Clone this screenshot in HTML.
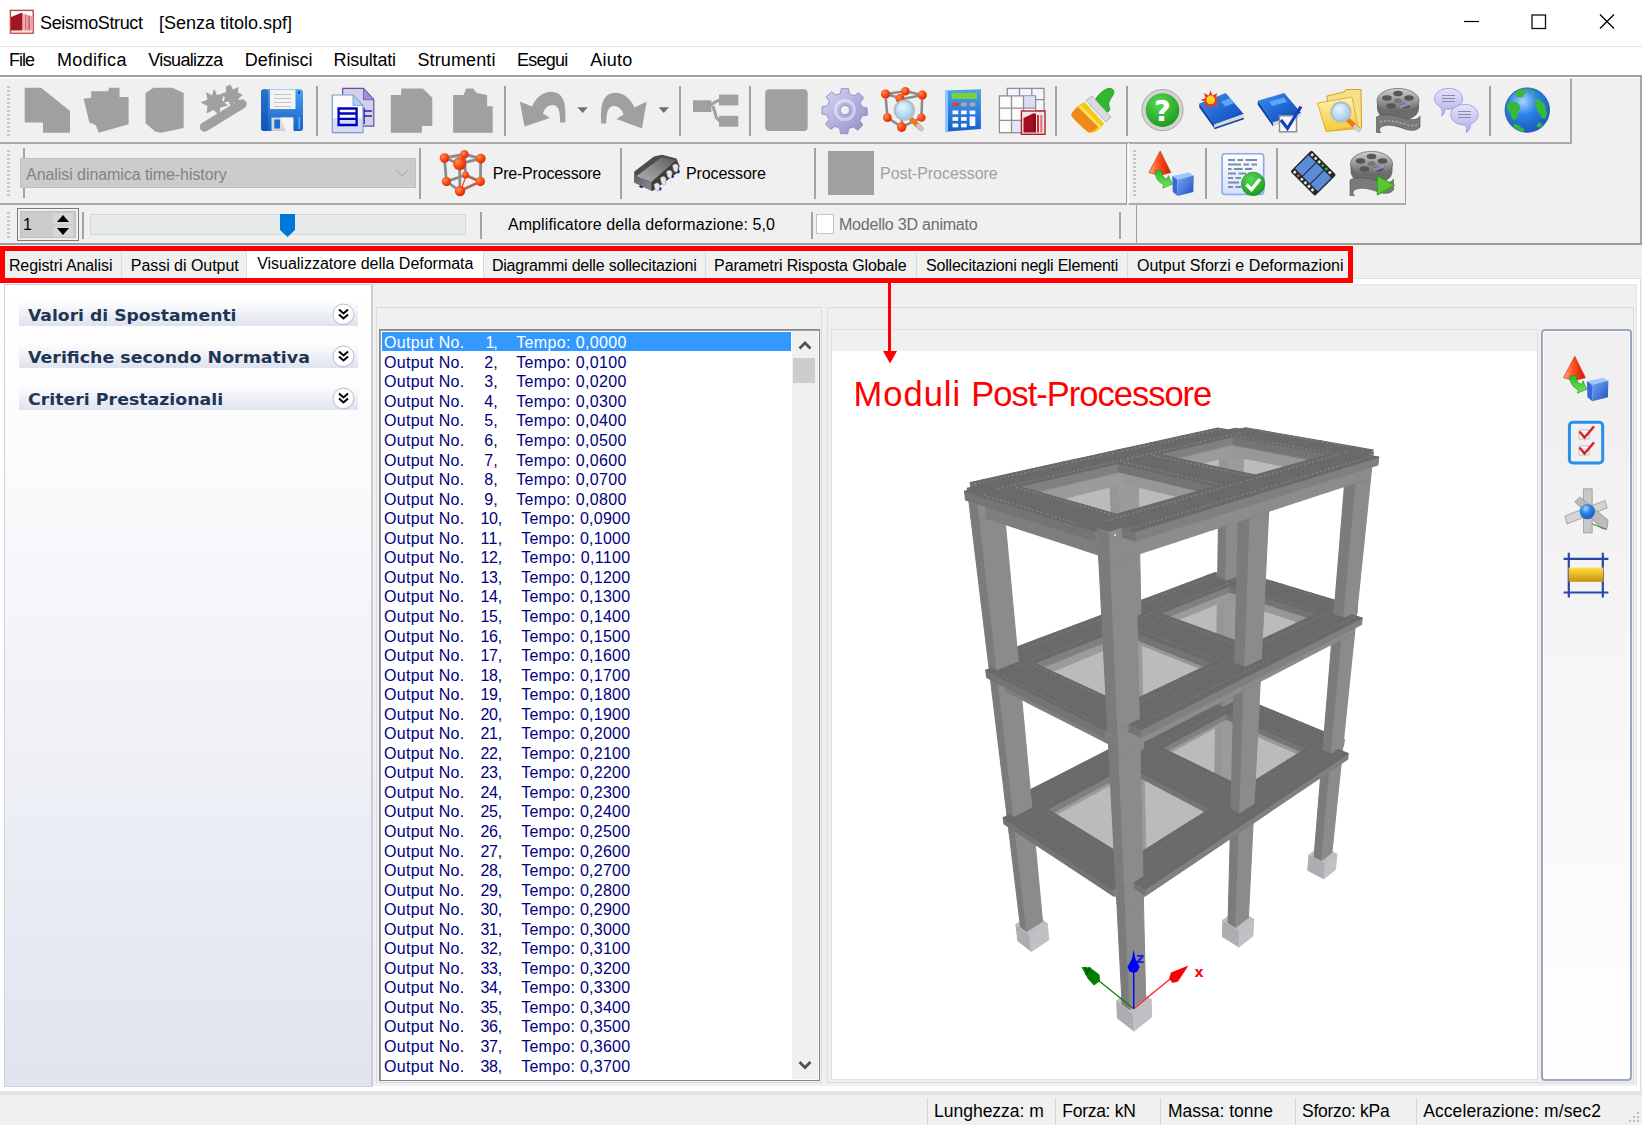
<!DOCTYPE html>
<html lang="it">
<head>
<meta charset="utf-8">
<title>SeismoStruct [Senza titolo.spf]</title>
<style>
html,body{margin:0;padding:0;}
body{width:1642px;height:1125px;position:relative;overflow:hidden;background:#f0f0f0;font-family:"Liberation Sans",sans-serif;color:#000;}
.abs{position:absolute;}
.t{position:absolute;white-space:pre;line-height:1;}
#titlebar{left:0;top:0;width:1642px;height:46px;background:#fff;}
#menubar{left:0;top:46px;width:1642px;height:30px;background:#fff;border-top:1px solid #e5e5e5;box-sizing:border-box;}
.title{font-size:18px;top:13px;color:#000;}
.menu{font-size:18px;top:52px;color:#000;}
.vsep{position:absolute;width:1px;background:#a0a0a0;border-right:1px solid #fff;}
.tabtxt{font-size:16px;top:257px;color:#000;}
.hdr{position:absolute;left:19px;width:339px;height:24px;background:linear-gradient(#fdfdfe,#dfe3ee);}
.hdr span{position:absolute;left:9px;top:4px;font-family:"DejaVu Sans","Liberation Sans",sans-serif;font-weight:bold;font-size:16.5px;letter-spacing:0.45px;color:#1e3556;white-space:pre;line-height:1;}
.row{position:absolute;left:383px;height:19.58px;font-size:16px;color:#000080;white-space:pre;line-height:19.58px;}
.st{font-size:17px;top:1102px;color:#000;}
</style>
</head>
<body>
<!-- title bar -->
<div class="abs" id="titlebar"></div>
<svg class="abs" style="left:9px;top:9px" width="26" height="26" viewBox="9 9 26 26">
  <rect x="10.400" y="10.400" width="22.800" height="22.800" fill="#fff" stroke="#c2473f" stroke-width="1.400"/>
  <polygon points="11,17 21.600,12.800 22.500,13.300 22.500,30.500 11,30.500" fill="#a0151f"/>
  <polygon points="23,13.600 24.700,14 24.700,30.500 23,30.500" fill="#eab0b6"/>
  <polygon points="24.800,14 26.500,14.600 26.500,30.500 24.800,30.500" fill="#d8606e"/>
  <polygon points="26.600,14.800 28.100,15.200 28.100,30.500 26.600,30.500" fill="#e8949c"/>
  <polygon points="28.200,15.200 30.100,15.800 30.100,30.500 28.200,30.500" fill="#d85868"/>
  <polygon points="30.200,15.800 32.400,16.200 32.400,30.500 30.200,30.500" fill="#e3a2a6"/>
  <rect x="11" y="30.900" width="21.500" height="1.300" fill="#f6dcdc"/>
</svg>
<!-- window buttons -->
<svg class="abs" style="left:1450px;top:0" width="192" height="46" viewBox="0 0 192 46">
  <path d="M14 21.5H29" stroke="#000" stroke-width="1.2" fill="none"/>
  <rect x="82" y="15" width="13.5" height="13.5" stroke="#111" stroke-width="1.3" fill="none"/>
  <path d="M150 14.5L164 28.5M164 14.5L150 28.5" stroke="#000" stroke-width="1.3" fill="none"/>
</svg>
<!-- menu bar -->
<div class="abs" id="menubar"></div>
<div class="abs" style="left:0;top:75px;width:1642px;height:2px;background:#a0a0a0;border-bottom:1px solid #fff"></div>
<!-- toolbar row 1 -->
<div class="abs" style="left:0;top:78px;width:1570px;height:62.5px;background:#f0f0f0;border-right:2px solid #a8a8a8;border-bottom:2px solid #ababab;border-top:1px solid #fbfbfb"></div>
<div class="abs" style="left:1640px;top:77px;width:2px;height:167px;background:#a6a6a6"></div>
<!-- toolbar row 2 -->
<div class="abs" style="left:0;top:143px;width:1126px;height:60px;border-right:1px solid #a0a0a0;border-bottom:2px solid #ababab"></div>
<div class="abs" style="left:1128px;top:143px;width:276px;height:60px;border-right:1px solid #a0a0a0;border-bottom:2px solid #ababab;border-left:1px solid #fff"></div>

<!-- toolbar row 3 -->
<div class="abs" style="left:0;top:205px;width:1136px;height:38px;border-right:1px solid #a0a0a0;border-bottom:2px solid #9c9c9c"></div>
<div class="abs" style="left:1137px;top:243px;width:505px;height:2px;background:#9c9c9c"></div>

<!-- grips -->
<div class="abs grip" style="left:7px;top:84px;height:52px"></div>
<div class="abs grip" style="left:7px;top:148px;height:50px"></div>
<div class="abs grip" style="left:7px;top:210px;height:28px"></div>
<div class="abs grip" style="left:1133px;top:148px;height:50px"></div>
<style>
.grip{width:3px;background:repeating-linear-gradient(#f0f0f0 0,#f0f0f0 2px,#c6c6c6 2px,#c6c6c6 4px);}
.ts{position:absolute;width:2px;background:#a3a3a3;}
</style>
<!-- separators row1 -->
<div class="ts" style="left:316px;top:86px;height:50px"></div>
<div class="ts" style="left:504px;top:86px;height:50px"></div>
<div class="ts" style="left:679px;top:86px;height:50px"></div>
<div class="ts" style="left:749px;top:86px;height:50px"></div>
<div class="ts" style="left:1055px;top:86px;height:50px"></div>
<div class="ts" style="left:1126px;top:86px;height:50px"></div>
<div class="ts" style="left:1489px;top:86px;height:50px"></div>
<!-- row2 -->
<div class="ts" style="left:23px;top:148px;height:18px"></div>
<div class="ts" style="left:23px;top:188px;height:10px"></div>
<div class="ts" style="left:419px;top:148px;height:51px"></div>
<div class="ts" style="left:620px;top:148px;height:51px"></div>
<div class="ts" style="left:814px;top:148px;height:51px"></div>
<div class="ts" style="left:1205px;top:148px;height:51px"></div>
<div class="ts" style="left:1276px;top:148px;height:51px"></div>
<!-- combobox -->
<div class="abs" style="left:20px;top:158px;width:396px;height:30px;background:#cccccc;border:1px solid #bfbfbf;box-sizing:border-box"></div>
<svg class="abs" style="left:395px;top:168px" width="14" height="10"><path d="M1 2L7 8L13 2" stroke="#b4b4b4" stroke-width="1.3" fill="none"/></svg>
<div class="abs" style="left:828px;top:151px;width:46px;height:44px;background:#a0a0a0"></div>
<!-- row3 -->
<div class="abs" style="left:17px;top:208px;width:62px;height:33px;border:1px solid #7a7a7a;box-sizing:border-box;background:#f0f0f0"></div>
<div class="abs" style="left:20px;top:211px;width:56px;height:27px;background:#cccccc;border:1px solid #bdbdbd;box-sizing:border-box"></div>
<svg class="abs" style="left:53px;top:213px" width="20" height="24" viewBox="0 0 20 24"><rect x="0" y="0" width="20" height="11" fill="#d6d6d6"/><rect x="0" y="13" width="20" height="11" fill="#d6d6d6"/><path d="M4 9L10 2L16 9Z M4 15L10 22L16 15Z" fill="#000"/></svg>
<div class="ts" style="left:82px;top:212px;height:27px"></div>
<div class="abs" style="left:90px;top:214px;width:376px;height:21px;background:#e7eaea;border:1px solid #d6d6d6;box-sizing:border-box"></div>
<svg class="abs" style="left:280px;top:214px" width="15" height="24" viewBox="0 0 15 24"><path d="M0 0H15V16L7.5 23L0 16Z" fill="#0078d7"/></svg>
<div class="ts" style="left:480px;top:212px;height:27px"></div>
<div class="ts" style="left:811px;top:212px;height:27px"></div>
<div class="abs" style="left:816px;top:214px;width:18px;height:20px;background:#fff;border:1px solid #c4c4c4;box-sizing:border-box"></div>
<div class="ts" style="left:1119px;top:212px;height:27px"></div>
<svg class="abs" style="left:0;top:78px" width="1570" height="64" viewBox="0 78 1570 64">
<defs>
<linearGradient id="gBlue" x1="0" y1="0" x2="0" y2="1"><stop offset="0" stop-color="#4aa0f0"/><stop offset="1" stop-color="#1660c8"/></linearGradient>
<linearGradient id="gGear" x1="0" y1="0" x2="1" y2="1"><stop offset="0" stop-color="#d8d8f4"/><stop offset="1" stop-color="#8c8cc8"/></linearGradient>
<radialGradient id="gNode" cx="0.35" cy="0.35" r="0.8"><stop offset="0" stop-color="#ff9050"/><stop offset="0.5" stop-color="#ff4410"/><stop offset="1" stop-color="#c02000"/></radialGradient>
<radialGradient id="gLens" cx="0.4" cy="0.35" r="0.8"><stop offset="0" stop-color="#e8f6ff"/><stop offset="1" stop-color="#88c0e8"/></radialGradient>
<radialGradient id="gGreen" cx="0.4" cy="0.3" r="0.9"><stop offset="0" stop-color="#58d858"/><stop offset="1" stop-color="#108c10"/></radialGradient>
<radialGradient id="gGlobe" cx="0.4" cy="0.3" r="0.9"><stop offset="0" stop-color="#a8d4ff"/><stop offset="0.35" stop-color="#2c84e8"/><stop offset="1" stop-color="#0c48a8"/></radialGradient>
<linearGradient id="gBook" x1="0" y1="0" x2="1" y2="1"><stop offset="0" stop-color="#3c8cf0"/><stop offset="1" stop-color="#0848b8"/></linearGradient>
<linearGradient id="gFolder" x1="0" y1="0" x2="0" y2="1"><stop offset="0" stop-color="#fff4b0"/><stop offset="1" stop-color="#f4c838"/></linearGradient>
<linearGradient id="gReel" x1="0" y1="0" x2="0" y2="1"><stop offset="0" stop-color="#d0d0d0"/><stop offset="1" stop-color="#606060"/></linearGradient>
<linearGradient id="gChat" x1="0" y1="0" x2="0" y2="1"><stop offset="0" stop-color="#e4e4fc"/><stop offset="1" stop-color="#b0b0e8"/></linearGradient>
</defs>
<g fill="#a0a0a0">
<!-- new -->
<polygon points="24.7,87.8 41.1,87.8 70,111 70,132.7 43,132.7 43,122.4 24.7,122.4"/>
<!-- open -->
<polygon points="83.6,98.8 91.2,97.8 91.2,91.2 108.2,91.2 109.1,87.8 119.5,87.8 119.5,96.9 128.6,96.9 128.6,124.3 98.7,132.7 95.9,125.2 89.3,122.4"/>
<!-- 3 -->
<polygon points="145.5,93.1 153.5,87.8 172.4,87.8 183.7,93.1 183.7,128 161,132.7 155.4,131.8 145.5,123.3"/>
<!-- wand -->
<path d="M204.500 127L242 104" stroke="#a0a0a0" stroke-width="9.500" stroke-linecap="round"/>
<polygon points="214,88.500 217,95 224.500,93 222,100.500 228,105.500 220.500,107.500 219,115 213.500,110 206.500,113.500 207.500,106 200.500,102.500 207.500,99.500 206,92 212,95.500"/>
<polygon points="230.500,84.500 233,89.500 238.500,87 238,92.500 243,95 238.500,98.500 240,103.500 234.500,102.500 231,106.500 228.500,101.500 223,102.500 225,97.500 221,94 226,92 226,86.500"/>
<!-- copy disabled -->
<polygon points="401.2,88.4 422.9,88.4 432.3,97.8 432.3,126.1 421.9,126.1 421.9,132.7 390.8,132.7 390.8,95 401.2,95"/>
<!-- paste disabled -->
<polygon points="453.1,95 463.5,95 466.3,88.4 472.9,88.4 476.7,93.1 487.1,95 487.1,106.3 492.7,106.3 492.7,132.7 453.1,132.7"/>
<!-- undo -->
<path d="M519.8 101.6L524.5 126.5L550 118L543 113.5C545 106 552 103 556.5 106.5C559.5 109 560 114 560.2 122.6L565.3 122.6C565.8 112 566 100 559.5 94.5C551 88.5 538 92.5 532 106.5Z"/>
<!-- redo -->
<path d="M646.7 101.6L642 128.5L616.5 119L623.5 114.5C621.5 107 614.5 104 610 107.500C607 110 606.5 115 606.3 123.600L601.200 123.600C600.700 113 600.500 101 607 95.500C615.500 89.500 628.500 93.500 634.500 107.500Z"/>
<!-- tree -->
<rect x="693" y="100.3" width="18.4" height="11.7"/>
<rect x="719" y="94.6" width="19.3" height="10.8"/>
<rect x="719" y="115.8" width="19.3" height="10.9"/>
<path d="M709 106L716 101.500L720 100M713 106L716.500 118L720 121" stroke="#a0a0a0" stroke-width="3" fill="none"/>
<!-- square -->
<rect x="765.2" y="89.3" width="42.5" height="41.6" rx="4"/>
</g>
<g fill="#707070"><polygon points="577.4,107.3 587.8,107.3 582.6,112.9"/><polygon points="658.6,107.3 669,107.3 663.8,112.9"/></g>
<!-- save -->
<g>
<rect x="261" y="89.3" width="42" height="41.6" rx="3" fill="url(#gBlue)"/>
<rect x="261" y="89.3" width="7" height="41.6" rx="3" fill="#0c4cb0" opacity="0.55"/>
<rect x="270" y="89.6" width="25.5" height="19.5" fill="#f4f4f4"/>
<path d="M274 94.500H291M274 98.500H291M274 102.500H291M274 106.500H291" stroke="#c4c4c4" stroke-width="1.2"/>
<rect x="271.500" y="117.600" width="21.800" height="13.300" fill="#d8d8d8"/>
<polygon points="280,117.600 293.300,117.600 293.300,130.900 286,130.900" fill="#f4f4f4"/>
<rect x="274.300" y="119.500" width="5.700" height="9" fill="#1c6cd8"/>
<rect x="298" y="91.500" width="2" height="2" fill="#083c90"/>
<rect x="298.500" y="117" width="1.600" height="12" fill="#5cb0ff"/>
</g>
<!-- copy (enabled) -->
<g>
<polygon points="342.700,88.400 363.500,88.400 373.800,99.700 373.800,126.100 342.700,126.100" fill="#d4d0ec" stroke="#6850a8" stroke-width="1.200"/>
<polygon points="363.500,88.400 373.800,99.700 363.500,99.700" fill="#a090d8" stroke="#6850a8" stroke-width="0.800"/>
<path d="M364 108V124M364 111H372M364 116H372" stroke="#2020a8" stroke-width="1.600" fill="none"/>
<polygon points="332.300,95 353,95 363,105.400 363,132.700 332.300,132.700" fill="#fbfcff" stroke="#7c98d0" stroke-width="1.200"/>
<polygon points="353,95 363,105.400 353,105.400" fill="#a8d4f0" stroke="#7c98d0" stroke-width="0.800"/>
<rect x="333" y="118" width="29.300" height="14" fill="#c4d0ec" opacity="0.7"/>
<path d="M338.600 107.600V126M356.600 107.600V126M337.400 108.500H357.800M338.600 113.500H356.600M338.600 118.800H356.600M337.400 125H357.800" stroke="#0000c0" stroke-width="2.300" fill="none"/>
</g>
</svg>
<svg class="abs" style="left:0;top:78px" width="1570" height="64" viewBox="0 78 1570 64">
<!-- gear -->
<g transform="translate(844.9 110.1)">
<path id="gearp" fill="url(#gGear)" stroke="#8484c0" stroke-width="0.8" d="M-3.6 -21.5L3.6 -21.5L4.6 -16.2L9.2 -14.3L13.600 -17.400L18.700 -12.300L15.400 -7.700L17.100 -3.100L22.300 -2L22.300 5.100L17 6L15 10.500L18 15L12.800 20L8.400 16.800L3.800 18.500L2.800 23.700L-4.400 23.500L-5.200 18.200L-9.800 16.200L-14.300 19.200L-19.300 14L-16 9.600L-17.800 5L-23 3.800L-22.800 -3.400L-17.500 -4.200L-15.600 -8.800L-18.600 -13.300L-13.400 -18.300L-9 -15L-4.500 -16.700Z"/>
<circle r="4.700" fill="#f0f0f0" stroke="#8484c0" stroke-width="0.800"/>
<circle r="9.500" fill="none" stroke="#ffffff" stroke-opacity="0.45" stroke-width="3"/>
</g>
<!-- cube with magnifier -->
<g stroke="#8c8c8c" stroke-width="2.600" fill="none">
<path d="M885.500 94L905.300 91.200L922.300 95L921.400 117.600L901.600 127.100L887.400 117.600ZM885.500 94L903 99L922.300 95M903 99L901.600 127.100"/>
</g>
<g fill="url(#gNode)"><circle cx="885.500" cy="94" r="4.600"/><circle cx="905.300" cy="91.200" r="4.300"/><circle cx="922.300" cy="95" r="4.600"/><circle cx="887.400" cy="117.600" r="4.400"/><circle cx="921.400" cy="117.600" r="4.200"/><circle cx="901.600" cy="127.100" r="4.800"/><circle cx="900" cy="98.500" r="4.500"/></g>
<path d="M911 119L921 128.500" stroke="#f07818" stroke-width="5" stroke-linecap="round"/>
<path d="M918.500 126L921.500 129" stroke="#c8c8c8" stroke-width="4.500" stroke-linecap="round"/>
<circle cx="904.400" cy="110.100" r="9.600" fill="url(#gLens)" stroke="#b8bcc4" stroke-width="2.200"/>
<!-- calculator -->
<g>
<polygon points="945,90.500 980.900,89.300 980.900,129 945,131.800" fill="url(#gBlue)"/>
<polygon points="945,90.500 948,89.500 948,131.500 945,131.800" fill="#8cc4ff"/>
<rect x="951.600" y="92.700" width="25.500" height="6.300" fill="#78d040"/>
<rect x="952.500" y="102.600" width="5.700" height="3.800" fill="#e04030"/><rect x="961" y="102.600" width="5.700" height="3.800" fill="#b0a8a8"/><rect x="969.600" y="102.600" width="5.700" height="3.800" fill="#b0a8a8"/>
<g fill="#f4f8ff"><rect x="952.500" y="110.500" width="5.700" height="3.800"/><rect x="961" y="110.500" width="5.700" height="3.800"/><rect x="969.600" y="110.500" width="5.700" height="3.800"/>
<rect x="952.500" y="117" width="5.700" height="3.800"/><rect x="961" y="117" width="5.700" height="3.800"/><rect x="969.600" y="116.500" width="5.700" height="9.500"/>
<rect x="952.500" y="123.500" width="5.700" height="3.800"/><rect x="961" y="123.500" width="5.700" height="3.800"/></g>
</g>
<!-- table + logo -->
<g stroke="#909090" stroke-width="1.300">
<rect x="1007.300" y="88.400" width="36.800" height="34" fill="#f4f4ff"/>
<path d="M1019.500 88.400V122M1031.800 88.400V122M1007.300 99.700H1044M1007.300 111H1044" fill="none"/>
<rect x="999.400" y="95.900" width="36.200" height="36.800" fill="#fcfcff"/>
<rect x="1024" y="96.500" width="11" height="11.500" fill="#dcdcf8" stroke="none"/><rect x="1012" y="120.500" width="11" height="11.500" fill="#e4e4fa" stroke="none"/>
<path d="M1011.500 95.900V132.700M1023.500 95.900V132.700M999.400 108.200H1035.600M999.400 120.400H1035.600" fill="none"/>
</g>
<rect x="1021.400" y="111" width="23.600" height="23.300" fill="#f8e4e4" stroke="#b02030" stroke-width="1.400"/>
<polygon points="1023.500,118 1033,113.500 1033,132.500 1023.500,132.500" fill="#a01020"/>
<rect x="1033" y="113.500" width="3" height="19" fill="#8c0c18"/><rect x="1037" y="115" width="2" height="17.500" fill="#c83040"/><rect x="1040.300" y="115" width="2" height="17.500" fill="#e07078"/>
<!-- brush -->
<g>
<path d="M1094 102C1098 94 1104 90 1108 88.500C1112 87.500 1115 90.500 1113.500 94C1111 99 1107 102 1109.500 107.500C1110.500 110.500 1108 113 1105 112Z" fill="#30b830" stroke="#208c20" stroke-width="0.800"/>
<polygon points="1086,100.500 1092,96 1111,117 1106,122" fill="#d8dce0" stroke="#a0a4a8" stroke-width="0.700"/>
<path d="M1084.500 102L1104 123.500C1100 130 1094 134 1088.500 132.500C1082 127 1074 120 1071 115C1073 110 1078 105 1084.500 102Z" fill="#f8c818"/>
<path d="M1071 115C1074 120 1082 127 1088.500 132.500C1092 132 1096 129.500 1098 126.500L1077.500 107C1075 109 1072.500 112 1071 115Z" fill="#f08818"/>
<path d="M1080 106.500L1101 128" stroke="#fce870" stroke-width="2" fill="none"/>
</g>
<!-- help -->
<circle cx="1162.500" cy="110.100" r="20.600" fill="#d4d4d4" stroke="#a8a8a8" stroke-width="1"/>
<circle cx="1162.500" cy="110.100" r="16.800" fill="url(#gGreen)"/>
<text x="1162.500" y="120.500" text-anchor="middle" font-family="DejaVu Sans, Liberation Sans, sans-serif" font-weight="bold" font-size="29" fill="#ffffff">?</text>
<!-- book with star -->
<g>
<polygon points="1199.300,103.500 1225.700,93.100 1243.700,113.900 1214.400,124.500" fill="url(#gBook)"/>
<polygon points="1199.300,103.500 1214.400,124.500 1214.400,128.500 1199.300,107.500" fill="#0a44a8"/>
<polygon points="1214.400,124.500 1243.700,113.900 1243.700,118 1214.400,128.500" fill="#d8d8d8"/>
<path d="M1214.400 128.500L1243.700 118.600" stroke="#0a44a8" stroke-width="1.600"/>
<polygon points="1221,101.500 1230,98 1234,103 1225,106.500" fill="#5ca4f8"/>
<polygon points="1210.600,90.500 1212.500,95.500 1217.500,93 1215.500,98 1220.500,100 1215.500,102 1217.500,107 1212.500,104.500 1210.600,109.500 1208.700,104.500 1203.700,107 1205.700,102 1200.700,100 1205.700,98 1203.700,93 1208.700,95.500" fill="#f03818"/>
<circle cx="1210.600" cy="99.900" r="4.300" fill="#ffd020"/>
</g>
<!-- book with check -->
<g>
<polygon points="1257.800,100.700 1284.200,93.100 1301.200,112.900 1273,122.500" fill="url(#gBook)"/>
<polygon points="1257.800,100.700 1273,122.500 1273,126.500 1257.800,104.700" fill="#0a44a8"/>
<polygon points="1273,122.500 1301.200,112.900 1301.200,116.500 1273,126.500" fill="#d8d8d8"/>
<polygon points="1269,101.500 1284,97.500 1287,102 1272,106" fill="#5ca4f8"/>
<rect x="1279.500" y="115.800" width="17" height="16" fill="#fafafa" stroke="#909090" stroke-width="1.500"/>
<path d="M1281 120L1287.500 128.500L1301 106.500" stroke="#1040c0" stroke-width="3.200" fill="none"/>
</g>
<!-- folder with magnifier -->
<g>
<polygon points="1327,96 1344,92 1346,89.500 1361,89.500 1361.500,128 1330,131" fill="#f8e088" stroke="#d0a020" stroke-width="1"/>
<polygon points="1317.500,103 1352,97 1358,127 1326,131.500" fill="url(#gFolder)" stroke="#e0b030" stroke-width="1"/>
<path d="M1347.500 119.500L1358 129" stroke="#f07818" stroke-width="5" stroke-linecap="round"/>
<path d="M1355.500 127L1358.500 130" stroke="#d0d0d0" stroke-width="4.500" stroke-linecap="round"/>
<circle cx="1340.900" cy="112" r="9.600" fill="url(#gLens)" stroke="#b8bcc4" stroke-width="2.200"/>
</g>
<!-- film reel -->
<g id="reel">
<path d="M1377 100V108C1377 116 1386 121 1398 121C1410 121 1419 116 1419 108V100Z" fill="#6c6c6c"/>
<ellipse cx="1398" cy="100.700" rx="21" ry="12.300" fill="url(#gReel)" stroke="#707070" stroke-width="0.800"/>
<ellipse cx="1398" cy="100.700" rx="4" ry="2.500" fill="#787878"/>
<g fill="#565656"><ellipse cx="1398" cy="93.500" rx="4.800" ry="2.800"/><ellipse cx="1387" cy="98" rx="4.800" ry="2.800"/><ellipse cx="1409" cy="98" rx="4.800" ry="2.800"/><ellipse cx="1391" cy="106" rx="4.800" ry="2.800"/><ellipse cx="1405" cy="106" rx="4.800" ry="2.800"/></g>
<path d="M1400 107L1410 103" stroke="#a0a0f0" stroke-width="3" opacity="0.700"/>
<path d="M1376.500 117C1384 112 1398 116 1408 119C1414 120.500 1419 119 1420 116V127C1417 131 1410 131.500 1402 128C1394 125 1386 124 1381 127C1379 129 1379 131 1381 132.500H1376.500Z" fill="#7a7a7a" stroke="#505050" stroke-width="0.600"/>
<path d="M1380 122C1388 119 1398 122 1408 125C1413 126.500 1417 125.500 1419 123" stroke="#b8b8b8" stroke-width="1.200" fill="none" stroke-dasharray="2 2"/>
</g>
<!-- chat bubbles -->
<g stroke="#9c9cd8" stroke-width="0.900">
<path d="M1448.600 88.400C1456.500 88.400 1462.600 93 1462.600 98.800C1462.600 104.500 1456.500 109.200 1448.600 109.200C1447 109.200 1446 109 1445 108.800C1445 112 1444 114.500 1441.500 116C1442.500 113 1442 110 1441 107.500C1437 105.500 1434.600 102.500 1434.600 98.800C1434.600 93 1440.700 88.400 1448.600 88.400Z" fill="url(#gChat)"/>
<path d="M1464.400 104.400C1472.300 104.400 1478 109 1478 114.800C1478 119 1475 122.500 1470.500 124C1470.500 128 1469 131 1466 132.700C1467 129.500 1466.500 127 1465.500 125.200C1457 125.200 1450.800 120.500 1450.800 114.800C1450.800 109 1456.500 104.400 1464.400 104.400Z" fill="url(#gChat)"/>
</g>
<path d="M1442 95.500H1455M1442 98.500H1455M1442 101.500H1455M1458 111.500H1471M1458 114.500H1471M1458 117.500H1471" stroke="#8c8ca8" stroke-width="1.200"/>
<!-- globe -->
<circle cx="1527.300" cy="110.100" r="22.200" fill="url(#gGlobe)" stroke="#1c4ca0" stroke-width="0.800"/>
<g fill="#38b838">
<path d="M1516 92C1519 89.500 1523 88.500 1526 89C1528 91 1526 93 1523.500 94C1524.500 96.500 1522 98.500 1519.500 97C1517 98 1514 96 1516 92Z"/>
<path d="M1508 103C1511 100.500 1516 101 1518.500 104C1521 106 1520.500 110 1518 112C1519 115.500 1517 119 1514 120.500C1511.500 119 1510 116 1510.500 113C1507.500 111 1506 107 1508 103Z"/>
<path d="M1536 99C1538.500 98 1541 99.500 1541.500 102C1544 103 1546 106 1545.500 109C1547.500 112 1547 116 1545 118.500C1542 119.500 1540 117 1540.500 114C1537.500 113 1536 110 1537 107C1534.500 105 1534 101 1536 99Z"/>
<path d="M1514 124.500C1517 123.500 1520 125 1521 127.500C1524 128 1525.500 130 1524 131.800C1520 131.500 1516 129.500 1513 126.500Z"/>
<path d="M1538 123C1540 122 1542.500 123 1542 125.500C1540.500 127.500 1538 128 1536.500 126.500Z"/>
<path d="M1531 90.500C1533 90 1535.500 91.500 1535 93.500C1533 94.500 1531 93.500 1531 90.500Z"/>
</g>
</svg>
<svg class="abs" style="left:420px;top:143px" width="990" height="60" viewBox="420 143 990 60">
<defs>
<linearGradient id="gChip" x1="0" y1="0" x2="1" y2="1"><stop offset="0" stop-color="#b4b4b4"/><stop offset="1" stop-color="#505050"/></linearGradient>
<linearGradient id="gCone" x1="0" y1="0" x2="1" y2="0"><stop offset="0" stop-color="#ffb070"/><stop offset="0.45" stop-color="#ff5020"/><stop offset="1" stop-color="#d01800"/></linearGradient>
<linearGradient id="gCubeF" x1="0" y1="0" x2="1" y2="1"><stop offset="0" stop-color="#78a8f8"/><stop offset="1" stop-color="#2050c0"/></linearGradient>
<linearGradient id="gDoc" x1="0" y1="0" x2="0" y2="1"><stop offset="0" stop-color="#ffffff"/><stop offset="1" stop-color="#d4e0fc"/></linearGradient>
<linearGradient id="gArrG" x1="0" y1="0" x2="0" y2="1"><stop offset="0" stop-color="#30b830"/><stop offset="1" stop-color="#70e850"/></linearGradient>
<g id="conecube">
<polygon points="11.400,0 22,21.500 11,24.500 0,21.500" fill="url(#gCone)" stroke="#c82810" stroke-width="0.600"/>
<path d="M6.500 19.500C6 26 9 31 15 33.500L14 37L23.500 33L19.500 24.500L18.500 28C14.500 27 12.500 23.500 13 19.500Z" fill="url(#gArrG)" stroke="#189018" stroke-width="0.600"/>
<polygon points="23.500,25 40,21.500 45,24.500 28.500,28.500" fill="#a0c4ff"/>
<polygon points="23.500,25 28.500,28.500 29,45 24,41" fill="#3868d8"/>
<polygon points="28.500,28.500 45,24.500 44.500,41 29,45" fill="url(#gCubeF)"/>
</g>
</defs>
<!-- pre-processor cube -->
<g stroke="#8c8c8c" stroke-width="2.800" fill="none">
<path d="M444.500 158L464.400 154.300L480.800 158.600L480.400 181.600L460 191L446.400 181.600ZM444.500 158L459.600 163.700L480.800 158.600M459.600 163.700L460 191M464.400 154.300L465.500 175L446.400 181.600M465.500 175L480.400 181.600"/>
</g>
<path d="M466 176L480 182L461 190Z" fill="none" stroke="#ff4010" stroke-width="1.200"/>
<g fill="url(#gNode)"><circle cx="444.500" cy="158" r="4.800"/><circle cx="464.400" cy="154.300" r="4.200"/><circle cx="480.800" cy="158.600" r="4.800"/><circle cx="446.400" cy="181.600" r="4.600"/><circle cx="480.400" cy="181.600" r="4.600"/><circle cx="460" cy="191" r="5.200"/><circle cx="465.500" cy="175" r="3.400"/><circle cx="459.600" cy="163.700" r="6.600"/></g>
<!-- chip -->
<g>
<polygon points="634.300,171.400 654,156.500 662,154.800 676.500,158.500 679.300,165.500 678.800,171.400 652.400,191 650.900,190.500 634.300,182.600" fill="#4c4c4c"/>
<polygon points="651.400,182.100 675.800,160.200 679.300,165.500 678.800,171.400 652.400,190.900" fill="#3c3c3c"/>
<g fill="#1818a0"><ellipse cx="659.500" cy="188.800" rx="2.200" ry="1.600"/><ellipse cx="672" cy="176.500" rx="2" ry="1.500"/><ellipse cx="641.500" cy="186.500" rx="2.200" ry="1.400"/><ellipse cx="678.200" cy="171.500" rx="1.500" ry="2"/></g>
<g fill="#e6e6e6" stroke="#8c8c8c" stroke-width="0.500"><path d="M654 184.500C656 182 659.500 182.500 659.800 185.500L659 190.500C657.500 191.500 655.500 190.500 655 189Z"/><path d="M660.300 178.200C662.300 175.700 665.800 176.200 666.100 179.200L665.300 184.200C663.800 185.200 661.800 184.200 661.300 182.700Z"/><path d="M666.400 171.800C668.400 169.300 671.900 169.800 672.200 172.800L671.400 177.800C669.900 178.800 667.900 177.800 667.400 176.300Z"/><path d="M672.500 165.500C674.500 163 678 163.500 678.300 166.500L677.500 171.500C676 172.500 674 171.500 673.500 170Z"/></g>
<polygon points="636.200,176.300 661.700,157.200 675.800,160.200 651.400,182.100" fill="url(#gChipT)"/>
<polygon points="634.300,171.400 636.200,176.300 651.400,182.100 650.900,190.500 634.300,182.600" fill="url(#gChipF)"/>
<defs><linearGradient id="gChipT" x1="0" y1="1" x2="1" y2="0"><stop offset="0" stop-color="#b0b0b0"/><stop offset="0.500" stop-color="#8a8a8a"/><stop offset="1" stop-color="#5a5a5a"/></linearGradient>
<linearGradient id="gChipF" x1="0" y1="0" x2="1" y2="1"><stop offset="0" stop-color="#5c5c5c"/><stop offset="1" stop-color="#8c8c8c"/></linearGradient></defs>
</g>
<!-- cone/cube -->
<use href="#conecube" transform="translate(1148.800 151.100)"/>
<!-- doc with check -->
<rect x="1222.100" y="153.700" width="41.600" height="40.800" rx="3" fill="url(#gDoc)" stroke="#88a8f0" stroke-width="1.600"/>
<path d="M1228 160H1235M1237.500 160H1243M1245.500 160H1257M1228 164.500H1241M1243.500 164.500H1249M1251.500 164.500H1257M1228 169H1231.500M1234 169H1242.500M1245 169H1252M1228 173.500H1236M1238.500 173.500H1246M1228 178H1233M1235.500 178H1241M1228 182.500H1239M1228 187H1233M1235.500 187H1241" stroke="#7c8ca8" stroke-width="2.200"/>
<circle cx="1253.100" cy="183.900" r="11.700" fill="url(#gGreen)" stroke="#108010" stroke-width="0.600"/>
<path d="M1246.500 184.500L1251.500 189.500L1260 179" stroke="#fff" stroke-width="3.400" fill="none"/>
<!-- film strip -->
<g transform="translate(1313.200 173.200) rotate(45)">
<rect x="-17.400" y="-15" width="34.800" height="30" rx="1.500" fill="#20282c"/>
<rect x="-16" y="-9.500" width="10" height="19" fill="#5c8cd8"/><rect x="-5" y="-9.500" width="10" height="19" fill="#5c8cd8"/><rect x="6" y="-9.500" width="10" height="19" fill="#5c8cd8"/>
<g fill="#e8e8e8"><rect x="-15" y="-13.500" width="2.600" height="2.600"/><rect x="-10" y="-13.500" width="2.600" height="2.600"/><rect x="-5" y="-13.500" width="2.600" height="2.600"/><rect x="0" y="-13.500" width="2.600" height="2.600" fill="#30c030"/><rect x="5" y="-13.500" width="2.600" height="2.600" fill="#30c030"/><rect x="10" y="-13.500" width="2.600" height="2.600"/>
<rect x="-15" y="11" width="2.600" height="2.600"/><rect x="-10" y="11" width="2.600" height="2.600" fill="#f05030"/><rect x="-5" y="11" width="2.600" height="2.600"/><rect x="0" y="11" width="2.600" height="2.600"/><rect x="5" y="11" width="2.600" height="2.600"/><rect x="10" y="11" width="2.600" height="2.600"/></g>
</g>
<!-- reel with play -->
<g transform="translate(-26.500 63)">
<path d="M1377 100V108C1377 116 1386 121 1398 121C1410 121 1419 116 1419 108V100Z" fill="#6c6c6c"/>
<ellipse cx="1398" cy="100.700" rx="21" ry="12.300" fill="url(#gReel)" stroke="#707070" stroke-width="0.800"/>
<ellipse cx="1398" cy="100.700" rx="4" ry="2.500" fill="#787878"/>
<g fill="#565656"><ellipse cx="1398" cy="93.500" rx="4.800" ry="2.800"/><ellipse cx="1387" cy="98" rx="4.800" ry="2.800"/><ellipse cx="1409" cy="98" rx="4.800" ry="2.800"/><ellipse cx="1391" cy="106" rx="4.800" ry="2.800"/><ellipse cx="1405" cy="106" rx="4.800" ry="2.800"/></g>
<path d="M1400 107L1410 103" stroke="#a0a0f0" stroke-width="3" opacity="0.700"/>
<path d="M1376.500 117C1384 112 1398 116 1408 119C1414 120.500 1419 119 1420 116V127C1417 131 1410 131.500 1402 128C1394 125 1386 124 1381 127C1379 129 1379 131 1381 132.500H1376.500Z" fill="#7a7a7a" stroke="#505050" stroke-width="0.600"/>
</g>
<polygon points="1377.300,176 1394.600,185.400 1377.300,195" fill="#58c830" stroke="#28a018" stroke-width="1"/>
</svg>
<!-- tabs -->
<div class="abs" style="left:0;top:251px;width:1642px;height:27px;background:#f0f0f0"></div>
<div class="abs" style="left:1353px;top:278px;width:287px;height:1px;background:#e0e0e0"></div>
<div class="abs" style="left:0;top:279px;width:1639.5px;height:5px;background:#fff"></div>
<div class="abs" style="left:247px;top:251px;width:236px;height:27px;background:#fff"></div>
<div class="abs tabsep" style="left:121px"></div>
<div class="abs tabsep" style="left:246px"></div>
<div class="abs tabsep" style="left:483px"></div>
<div class="abs tabsep" style="left:705px"></div>
<div class="abs tabsep" style="left:916px"></div>
<div class="abs tabsep" style="left:1127px"></div>
<style>.tabsep{top:252px;width:1px;height:26px;background:#d9d9d9}</style>
<!-- red annotation box -->
<div class="abs" style="left:0;top:246px;width:1353px;height:37px;border:5px solid #ff0000;box-sizing:border-box"></div>
<!-- main area frame -->
<div class="abs" style="left:0;top:283px;width:1639.5px;height:807.5px;background:#fff"></div>
<div class="abs" style="left:1639.5px;top:278px;width:1px;height:812px;background:#e0e0e0"></div>
<div class="abs" style="left:4px;top:284px;width:1633px;height:802px;background:#f0f0f0;box-sizing:border-box;border-top:1px solid #e6e6e6;border-right:1px solid #e2e2e2"></div>
<div class="abs" style="left:0;top:1090.5px;width:1642px;height:4.5px;background:#e2e2e2"></div>
<!-- left panel -->
<div class="abs" style="left:4px;top:284px;width:369px;height:803px;box-sizing:border-box;border:1px solid #cdd2dc;border-right:2px solid #c9cdd6;background:linear-gradient(#ffffff 0,#fbfbfd 22%,#eef0f6 60%,#e0e4ee 100%)"></div>
<div class="hdr" style="top:302px"></div>
<div class="hdr" style="top:344px"></div>
<div class="hdr" style="top:386px"></div>
<svg class="abs chev" style="left:332px;top:303px" width="23" height="23" viewBox="0 0 23 23"><use href="#chev"/></svg>
<svg class="abs chev" style="left:332px;top:345px" width="23" height="23" viewBox="0 0 23 23"><use href="#chev"/></svg>
<svg class="abs chev" style="left:332px;top:387px" width="23" height="23" viewBox="0 0 23 23"><use href="#chev"/></svg>
<svg width="0" height="0" style="position:absolute"><defs>
<radialGradient id="cg" cx="0.4" cy="0.3" r="0.8"><stop offset="0" stop-color="#fff"/><stop offset="0.7" stop-color="#fff"/><stop offset="1" stop-color="#cdd6ea"/></radialGradient>
<g id="chev"><circle cx="11.5" cy="11.5" r="10.5" fill="url(#cg)" stroke="#b9bfca" stroke-width="1"/><path d="M7 6.5L11.5 10.5L16 6.5M7 11.5L11.5 15.5L16 11.5" stroke="#000" stroke-width="2" fill="none"/></g>
</defs></svg>
<!-- group box 1 -->
<div class="abs" style="left:376px;top:307px;width:446px;height:776px;box-sizing:border-box;border:1px solid #dcdcdc"></div>
<!-- list box -->
<div class="abs" style="left:379px;top:329px;width:441px;height:752px;box-sizing:border-box;border:1px solid #828790;background:#fff;box-shadow:inset 1px 1px 0 #a0a0a0"></div>
<div class="abs" style="left:792px;top:331px;width:26px;height:748px;background:#f0f0f0"></div>
<div class="abs" style="left:793px;top:358px;width:22px;height:25px;background:#cdcdcd"></div>
<svg class="abs" style="left:797px;top:339px" width="16" height="12"><path d="M2.5 9.5L8 4L13.5 9.5" stroke="#505050" stroke-width="2.7" fill="none"/></svg>
<svg class="abs" style="left:797px;top:1059px" width="16" height="12"><path d="M2.5 3L8 8.5L13.5 3" stroke="#505050" stroke-width="2.7" fill="none"/></svg>
<div class="abs" style="left:382px;top:332px;width:409px;height:19px;background:#3399ff"></div>
<!-- group box 2 -->
<div class="abs" style="left:827px;top:307px;width:807px;height:776px;box-sizing:border-box;border:1px solid #dcdcdc"></div>
<div class="abs" style="left:831px;top:329px;width:707px;height:751px;box-sizing:border-box;border:1px solid #e0e0e0;background:#f0f0f0"></div>
<div class="abs" id="view3d" style="left:832px;top:351px;width:705px;height:728px;background:#fff"></div>
<!-- side toolbar -->
<div class="abs" style="left:1541px;top:329px;width:91px;height:752px;box-sizing:border-box;border:2px solid #9aa8bd;border-radius:4px;background:linear-gradient(#f0f0f0 0,#f0f0f0 12%,#ffffff 100%);box-shadow:inset 0 0 0 1px #fff"></div>
<!-- red arrow + label -->
<div class="abs" style="left:888px;top:283px;width:3px;height:70px;background:#ff0000"></div>
<svg class="abs" style="left:883px;top:351px" width="14" height="13"><path d="M0 0H14L7 12.5Z" fill="#ff0000"/></svg>
<svg class="abs" style="left:832px;top:351px" width="705" height="728" viewBox="0 0 705 728" stroke-width="1.1" stroke-linejoin="round">
<style>.dl{stroke:#959595;stroke-width:1.2;stroke-dasharray:1.2 3;fill:none}.d2{stroke:#838383}.d1{stroke:#7a7a7a}</style>
<polygon points="391.4,474.4 377.9,467.2 378.1,452.6 391.7,459.7" fill="#adadb1" stroke="#adadb1"/>
<polygon points="391.4,474.4 403.3,466.6 403.7,452.0 391.7,459.7" fill="#c1c1c5" stroke="#c1c1c5"/>
<polygon points="391.7,459.7 403.7,452.0 390.2,445.1 378.1,452.6" fill="#bebec2" stroke="#bebec2"/>
<polygon points="388.7,457.3 382.4,454.1 383.6,369.9 390.5,372.9" fill="#7b7b7b" stroke="#7b7b7b"/>
<polygon points="388.7,457.3 399.4,450.5 402.4,366.5 390.5,372.9" fill="#8b8b8b" stroke="#8b8b8b"/>
<polygon points="390.5,372.9 402.4,366.5 395.5,363.5 383.6,369.9" fill="#6a6a6a" stroke="#6a6a6a"/>
<polygon points="390.5,372.9 383.6,369.9 383.8,357.8 390.8,360.8" fill="#7b7b7b" stroke="#7b7b7b"/>
<polygon points="390.5,372.9 402.4,366.5 402.8,354.5 390.8,360.8" fill="#8b8b8b" stroke="#8b8b8b"/>
<polygon points="390.8,360.8 402.8,354.5 395.8,351.5 383.8,357.8" fill="#6a6a6a" stroke="#6a6a6a"/>
<polygon points="491.8,527.8 475.8,519.3 477.1,503.9 493.3,512.3" fill="#adadb1" stroke="#adadb1"/>
<polygon points="491.8,527.8 503.3,518.6 504.9,503.2 493.3,512.3" fill="#c1c1c5" stroke="#c1c1c5"/>
<polygon points="493.3,512.3 504.9,503.2 488.8,495.0 477.1,503.9" fill="#bebec2" stroke="#bebec2"/>
<polygon points="382.7,358.0 374.2,354.3 374.2,349.1 382.8,352.8" fill="#747474" stroke="#747474"/>
<polygon points="382.7,358.0 389.4,354.5 389.5,349.3 382.8,352.8" fill="#808080" stroke="#808080"/>
<polygon points="382.8,352.8 389.5,349.3 381.0,345.7 374.2,349.1" fill="#6a6a6a" stroke="#6a6a6a"/>
<path class="dl d1" d="M378.5 350.9L385.3 347.5"/>
<polygon points="390.8,360.8 383.8,357.8 383.9,352.6 390.9,355.6" fill="#7b7b7b" stroke="#7b7b7b"/>
<polygon points="390.8,360.8 402.8,354.5 403.0,349.3 390.9,355.6" fill="#8b8b8b" stroke="#8b8b8b"/>
<polygon points="390.9,355.6 403.0,349.3 395.9,346.3 383.9,352.6" fill="#6a6a6a" stroke="#6a6a6a"/>
<polygon points="424.8,385.0 394.0,371.5 394.3,359.4 425.4,372.7" fill="#7e7e7e" stroke="#7e7e7e"/>
<polygon points="424.8,385.0 430.6,381.7 431.2,369.4 425.4,372.7" fill="#8c8c8c" stroke="#8c8c8c"/>
<polygon points="425.4,372.7 431.2,369.4 400.2,356.3 394.3,359.4" fill="#777" stroke="#777"/>
<polygon points="406.0,361.5 393.3,356.1 393.5,350.9 406.2,356.3" fill="#747474" stroke="#747474"/>
<polygon points="406.0,361.5 417.6,355.3 417.8,350.1 406.2,356.3" fill="#808080" stroke="#808080"/>
<polygon points="406.2,356.3 417.8,350.1 405.1,344.8 393.5,350.9" fill="#6a6a6a" stroke="#6a6a6a"/>
<polygon points="438.0,368.6 412.6,357.9 412.8,352.7 438.2,363.3" fill="#747474" stroke="#747474"/>
<polygon points="438.0,368.6 442.8,365.8 443.1,360.5 438.2,363.3" fill="#808080" stroke="#808080"/>
<polygon points="438.2,363.3 443.1,360.5 417.8,350.1 412.8,352.7" fill="#6a6a6a" stroke="#6a6a6a"/>
<path class="dl d1" d="M440.7 361.9L415.3 351.4"/>
<polygon points="399.3,365.2 390.5,361.4 390.6,356.1 399.4,359.9" fill="#747474" stroke="#747474"/>
<polygon points="399.3,365.2 406.0,361.5 406.2,356.3 399.4,359.9" fill="#808080" stroke="#808080"/>
<polygon points="399.4,359.9 406.2,356.3 397.4,352.6 390.6,356.1" fill="#6a6a6a" stroke="#6a6a6a"/>
<path class="dl d1" d="M395.0 358.0L401.8 354.4"/>
<polygon points="304.5,531.3 290.9,522.8 290.2,507.3 304.0,515.8" fill="#adadb1" stroke="#adadb1"/>
<polygon points="304.5,531.3 318.7,522.0 318.4,506.6 304.0,515.8" fill="#c1c1c5" stroke="#c1c1c5"/>
<polygon points="304.0,515.8 318.4,506.6 304.6,498.3 290.2,507.3" fill="#bebec2" stroke="#bebec2"/>
<polygon points="358.2,370.8 349.7,366.9 349.7,361.6 358.2,365.5" fill="#747474" stroke="#747474"/>
<polygon points="358.2,370.8 382.7,358.0 382.8,352.8 358.2,365.5" fill="#808080" stroke="#808080"/>
<polygon points="358.2,365.5 382.8,352.8 374.2,349.1 349.7,361.6" fill="#6a6a6a" stroke="#6a6a6a"/>
<path class="dl d1" d="M353.9 363.6L378.5 350.9"/>
<polygon points="365.5,386.5 358.6,383.3 358.7,371.0 365.6,374.2" fill="#7e7e7e" stroke="#7e7e7e"/>
<polygon points="365.5,386.5 389.7,373.3 390.0,361.2 365.6,374.2" fill="#8c8c8c" stroke="#8c8c8c"/>
<polygon points="365.6,374.2 390.0,361.2 383.2,358.2 358.7,371.0" fill="#777" stroke="#777"/>
<polygon points="366.1,374.4 358.2,370.8 358.2,365.5 366.1,369.0" fill="#747474" stroke="#747474"/>
<polygon points="366.1,374.4 390.5,361.4 390.6,356.1 366.1,369.0" fill="#808080" stroke="#808080"/>
<polygon points="366.1,369.0 390.6,356.1 382.8,352.8 358.2,365.5" fill="#6a6a6a" stroke="#6a6a6a"/>
<polygon points="464.4,379.7 438.0,368.6 438.2,363.3 464.8,374.3" fill="#747474" stroke="#747474"/>
<polygon points="464.4,379.7 469.3,376.8 469.6,371.4 464.8,374.3" fill="#808080" stroke="#808080"/>
<polygon points="464.8,374.3 469.6,371.4 443.1,360.5 438.2,363.3" fill="#6a6a6a" stroke="#6a6a6a"/>
<path class="dl d1" d="M467.2 372.9L440.7 361.9"/>
<polygon points="390.9,355.6 383.9,352.6 385.4,247.1 393.3,249.7" fill="#7b7b7b" stroke="#7b7b7b"/>
<polygon points="390.9,355.6 403.0,349.3 406.7,244.2 393.3,249.7" fill="#8b8b8b" stroke="#8b8b8b"/>
<polygon points="393.3,249.7 406.7,244.2 398.8,241.6 385.4,247.1" fill="#6a6a6a" stroke="#6a6a6a"/>
<polygon points="457.4,399.3 424.8,385.0 425.4,372.7 458.2,386.7" fill="#7e7e7e" stroke="#7e7e7e"/>
<polygon points="457.4,399.3 463.1,395.8 464.0,383.3 458.2,386.7" fill="#8c8c8c" stroke="#8c8c8c"/>
<polygon points="458.2,386.7 464.0,383.3 431.2,369.4 425.4,372.7" fill="#777" stroke="#777"/>
<polygon points="489.5,509.5 482.1,505.7 489.4,416.6 497.7,420.3" fill="#7b7b7b" stroke="#7b7b7b"/>
<polygon points="489.5,509.5 499.9,501.4 509.1,412.6 497.7,420.3" fill="#8b8b8b" stroke="#8b8b8b"/>
<polygon points="497.7,420.3 509.1,412.6 500.8,409.0 489.4,416.6" fill="#6a6a6a" stroke="#6a6a6a"/>
<polygon points="332.4,384.3 323.8,380.2 323.7,374.8 332.3,378.9" fill="#747474" stroke="#747474"/>
<polygon points="332.4,384.3 358.2,370.8 358.2,365.5 332.3,378.9" fill="#808080" stroke="#808080"/>
<polygon points="332.3,378.9 358.2,365.5 349.7,361.6 323.7,374.8" fill="#6a6a6a" stroke="#6a6a6a"/>
<path class="dl d1" d="M328.0 376.8L353.9 363.6"/>
<polygon points="339.9,400.4 333.0,397.1 332.9,384.5 339.8,387.8" fill="#7e7e7e" stroke="#7e7e7e"/>
<polygon points="339.9,400.4 365.5,386.5 365.6,374.2 339.8,387.8" fill="#8c8c8c" stroke="#8c8c8c"/>
<polygon points="339.8,387.8 365.6,374.2 358.7,371.0 332.9,384.5" fill="#777" stroke="#777"/>
<polygon points="492.1,391.4 464.4,379.7 464.8,374.3 492.6,385.9" fill="#747474" stroke="#747474"/>
<polygon points="492.1,391.4 496.9,388.3 497.4,382.9 492.6,385.9" fill="#808080" stroke="#808080"/>
<polygon points="492.6,385.9 497.4,382.9 469.6,371.4 464.8,374.3" fill="#6a6a6a" stroke="#6a6a6a"/>
<path class="dl d1" d="M495.0 384.4L467.2 372.9"/>
<polygon points="340.3,388.1 332.4,384.3 332.3,378.9 340.2,382.6" fill="#747474" stroke="#747474"/>
<polygon points="340.3,388.1 366.1,374.4 366.1,369.0 340.2,382.6" fill="#808080" stroke="#808080"/>
<polygon points="340.2,382.6 366.1,369.0 358.2,365.5 332.3,378.9" fill="#6a6a6a" stroke="#6a6a6a"/>
<polygon points="301.0,513.0 294.7,509.1 290.7,419.7 297.7,423.4" fill="#7b7b7b" stroke="#7b7b7b"/>
<polygon points="301.0,513.0 313.9,504.8 312.0,415.6 297.7,423.4" fill="#8b8b8b" stroke="#8b8b8b"/>
<polygon points="297.7,423.4 312.0,415.6 305.1,412.0 290.7,419.7" fill="#6a6a6a" stroke="#6a6a6a"/>
<polygon points="393.3,249.7 385.4,247.1 385.6,233.1 393.6,235.6" fill="#7b7b7b" stroke="#7b7b7b"/>
<polygon points="393.3,249.7 406.7,244.2 407.2,230.3 393.6,235.6" fill="#8b8b8b" stroke="#8b8b8b"/>
<polygon points="393.6,235.6 407.2,230.3 399.2,227.8 385.6,233.1" fill="#6a6a6a" stroke="#6a6a6a"/>
<polygon points="385.0,233.2 375.8,230.2 375.9,224.2 385.1,227.1" fill="#747474" stroke="#747474"/>
<polygon points="385.0,233.2 392.2,230.4 392.4,224.3 385.1,227.1" fill="#808080" stroke="#808080"/>
<polygon points="385.1,227.1 392.4,224.3 383.2,221.5 375.9,224.2" fill="#6a6a6a" stroke="#6a6a6a"/>
<path class="dl d2" d="M380.5 225.7L387.8 222.9"/>
<polygon points="491.8,414.5 457.4,399.3 458.2,386.7 492.9,401.6" fill="#7e7e7e" stroke="#7e7e7e"/>
<polygon points="491.8,414.5 497.5,410.7 498.6,398.0 492.9,401.6" fill="#8c8c8c" stroke="#8c8c8c"/>
<polygon points="492.9,401.6 498.6,398.0 464.0,383.3 458.2,386.7" fill="#777" stroke="#777"/>
<polygon points="393.6,235.6 385.6,233.1 385.7,227.0 393.7,229.6" fill="#7b7b7b" stroke="#7b7b7b"/>
<polygon points="393.6,235.6 407.2,230.3 407.4,224.2 393.7,229.6" fill="#8b8b8b" stroke="#8b8b8b"/>
<polygon points="393.7,229.6 407.4,224.2 399.4,221.8 385.7,227.0" fill="#6a6a6a" stroke="#6a6a6a"/>
<polygon points="305.1,398.6 296.6,394.3 296.4,388.8 305.0,393.0" fill="#747474" stroke="#747474"/>
<polygon points="305.1,398.6 332.4,384.3 332.3,378.9 305.0,393.0" fill="#808080" stroke="#808080"/>
<polygon points="305.0,393.0 332.3,378.9 323.7,374.8 296.4,388.8" fill="#6a6a6a" stroke="#6a6a6a"/>
<path class="dl d1" d="M300.7 390.9L328.0 376.8"/>
<polygon points="312.9,415.1 306.0,411.6 305.6,398.8 312.5,402.3" fill="#7e7e7e" stroke="#7e7e7e"/>
<polygon points="312.9,415.1 339.9,400.4 339.8,387.8 312.5,402.3" fill="#8c8c8c" stroke="#8c8c8c"/>
<polygon points="312.5,402.3 339.8,387.8 332.9,384.5 305.6,398.8" fill="#777" stroke="#777"/>
<polygon points="497.7,420.3 489.4,416.6 490.4,403.8 498.8,407.4" fill="#7b7b7b" stroke="#7b7b7b"/>
<polygon points="497.7,420.3 509.1,412.6 510.4,399.8 498.8,407.4" fill="#8b8b8b" stroke="#8b8b8b"/>
<polygon points="498.8,407.4 510.4,399.8 502.0,396.3 490.4,403.8" fill="#6a6a6a" stroke="#6a6a6a"/>
<polygon points="430.5,259.3 397.2,248.3 397.5,234.3 431.1,244.9" fill="#7e7e7e" stroke="#7e7e7e"/>
<polygon points="430.5,259.3 436.7,256.5 437.3,242.3 431.1,244.9" fill="#8c8c8c" stroke="#8c8c8c"/>
<polygon points="431.1,244.9 437.3,242.3 403.8,231.8 397.5,234.3" fill="#777" stroke="#777"/>
<polygon points="410.1,236.0 396.4,231.7 396.6,225.6 410.3,229.9" fill="#747474" stroke="#747474"/>
<polygon points="410.1,236.0 422.5,231.0 422.7,225.0 410.3,229.9" fill="#808080" stroke="#808080"/>
<polygon points="410.3,229.9 422.7,225.0 409.0,220.8 396.6,225.6" fill="#6a6a6a" stroke="#6a6a6a"/>
<polygon points="444.6,241.6 417.2,233.1 417.4,227.1 444.9,235.4" fill="#747474" stroke="#747474"/>
<polygon points="444.6,241.6 449.8,239.4 450.2,233.3 444.9,235.4" fill="#808080" stroke="#808080"/>
<polygon points="444.9,235.4 450.2,233.3 422.7,225.0 417.4,227.1" fill="#6a6a6a" stroke="#6a6a6a"/>
<path class="dl d2" d="M447.6 234.4L420.1 226.0"/>
<polygon points="402.9,238.9 393.4,235.9 393.6,229.8 403.1,232.8" fill="#747474" stroke="#747474"/>
<polygon points="402.9,238.9 410.1,236.0 410.3,229.9 403.1,232.8" fill="#808080" stroke="#808080"/>
<polygon points="403.1,232.8 410.3,229.9 400.8,226.9 393.6,229.8" fill="#6a6a6a" stroke="#6a6a6a"/>
<path class="dl d2" d="M398.3 231.3L405.5 228.4"/>
<polygon points="313.0,402.6 305.1,398.6 305.0,393.0 312.9,397.0" fill="#747474" stroke="#747474"/>
<polygon points="313.0,402.6 340.3,388.1 340.2,382.6 312.9,397.0" fill="#808080" stroke="#808080"/>
<polygon points="312.9,397.0 340.2,382.6 332.3,378.9 305.0,393.0" fill="#6a6a6a" stroke="#6a6a6a"/>
<polygon points="358.6,243.4 349.4,240.3 349.4,234.2 358.7,237.2" fill="#747474" stroke="#747474"/>
<polygon points="358.6,243.4 385.0,233.2 385.1,227.1 358.7,237.2" fill="#808080" stroke="#808080"/>
<polygon points="358.7,237.2 385.1,227.1 375.9,224.2 349.4,234.2" fill="#6a6a6a" stroke="#6a6a6a"/>
<path class="dl d2" d="M354.0 235.7L380.5 225.7"/>
<polygon points="366.5,260.5 359.1,257.9 359.2,243.6 366.6,246.1" fill="#7e7e7e" stroke="#7e7e7e"/>
<polygon points="366.5,260.5 392.6,249.8 392.9,235.7 366.6,246.1" fill="#8c8c8c" stroke="#8c8c8c"/>
<polygon points="366.6,246.1 392.9,235.7 385.5,233.3 359.2,243.6" fill="#777" stroke="#777"/>
<polygon points="393.7,229.6 385.7,227.0 387.4,104.1 396.5,106.0" fill="#7b7b7b" stroke="#7b7b7b"/>
<polygon points="393.7,229.6 407.4,224.2 411.7,102.1 396.5,106.0" fill="#8b8b8b" stroke="#8b8b8b"/>
<polygon points="396.5,106.0 411.7,102.1 402.7,100.3 387.4,104.1" fill="#6a6a6a" stroke="#6a6a6a"/>
<polygon points="367.1,246.3 358.6,243.4 358.7,237.2 367.2,240.0" fill="#747474" stroke="#747474"/>
<polygon points="367.1,246.3 393.4,235.9 393.6,229.8 367.2,240.0" fill="#808080" stroke="#808080"/>
<polygon points="367.2,240.0 393.6,229.8 385.1,227.1 358.7,237.2" fill="#6a6a6a" stroke="#6a6a6a"/>
<polygon points="297.1,402.8 288.5,398.4 288.3,392.9 296.9,397.2" fill="#747474" stroke="#747474"/>
<polygon points="297.1,402.8 305.1,398.6 305.0,393.0 296.9,397.2" fill="#808080" stroke="#808080"/>
<polygon points="296.9,397.2 305.0,393.0 296.4,388.8 288.3,392.9" fill="#6a6a6a" stroke="#6a6a6a"/>
<path class="dl d1" d="M292.6 395.0L300.7 390.9"/>
<polygon points="199.4,600.2 185.9,589.8 183.9,573.5 197.6,583.8" fill="#adadb1" stroke="#adadb1"/>
<polygon points="199.4,600.2 216.7,588.8 215.2,572.6 197.6,583.8" fill="#c1c1c5" stroke="#c1c1c5"/>
<polygon points="197.6,583.8 215.2,572.6 201.5,562.6 183.9,573.5" fill="#bebec2" stroke="#bebec2"/>
<polygon points="410.7,455.5 315.8,407.4 315.8,407.3 410.7,455.4" fill="#a1a1a5" fill-opacity="0.72"/>
<polygon points="410.7,455.5 486.9,406.1 487.0,406.0 410.7,455.4" fill="#a1a1a5" fill-opacity="0.72"/>
<polygon points="410.7,455.4 487.0,406.0 393.6,365.5 315.8,407.3" fill="#a1a1a5" fill-opacity="0.72"/>
<polygon points="424.7,376.1 399.3,365.2 399.4,359.9 424.9,370.8" fill="#747474" stroke="#747474"/>
<polygon points="424.7,376.1 438.0,368.6 438.2,363.3 424.9,370.8" fill="#808080" stroke="#808080"/>
<polygon points="424.9,370.8 438.2,363.3 412.8,352.7 399.4,359.9" fill="#6a6a6a" stroke="#6a6a6a"/>
<polygon points="374.9,378.4 366.1,374.4 366.1,369.0 374.9,373.0" fill="#747474" stroke="#747474"/>
<polygon points="374.9,378.4 399.3,365.2 399.4,359.9 374.9,373.0" fill="#808080" stroke="#808080"/>
<polygon points="374.9,373.0 399.4,359.9 390.6,356.1 366.1,369.0" fill="#6a6a6a" stroke="#6a6a6a"/>
<path class="dl d1" d="M370.5 371.0L395.0 358.0"/>
<polygon points="419.6,379.0 394.1,367.9 394.3,362.6 419.8,373.6" fill="#747474" stroke="#747474"/>
<polygon points="419.6,379.0 424.7,376.1 424.9,370.8 419.8,373.6" fill="#808080" stroke="#808080"/>
<polygon points="419.8,373.6 424.9,370.8 399.4,359.9 394.3,362.6" fill="#6a6a6a" stroke="#6a6a6a"/>
<path class="dl d1" d="M422.4 372.2L396.8 361.2"/>
<polygon points="451.2,387.6 424.7,376.1 424.9,370.8 451.6,382.2" fill="#747474" stroke="#747474"/>
<polygon points="451.2,387.6 464.4,379.7 464.8,374.3 451.6,382.2" fill="#808080" stroke="#808080"/>
<polygon points="451.6,382.2 464.8,374.3 438.2,363.3 424.9,370.8" fill="#6a6a6a" stroke="#6a6a6a"/>
<polygon points="446.2,390.6 419.6,379.0 419.8,373.6 446.5,385.2" fill="#747474" stroke="#747474"/>
<polygon points="446.2,390.6 451.2,387.6 451.6,382.2 446.5,385.2" fill="#808080" stroke="#808080"/>
<polygon points="446.5,385.2 451.6,382.2 424.9,370.8 419.8,373.6" fill="#6a6a6a" stroke="#6a6a6a"/>
<path class="dl d1" d="M449.0 383.7L422.4 372.2"/>
<polygon points="349.1,392.3 340.3,388.1 340.2,382.6 349.1,386.8" fill="#747474" stroke="#747474"/>
<polygon points="349.1,392.3 374.9,378.4 374.9,373.0 349.1,386.8" fill="#808080" stroke="#808080"/>
<polygon points="349.1,386.8 374.9,373.0 366.1,369.0 340.2,382.6" fill="#6a6a6a" stroke="#6a6a6a"/>
<path class="dl d1" d="M344.7 384.7L370.5 371.0"/>
<polygon points="479.1,399.6 451.2,387.6 451.6,382.2 479.5,394.1" fill="#747474" stroke="#747474"/>
<polygon points="479.1,399.6 492.1,391.4 492.6,385.9 479.5,394.1" fill="#808080" stroke="#808080"/>
<polygon points="479.5,394.1 492.6,385.9 464.8,374.3 451.6,382.2" fill="#6a6a6a" stroke="#6a6a6a"/>
<polygon points="500.5,401.8 485.6,395.5 486.1,389.9 501.0,396.2" fill="#747474" stroke="#747474"/>
<polygon points="500.5,401.8 511.6,394.5 512.2,389.0 501.0,396.2" fill="#808080" stroke="#808080"/>
<polygon points="501.0,396.2 512.2,389.0 497.4,382.9 486.1,389.9" fill="#6a6a6a" stroke="#6a6a6a"/>
<polygon points="474.1,402.8 446.2,390.6 446.5,385.2 474.5,397.2" fill="#747474" stroke="#747474"/>
<polygon points="474.1,402.8 479.1,399.6 479.5,394.1 474.5,397.2" fill="#808080" stroke="#808080"/>
<polygon points="474.5,397.2 479.5,394.1 451.6,382.2 446.5,385.2" fill="#6a6a6a" stroke="#6a6a6a"/>
<path class="dl d1" d="M477.0 395.7L449.0 383.7"/>
<polygon points="489.2,404.0 479.1,399.6 479.5,394.1 489.7,398.4" fill="#747474" stroke="#747474"/>
<polygon points="489.2,404.0 495.8,399.8 496.3,394.2 489.7,398.4" fill="#808080" stroke="#808080"/>
<polygon points="489.7,398.4 496.3,394.2 486.1,389.9 479.5,394.1" fill="#6a6a6a" stroke="#6a6a6a"/>
<path class="dl d1" d="M484.6 396.3L491.2 392.1"/>
<polygon points="498.8,407.4 490.4,403.8 490.9,398.2 499.4,401.8" fill="#7b7b7b" stroke="#7b7b7b"/>
<polygon points="498.8,407.4 510.4,399.8 511.0,394.2 499.4,401.8" fill="#8b8b8b" stroke="#8b8b8b"/>
<polygon points="499.4,401.8 511.0,394.2 502.6,390.7 490.9,398.2" fill="#6a6a6a" stroke="#6a6a6a"/>
<polygon points="321.9,407.0 313.0,402.6 312.9,397.0 321.8,401.4" fill="#747474" stroke="#747474"/>
<polygon points="321.9,407.0 349.1,392.3 349.1,386.8 321.8,401.4" fill="#808080" stroke="#808080"/>
<polygon points="321.8,401.4 349.1,386.8 340.2,382.6 312.9,397.0" fill="#6a6a6a" stroke="#6a6a6a"/>
<path class="dl d1" d="M317.3 399.2L344.7 384.7"/>
<polygon points="509.2,412.6 498.6,408.1 499.2,402.5 509.7,407.0" fill="#747474" stroke="#747474"/>
<polygon points="509.2,412.6 515.7,408.3 516.2,402.6 509.7,407.0" fill="#808080" stroke="#808080"/>
<polygon points="509.7,407.0 516.2,402.6 505.7,398.2 499.2,402.5" fill="#6a6a6a" stroke="#6a6a6a"/>
<path class="dl d1" d="M504.4 404.7L510.9 400.4"/>
<polygon points="297.7,423.4 290.7,419.7 290.2,406.8 297.2,410.5" fill="#7b7b7b" stroke="#7b7b7b"/>
<polygon points="297.7,423.4 312.0,415.6 311.8,402.8 297.2,410.5" fill="#8b8b8b" stroke="#8b8b8b"/>
<polygon points="297.2,410.5 311.8,402.8 304.7,399.2 290.2,406.8" fill="#6a6a6a" stroke="#6a6a6a"/>
<polygon points="473.4,250.6 444.6,241.6 444.9,235.4 473.8,244.3" fill="#747474" stroke="#747474"/>
<polygon points="473.4,250.6 478.5,248.2 479.0,242.0 473.8,244.3" fill="#808080" stroke="#808080"/>
<polygon points="473.8,244.3 479.0,242.0 450.2,233.3 444.9,235.4" fill="#6a6a6a" stroke="#6a6a6a"/>
<path class="dl d2" d="M476.4 243.1L447.6 234.4"/>
<polygon points="288.9,407.1 280.3,402.6 280.0,397.1 288.6,401.5" fill="#747474" stroke="#747474"/>
<polygon points="288.9,407.1 297.1,402.8 296.9,397.2 288.6,401.5" fill="#808080" stroke="#808080"/>
<polygon points="288.6,401.5 296.9,397.2 288.3,392.9 280.0,397.1" fill="#6a6a6a" stroke="#6a6a6a"/>
<path class="dl d1" d="M284.3 399.3L292.6 395.0"/>
<polygon points="406.9,595.9 390.5,585.6 390.9,569.4 407.5,579.6" fill="#adadb1" stroke="#adadb1"/>
<polygon points="406.9,595.9 420.9,584.7 421.7,568.5 407.5,579.6" fill="#c1c1c5" stroke="#c1c1c5"/>
<polygon points="407.5,579.6 421.7,568.5 405.1,558.5 390.9,569.4" fill="#bebec2" stroke="#bebec2"/>
<polygon points="465.5,419.4 455.2,414.8 455.6,409.1 465.9,413.7" fill="#747474" stroke="#747474"/>
<polygon points="465.5,419.4 489.2,404.0 489.7,398.4 465.9,413.7" fill="#808080" stroke="#808080"/>
<polygon points="465.9,413.7 489.7,398.4 479.5,394.1 455.6,409.1" fill="#6a6a6a" stroke="#6a6a6a"/>
<path class="dl d1" d="M460.7 411.4L484.6 396.3"/>
<polygon points="297.2,410.5 290.2,406.8 289.9,401.2 297.0,404.9" fill="#7b7b7b" stroke="#7b7b7b"/>
<polygon points="297.2,410.5 311.8,402.8 311.7,397.2 297.0,404.9" fill="#8b8b8b" stroke="#8b8b8b"/>
<polygon points="297.0,404.9 311.7,397.2 304.5,393.7 289.9,401.2" fill="#6a6a6a" stroke="#6a6a6a"/>
<polygon points="473.3,436.6 465.1,432.8 466.1,419.7 474.4,423.5" fill="#7e7e7e" stroke="#7e7e7e"/>
<polygon points="473.3,436.6 496.9,420.8 498.1,407.8 474.4,423.5" fill="#8c8c8c" stroke="#8c8c8c"/>
<polygon points="474.4,423.5 498.1,407.8 489.8,404.3 466.1,419.7" fill="#777" stroke="#777"/>
<polygon points="387.6,87.8 377.7,85.9 377.8,78.8 387.8,80.7" fill="#747474" stroke="#747474"/>
<polygon points="387.6,87.8 395.5,85.9 395.6,78.9 387.8,80.7" fill="#808080" stroke="#808080"/>
<polygon points="387.8,80.7 395.6,78.9 385.7,77.1 377.8,78.8" fill="#6a6a6a" stroke="#6a6a6a"/>
<path class="dl d3" d="M382.8 79.7L390.6 78.0"/>
<polygon points="396.5,106.0 387.4,104.1 387.7,87.8 396.8,89.5" fill="#7b7b7b" stroke="#7b7b7b"/>
<polygon points="396.5,106.0 411.7,102.1 412.3,85.8 396.8,89.5" fill="#8b8b8b" stroke="#8b8b8b"/>
<polygon points="396.8,89.5 412.3,85.8 403.2,84.2 387.7,87.8" fill="#6a6a6a" stroke="#6a6a6a"/>
<polygon points="465.8,270.9 430.5,259.3 431.1,244.9 466.8,256.2" fill="#7e7e7e" stroke="#7e7e7e"/>
<polygon points="465.8,270.9 471.9,268.0 472.9,253.4 466.8,256.2" fill="#8c8c8c" stroke="#8c8c8c"/>
<polygon points="466.8,256.2 472.9,253.4 437.3,242.3 431.1,244.9" fill="#777" stroke="#777"/>
<polygon points="396.8,89.5 387.7,87.8 387.8,80.7 397.0,82.3" fill="#7b7b7b" stroke="#7b7b7b"/>
<polygon points="396.8,89.5 412.3,85.8 412.5,78.8 397.0,82.3" fill="#8b8b8b" stroke="#8b8b8b"/>
<polygon points="397.0,82.3 412.5,78.8 403.3,77.2 387.8,80.7" fill="#6a6a6a" stroke="#6a6a6a"/>
<polygon points="475.0,423.7 465.5,419.4 465.9,413.7 475.4,418.0" fill="#747474" stroke="#747474"/>
<polygon points="475.0,423.7 498.6,408.1 499.2,402.5 475.4,418.0" fill="#808080" stroke="#808080"/>
<polygon points="475.4,418.0 499.2,402.5 489.7,398.4 465.9,413.7" fill="#6a6a6a" stroke="#6a6a6a"/>
<polygon points="330.8,254.3 321.5,251.0 321.4,244.7 330.7,247.9" fill="#747474" stroke="#747474"/>
<polygon points="330.8,254.3 358.6,243.4 358.7,237.2 330.7,247.9" fill="#808080" stroke="#808080"/>
<polygon points="330.7,247.9 358.7,237.2 349.4,234.2 321.4,244.7" fill="#6a6a6a" stroke="#6a6a6a"/>
<path class="dl d2" d="M326.0 246.3L354.0 235.7"/>
<polygon points="259.1,422.7 250.5,418.0 250.2,412.3 258.7,417.0" fill="#747474" stroke="#747474"/>
<polygon points="259.1,422.7 288.9,407.1 288.6,401.5 258.7,417.0" fill="#808080" stroke="#808080"/>
<polygon points="258.7,417.0 288.6,401.5 280.0,397.1 250.2,412.3" fill="#6a6a6a" stroke="#6a6a6a"/>
<path class="dl d1" d="M254.4 414.6L284.3 399.3"/>
<polygon points="485.6,428.5 475.0,423.7 475.4,418.0 486.1,422.8" fill="#747474" stroke="#747474"/>
<polygon points="485.6,428.5 509.2,412.6 509.7,407.0 486.1,422.8" fill="#808080" stroke="#808080"/>
<polygon points="486.1,422.8 509.7,407.0 499.2,402.5 475.4,418.0" fill="#6a6a6a" stroke="#6a6a6a"/>
<path class="dl d1" d="M480.7 420.4L504.4 404.7"/>
<polygon points="347.6,419.9 321.9,407.0 321.8,401.4 347.6,414.3" fill="#747474" stroke="#747474"/>
<polygon points="347.6,419.9 356.0,415.2 356.1,409.5 347.6,414.3" fill="#808080" stroke="#808080"/>
<polygon points="347.6,414.3 356.1,409.5 330.2,396.9 321.8,401.4" fill="#6a6a6a" stroke="#6a6a6a"/>
<path class="dl d1" d="M351.9 411.9L326.0 399.1"/>
<polygon points="333.1,438.1 301.8,421.7 301.4,408.7 332.9,424.9" fill="#7e7e7e" stroke="#7e7e7e"/>
<polygon points="333.1,438.1 340.1,434.1 340.0,420.9 332.9,424.9" fill="#8c8c8c" stroke="#8c8c8c"/>
<polygon points="332.9,424.9 340.0,420.9 308.5,405.0 301.4,408.7" fill="#777" stroke="#777"/>
<polygon points="313.8,411.4 305.0,406.8 304.8,401.2 313.7,405.7" fill="#747474" stroke="#747474"/>
<polygon points="313.8,411.4 321.9,407.0 321.8,401.4 313.7,405.7" fill="#808080" stroke="#808080"/>
<polygon points="313.7,405.7 321.8,401.4 312.9,397.0 304.8,401.2" fill="#6a6a6a" stroke="#6a6a6a"/>
<path class="dl d1" d="M309.2 403.5L317.3 399.2"/>
<polygon points="305.6,415.8 296.8,411.2 296.6,405.6 305.5,410.1" fill="#747474" stroke="#747474"/>
<polygon points="305.6,415.8 313.8,411.4 313.7,405.7 305.5,410.1" fill="#808080" stroke="#808080"/>
<polygon points="305.5,410.1 313.7,405.7 304.8,401.2 296.6,405.6" fill="#6a6a6a" stroke="#6a6a6a"/>
<path class="dl d1" d="M301.0 407.8L309.2 403.5"/>
<polygon points="267.2,440.0 260.4,436.1 259.6,422.9 266.5,426.7" fill="#7e7e7e" stroke="#7e7e7e"/>
<polygon points="267.2,440.0 296.7,423.9 296.3,410.9 266.5,426.7" fill="#8c8c8c" stroke="#8c8c8c"/>
<polygon points="266.5,426.7 296.3,410.9 289.4,407.3 259.6,422.9" fill="#777" stroke="#777"/>
<polygon points="338.9,271.8 331.5,269.1 331.3,254.4 338.8,257.1" fill="#7e7e7e" stroke="#7e7e7e"/>
<polygon points="338.9,271.8 366.5,260.5 366.6,246.1 338.8,257.1" fill="#8c8c8c" stroke="#8c8c8c"/>
<polygon points="338.8,257.1 366.6,246.1 359.2,243.6 331.3,254.4" fill="#777" stroke="#777"/>
<polygon points="499.4,401.8 490.9,398.2 500.2,285.2 509.7,288.3" fill="#7b7b7b" stroke="#7b7b7b"/>
<polygon points="499.4,401.8 511.0,394.2 522.6,281.7 509.7,288.3" fill="#8b8b8b" stroke="#8b8b8b"/>
<polygon points="509.7,288.3 522.6,281.7 513.1,278.6 500.2,285.2" fill="#6a6a6a" stroke="#6a6a6a"/>
<polygon points="503.5,259.9 473.4,250.6 473.8,244.3 504.1,253.5" fill="#747474" stroke="#747474"/>
<polygon points="503.5,259.9 508.6,257.5 509.2,251.1 504.1,253.5" fill="#808080" stroke="#808080"/>
<polygon points="504.1,253.5 509.2,251.1 479.0,242.0 473.8,244.3" fill="#6a6a6a" stroke="#6a6a6a"/>
<path class="dl d2" d="M506.6 252.3L476.4 243.1"/>
<polygon points="339.3,257.3 330.8,254.3 330.7,247.9 339.2,250.9" fill="#747474" stroke="#747474"/>
<polygon points="339.3,257.3 367.1,246.3 367.2,240.0 339.2,250.9" fill="#808080" stroke="#808080"/>
<polygon points="339.2,250.9 367.2,240.0 358.7,237.2 330.7,247.9" fill="#6a6a6a" stroke="#6a6a6a"/>
<polygon points="267.0,427.0 259.1,422.7 258.7,417.0 266.7,421.3" fill="#747474" stroke="#747474"/>
<polygon points="267.0,427.0 296.8,411.2 296.6,405.6 266.7,421.3" fill="#808080" stroke="#808080"/>
<polygon points="266.7,421.3 296.6,405.6 288.6,401.5 258.7,417.0" fill="#6a6a6a" stroke="#6a6a6a"/>
<polygon points="437.1,112.2 400.8,104.9 401.2,88.5 437.8,95.3" fill="#7e7e7e" stroke="#7e7e7e"/>
<polygon points="437.1,112.2 443.7,110.4 444.5,93.6 437.8,95.3" fill="#8c8c8c" stroke="#8c8c8c"/>
<polygon points="437.8,95.3 444.5,93.6 408.0,86.9 401.2,88.5" fill="#777" stroke="#777"/>
<polygon points="414.9,89.6 400.0,86.8 400.2,79.7 415.1,82.4" fill="#747474" stroke="#747474"/>
<polygon points="414.9,89.6 428.2,86.4 428.5,79.3 415.1,82.4" fill="#808080" stroke="#808080"/>
<polygon points="415.1,82.4 428.5,79.3 413.6,76.7 400.2,79.7" fill="#6a6a6a" stroke="#6a6a6a"/>
<polygon points="452.4,93.2 422.5,87.7 422.8,80.6 452.8,85.9" fill="#747474" stroke="#747474"/>
<polygon points="452.4,93.2 458.0,91.8 458.4,84.5 452.8,85.9" fill="#808080" stroke="#808080"/>
<polygon points="452.8,85.9 458.4,84.5 428.5,79.3 422.8,80.6" fill="#6a6a6a" stroke="#6a6a6a"/>
<path class="dl d3" d="M455.6 85.2L425.7 80.0"/>
<polygon points="407.1,91.4 396.8,89.5 397.0,82.3 407.3,84.2" fill="#747474" stroke="#747474"/>
<polygon points="407.1,91.4 414.9,89.6 415.1,82.4 407.3,84.2" fill="#808080" stroke="#808080"/>
<polygon points="407.3,84.2 415.1,82.4 404.8,80.5 397.0,82.3" fill="#6a6a6a" stroke="#6a6a6a"/>
<path class="dl d3" d="M402.1 83.3L410.0 81.5"/>
<polygon points="359.2,94.4 349.2,92.4 349.2,85.1 359.2,87.1" fill="#747474" stroke="#747474"/>
<polygon points="359.2,94.4 387.6,87.8 387.8,80.7 359.2,87.1" fill="#808080" stroke="#808080"/>
<polygon points="359.2,87.1 387.8,80.7 377.8,78.8 349.2,85.1" fill="#6a6a6a" stroke="#6a6a6a"/>
<path class="dl d3" d="M354.2 86.1L382.8 79.7"/>
<polygon points="367.7,113.0 359.7,111.3 359.7,94.5 367.8,96.1" fill="#7e7e7e" stroke="#7e7e7e"/>
<polygon points="367.7,113.0 395.9,105.9 396.2,89.4 367.8,96.1" fill="#8c8c8c" stroke="#8c8c8c"/>
<polygon points="367.8,96.1 396.2,89.4 388.2,87.9 359.7,94.5" fill="#777" stroke="#777"/>
<polygon points="503.4,283.3 465.8,270.9 466.8,256.2 504.7,268.2" fill="#7e7e7e" stroke="#7e7e7e"/>
<polygon points="503.4,283.3 509.4,280.2 510.7,265.3 504.7,268.2" fill="#8c8c8c" stroke="#8c8c8c"/>
<polygon points="504.7,268.2 510.7,265.3 472.9,253.4 466.8,256.2" fill="#777" stroke="#777"/>
<polygon points="368.4,96.2 359.2,94.4 359.2,87.1 368.5,88.8" fill="#747474" stroke="#747474"/>
<polygon points="368.4,96.2 396.8,89.5 397.0,82.3 368.5,88.8" fill="#808080" stroke="#808080"/>
<polygon points="368.5,88.8 397.0,82.3 387.8,80.7 359.2,87.1" fill="#6a6a6a" stroke="#6a6a6a"/>
<polygon points="440.3,435.7 429.9,430.8 430.2,425.0 440.6,430.0" fill="#747474" stroke="#747474"/>
<polygon points="440.3,435.7 465.5,419.4 465.9,413.7 440.6,430.0" fill="#808080" stroke="#808080"/>
<polygon points="440.6,430.0 465.9,413.7 455.6,409.1 430.2,425.0" fill="#6a6a6a" stroke="#6a6a6a"/>
<path class="dl d1" d="M435.4 427.5L460.7 411.4"/>
<polygon points="448.4,453.4 440.1,449.4 440.9,436.0 449.2,440.0" fill="#7e7e7e" stroke="#7e7e7e"/>
<polygon points="448.4,453.4 473.3,436.6 474.4,423.5 449.2,440.0" fill="#8c8c8c" stroke="#8c8c8c"/>
<polygon points="449.2,440.0 474.4,423.5 466.1,419.7 440.9,436.0" fill="#777" stroke="#777"/>
<polygon points="297.0,404.9 289.9,401.2 284.9,287.7 292.8,290.9" fill="#7b7b7b" stroke="#7b7b7b"/>
<polygon points="297.0,404.9 311.7,397.2 309.3,284.2 292.8,290.9" fill="#8b8b8b" stroke="#8b8b8b"/>
<polygon points="292.8,290.9 309.3,284.2 301.4,281.0 284.9,287.7" fill="#6a6a6a" stroke="#6a6a6a"/>
<polygon points="374.7,433.5 347.6,419.9 347.6,414.3 374.7,427.8" fill="#747474" stroke="#747474"/>
<polygon points="374.7,433.5 383.0,428.5 383.1,422.8 374.7,427.8" fill="#808080" stroke="#808080"/>
<polygon points="374.7,427.8 383.1,422.8 356.1,409.5 347.6,414.3" fill="#6a6a6a" stroke="#6a6a6a"/>
<path class="dl d1" d="M379.0 425.3L351.9 411.9"/>
<polygon points="227.5,439.2 219.0,434.2 218.5,428.4 227.0,433.4" fill="#747474" stroke="#747474"/>
<polygon points="227.5,439.2 259.1,422.7 258.7,417.0 227.0,433.4" fill="#808080" stroke="#808080"/>
<polygon points="227.0,433.4 258.7,417.0 250.2,412.3 218.5,428.4" fill="#6a6a6a" stroke="#6a6a6a"/>
<path class="dl d1" d="M222.7 430.9L254.4 414.6"/>
<polygon points="194.8,580.4 188.5,575.7 177.0,480.8 183.9,485.3" fill="#7b7b7b" stroke="#7b7b7b"/>
<polygon points="194.8,580.4 210.5,570.4 201.6,475.7 183.9,485.3" fill="#8b8b8b" stroke="#8b8b8b"/>
<polygon points="183.9,485.3 201.6,475.7 194.7,471.3 177.0,480.8" fill="#6a6a6a" stroke="#6a6a6a"/>
<polygon points="449.8,440.3 440.3,435.7 440.6,430.0 450.2,434.5" fill="#747474" stroke="#747474"/>
<polygon points="449.8,440.3 475.0,423.7 475.4,418.0 450.2,434.5" fill="#808080" stroke="#808080"/>
<polygon points="450.2,434.5 475.4,418.0 465.9,413.7 440.6,430.0" fill="#6a6a6a" stroke="#6a6a6a"/>
<polygon points="235.9,457.0 229.1,452.9 228.0,439.5 234.9,443.5" fill="#7e7e7e" stroke="#7e7e7e"/>
<polygon points="235.9,457.0 267.2,440.0 266.5,426.7 234.9,443.5" fill="#8c8c8c" stroke="#8c8c8c"/>
<polygon points="234.9,443.5 266.5,426.7 259.6,422.9 228.0,439.5" fill="#777" stroke="#777"/>
<polygon points="483.8,99.0 452.4,93.2 452.8,85.9 484.4,91.5" fill="#747474" stroke="#747474"/>
<polygon points="483.8,99.0 489.4,97.5 489.9,90.1 484.4,91.5" fill="#808080" stroke="#808080"/>
<polygon points="484.4,91.5 489.9,90.1 458.4,84.5 452.8,85.9" fill="#6a6a6a" stroke="#6a6a6a"/>
<path class="dl d3" d="M487.1 90.8L455.6 85.2"/>
<polygon points="301.2,265.8 292.0,262.3 291.7,255.8 301.0,259.3" fill="#747474" stroke="#747474"/>
<polygon points="301.2,265.8 330.8,254.3 330.7,247.9 301.0,259.3" fill="#808080" stroke="#808080"/>
<polygon points="301.0,259.3 330.7,247.9 321.4,244.7 291.7,255.8" fill="#6a6a6a" stroke="#6a6a6a"/>
<path class="dl d2" d="M296.4 257.5L326.0 246.3"/>
<polygon points="366.3,455.6 333.1,438.1 332.9,424.9 366.4,442.2" fill="#7e7e7e" stroke="#7e7e7e"/>
<polygon points="366.3,455.6 373.3,451.3 373.5,437.9 366.4,442.2" fill="#8c8c8c" stroke="#8c8c8c"/>
<polygon points="366.4,442.2 373.5,437.9 340.0,420.9 332.9,424.9" fill="#777" stroke="#777"/>
<polygon points="331.4,429.2 305.6,415.8 305.5,410.1 331.3,423.4" fill="#747474" stroke="#747474"/>
<polygon points="331.4,429.2 347.6,419.9 347.6,414.3 331.3,423.4" fill="#808080" stroke="#808080"/>
<polygon points="331.3,423.4 347.6,414.3 321.8,401.4 305.5,410.1" fill="#6a6a6a" stroke="#6a6a6a"/>
<polygon points="403.7,576.2 396.1,571.5 398.5,476.9 407.0,481.4" fill="#7b7b7b" stroke="#7b7b7b"/>
<polygon points="403.7,576.2 416.4,566.3 421.1,471.9 407.0,481.4" fill="#8b8b8b" stroke="#8b8b8b"/>
<polygon points="407.0,481.4 421.1,471.9 412.6,467.5 398.5,476.9" fill="#6a6a6a" stroke="#6a6a6a"/>
<polygon points="309.6,283.8 302.2,280.9 301.7,266.0 309.2,268.8" fill="#7e7e7e" stroke="#7e7e7e"/>
<polygon points="309.6,283.8 338.9,271.8 338.8,257.1 309.2,268.8" fill="#8c8c8c" stroke="#8c8c8c"/>
<polygon points="309.2,268.8 338.8,257.1 331.3,254.4 301.7,266.0" fill="#777" stroke="#777"/>
<polygon points="460.6,445.4 449.8,440.3 450.2,434.5 461.0,439.6" fill="#747474" stroke="#747474"/>
<polygon points="460.6,445.4 485.6,428.5 486.1,422.8 461.0,439.6" fill="#808080" stroke="#808080"/>
<polygon points="461.0,439.6 486.1,422.8 475.4,418.0 450.2,434.5" fill="#6a6a6a" stroke="#6a6a6a"/>
<path class="dl d1" d="M455.6 437.0L480.7 420.4"/>
<polygon points="235.4,443.8 227.5,439.2 227.0,433.4 235.0,438.0" fill="#747474" stroke="#747474"/>
<polygon points="235.4,443.8 267.0,427.0 266.7,421.3 235.0,438.0" fill="#808080" stroke="#808080"/>
<polygon points="235.0,438.0 266.7,421.3 258.7,417.0 227.0,433.4" fill="#6a6a6a" stroke="#6a6a6a"/>
<polygon points="509.7,288.3 500.2,285.2 501.4,270.1 511.1,273.2" fill="#7b7b7b" stroke="#7b7b7b"/>
<polygon points="509.7,288.3 522.6,281.7 524.2,266.6 511.1,273.2" fill="#8b8b8b" stroke="#8b8b8b"/>
<polygon points="511.1,273.2 524.2,266.6 514.5,263.6 501.4,270.1" fill="#6a6a6a" stroke="#6a6a6a"/>
<polygon points="358.5,443.2 331.4,429.2 331.3,423.4 358.5,437.4" fill="#747474" stroke="#747474"/>
<polygon points="358.5,443.2 374.7,433.5 374.7,427.8 358.5,437.4" fill="#808080" stroke="#808080"/>
<polygon points="358.5,437.4 374.7,427.8 347.6,414.3 331.3,423.4" fill="#6a6a6a" stroke="#6a6a6a"/>
<polygon points="309.7,269.0 301.2,265.8 301.0,259.3 309.6,262.4" fill="#747474" stroke="#747474"/>
<polygon points="309.7,269.0 339.3,257.3 339.2,250.9 309.6,262.4" fill="#808080" stroke="#808080"/>
<polygon points="309.6,262.4 339.2,250.9 330.7,247.9 301.0,259.3" fill="#6a6a6a" stroke="#6a6a6a"/>
<polygon points="475.7,120.0 437.1,112.2 437.8,95.3 476.9,102.7" fill="#7e7e7e" stroke="#7e7e7e"/>
<polygon points="475.7,120.0 482.3,118.1 483.5,100.8 476.9,102.7" fill="#8c8c8c" stroke="#8c8c8c"/>
<polygon points="476.9,102.7 483.5,100.8 444.5,93.6 437.8,95.3" fill="#777" stroke="#777"/>
<polygon points="328.9,101.4 318.9,99.3 318.7,91.8 328.8,93.9" fill="#747474" stroke="#747474"/>
<polygon points="328.9,101.4 359.2,94.4 359.2,87.1 328.8,93.9" fill="#808080" stroke="#808080"/>
<polygon points="328.8,93.9 359.2,87.1 349.2,85.1 318.7,91.8" fill="#6a6a6a" stroke="#6a6a6a"/>
<path class="dl d3" d="M323.7 92.8L354.2 86.1"/>
<polygon points="403.1,447.8 374.7,433.5 374.7,427.8 403.3,442.0" fill="#747474" stroke="#747474"/>
<polygon points="403.1,447.8 411.4,442.6 411.6,436.7 403.3,442.0" fill="#808080" stroke="#808080"/>
<polygon points="403.3,442.0 411.6,436.7 383.1,422.8 374.7,427.8" fill="#6a6a6a" stroke="#6a6a6a"/>
<path class="dl d1" d="M407.5 439.3L379.0 425.3"/>
<polygon points="292.4,269.2 283.2,265.6 282.9,259.1 292.2,262.6" fill="#747474" stroke="#747474"/>
<polygon points="292.4,269.2 301.2,265.8 301.0,259.3 292.2,262.6" fill="#808080" stroke="#808080"/>
<polygon points="292.2,262.6 301.0,259.3 291.7,255.8 282.9,259.1" fill="#6a6a6a" stroke="#6a6a6a"/>
<path class="dl d2" d="M287.5 260.9L296.4 257.5"/>
<polygon points="194.0,456.7 185.5,451.4 184.8,445.5 193.4,450.8" fill="#747474" stroke="#747474"/>
<polygon points="194.0,456.7 227.5,439.2 227.0,433.4 193.4,450.8" fill="#808080" stroke="#808080"/>
<polygon points="193.4,450.8 227.0,433.4 218.5,428.4 184.8,445.5" fill="#6a6a6a" stroke="#6a6a6a"/>
<path class="dl d1" d="M189.1 448.2L222.7 430.9"/>
<polygon points="337.7,120.7 329.6,118.8 329.4,101.5 337.5,103.2" fill="#7e7e7e" stroke="#7e7e7e"/>
<polygon points="337.7,120.7 367.7,113.0 367.8,96.1 337.5,103.2" fill="#8c8c8c" stroke="#8c8c8c"/>
<polygon points="337.5,103.2 367.8,96.1 359.7,94.5 329.4,101.5" fill="#777" stroke="#777"/>
<polygon points="517.0,105.1 483.8,99.0 484.4,91.5 517.6,97.4" fill="#747474" stroke="#747474"/>
<polygon points="517.0,105.1 522.4,103.5 523.1,95.9 517.6,97.4" fill="#808080" stroke="#808080"/>
<polygon points="517.6,97.4 523.1,95.9 489.9,90.1 484.4,91.5" fill="#6a6a6a" stroke="#6a6a6a"/>
<path class="dl d3" d="M520.4 96.7L487.1 90.8"/>
<polygon points="202.7,475.1 195.9,470.7 194.5,457.0 201.3,461.3" fill="#7e7e7e" stroke="#7e7e7e"/>
<polygon points="202.7,475.1 235.9,457.0 234.9,443.5 201.3,461.3" fill="#8c8c8c" stroke="#8c8c8c"/>
<polygon points="201.3,461.3 234.9,443.5 228.0,439.5 194.5,457.0" fill="#777" stroke="#777"/>
<polygon points="413.5,453.1 403.1,447.8 403.3,442.0 413.7,447.2" fill="#747474" stroke="#747474"/>
<polygon points="413.5,453.1 440.3,435.7 440.6,430.0 413.7,447.2" fill="#808080" stroke="#808080"/>
<polygon points="413.7,447.2 440.6,430.0 430.2,425.0 403.3,442.0" fill="#6a6a6a" stroke="#6a6a6a"/>
<path class="dl d1" d="M408.5 444.6L435.4 427.5"/>
<polygon points="421.9,471.3 413.6,467.0 414.1,453.4 422.6,457.6" fill="#7e7e7e" stroke="#7e7e7e"/>
<polygon points="421.9,471.3 448.4,453.4 449.2,440.0 422.6,457.6" fill="#8c8c8c" stroke="#8c8c8c"/>
<polygon points="422.6,457.6 449.2,440.0 440.9,436.0 414.1,453.4" fill="#777" stroke="#777"/>
<polygon points="338.1,103.4 328.9,101.4 328.8,93.9 338.1,95.8" fill="#747474" stroke="#747474"/>
<polygon points="338.1,103.4 368.4,96.2 368.5,88.8 338.1,95.8" fill="#808080" stroke="#808080"/>
<polygon points="338.1,95.8 368.5,88.8 359.2,87.1 328.8,93.9" fill="#6a6a6a" stroke="#6a6a6a"/>
<polygon points="416.1,313.7 312.7,274.3 312.7,274.2 416.1,313.5" fill="#a1a1a5" fill-opacity="0.72"/>
<polygon points="416.1,313.7 498.2,273.2 498.2,273.1 416.1,313.5" fill="#a1a1a5" fill-opacity="0.72"/>
<polygon points="416.1,313.5 498.2,273.1 396.8,240.4 312.7,274.2" fill="#a1a1a5" fill-opacity="0.72"/>
<polygon points="430.4,247.7 402.9,238.9 403.1,232.8 430.7,241.4" fill="#747474" stroke="#747474"/>
<polygon points="430.4,247.7 444.6,241.6 444.9,235.4 430.7,241.4" fill="#808080" stroke="#808080"/>
<polygon points="430.7,241.4 444.9,235.4 417.4,227.1 403.1,232.8" fill="#6a6a6a" stroke="#6a6a6a"/>
<polygon points="376.6,249.5 367.1,246.3 367.2,240.0 376.7,243.2" fill="#747474" stroke="#747474"/>
<polygon points="376.6,249.5 402.9,238.9 403.1,232.8 376.7,243.2" fill="#808080" stroke="#808080"/>
<polygon points="376.7,243.2 403.1,232.8 393.6,229.8 367.2,240.0" fill="#6a6a6a" stroke="#6a6a6a"/>
<path class="dl d2" d="M371.9 241.6L398.3 231.3"/>
<polygon points="424.9,250.0 397.4,241.1 397.5,234.9 425.2,243.7" fill="#747474" stroke="#747474"/>
<polygon points="424.9,250.0 430.4,247.7 430.7,241.4 425.2,243.7" fill="#808080" stroke="#808080"/>
<polygon points="425.2,243.7 430.7,241.4 403.1,232.8 397.5,234.9" fill="#6a6a6a" stroke="#6a6a6a"/>
<path class="dl d2" d="M427.9 242.6L400.3 233.8"/>
<polygon points="459.3,256.9 430.4,247.7 430.7,241.4 459.6,250.5" fill="#747474" stroke="#747474"/>
<polygon points="459.3,256.9 473.4,250.6 473.8,244.3 459.6,250.5" fill="#808080" stroke="#808080"/>
<polygon points="459.6,250.5 473.8,244.3 444.9,235.4 430.7,241.4" fill="#6a6a6a" stroke="#6a6a6a"/>
<polygon points="453.8,259.4 424.9,250.0 425.2,243.7 454.2,252.9" fill="#747474" stroke="#747474"/>
<polygon points="453.8,259.4 459.3,256.9 459.6,250.5 454.2,252.9" fill="#808080" stroke="#808080"/>
<polygon points="454.2,252.9 459.6,250.5 430.7,241.4 425.2,243.7" fill="#6a6a6a" stroke="#6a6a6a"/>
<path class="dl d2" d="M456.9 251.7L427.9 242.6"/>
<polygon points="348.8,260.7 339.3,257.3 339.2,250.9 348.8,254.2" fill="#747474" stroke="#747474"/>
<polygon points="348.8,260.7 376.6,249.5 376.7,243.2 348.8,254.2" fill="#808080" stroke="#808080"/>
<polygon points="348.8,254.2 376.7,243.2 367.2,240.0 339.2,250.9" fill="#6a6a6a" stroke="#6a6a6a"/>
<path class="dl d2" d="M344.0 252.6L371.9 241.6"/>
<polygon points="489.6,266.6 459.3,256.9 459.6,250.5 490.1,260.1" fill="#747474" stroke="#747474"/>
<polygon points="489.6,266.6 503.5,259.9 504.1,253.5 490.1,260.1" fill="#808080" stroke="#808080"/>
<polygon points="490.1,260.1 504.1,253.5 473.8,244.3 459.6,250.5" fill="#6a6a6a" stroke="#6a6a6a"/>
<polygon points="512.8,268.3 496.6,263.2 497.2,256.8 513.4,261.8" fill="#747474" stroke="#747474"/>
<polygon points="512.8,268.3 524.8,262.4 525.4,256.0 513.4,261.8" fill="#808080" stroke="#808080"/>
<polygon points="513.4,261.8 525.4,256.0 509.2,251.1 497.2,256.8" fill="#6a6a6a" stroke="#6a6a6a"/>
<polygon points="484.2,269.2 453.8,259.4 454.2,252.9 484.7,262.6" fill="#747474" stroke="#747474"/>
<polygon points="484.2,269.2 489.6,266.6 490.1,260.1 484.7,262.6" fill="#808080" stroke="#808080"/>
<polygon points="484.7,262.6 490.1,260.1 459.6,250.5 454.2,252.9" fill="#6a6a6a" stroke="#6a6a6a"/>
<path class="dl d2" d="M487.4 261.4L456.9 251.7"/>
<polygon points="500.7,270.2 489.6,266.6 490.1,260.1 501.3,263.6" fill="#747474" stroke="#747474"/>
<polygon points="500.7,270.2 507.7,266.7 508.3,260.2 501.3,263.6" fill="#808080" stroke="#808080"/>
<polygon points="501.3,263.6 508.3,260.2 497.2,256.8 490.1,260.1" fill="#6a6a6a" stroke="#6a6a6a"/>
<path class="dl d2" d="M495.7 261.9L502.7 258.5"/>
<polygon points="511.1,273.2 501.4,270.1 501.9,263.5 511.7,266.6" fill="#7b7b7b" stroke="#7b7b7b"/>
<polygon points="511.1,273.2 524.2,266.6 524.9,260.1 511.7,266.6" fill="#8b8b8b" stroke="#8b8b8b"/>
<polygon points="511.7,266.6 524.9,260.1 515.1,257.2 501.9,263.5" fill="#6a6a6a" stroke="#6a6a6a"/>
<polygon points="319.3,272.6 309.7,269.0 309.6,262.4 319.2,266.0" fill="#747474" stroke="#747474"/>
<polygon points="319.3,272.6 348.8,260.7 348.8,254.2 319.2,266.0" fill="#808080" stroke="#808080"/>
<polygon points="319.2,266.0 348.8,254.2 339.2,250.9 309.6,262.4" fill="#6a6a6a" stroke="#6a6a6a"/>
<path class="dl d2" d="M314.4 264.2L344.0 252.6"/>
<polygon points="522.6,277.1 511.0,273.5 511.6,266.9 523.2,270.5" fill="#747474" stroke="#747474"/>
<polygon points="522.6,277.1 529.5,273.6 530.2,267.0 523.2,270.5" fill="#808080" stroke="#808080"/>
<polygon points="523.2,270.5 530.2,267.0 518.6,263.4 511.6,266.9" fill="#6a6a6a" stroke="#6a6a6a"/>
<path class="dl d2" d="M517.4 268.7L524.4 265.2"/>
<polygon points="283.5,272.6 274.2,269.0 274.0,262.5 283.2,266.1" fill="#747474" stroke="#747474"/>
<polygon points="283.5,272.6 292.4,269.2 292.2,262.6 283.2,266.1" fill="#808080" stroke="#808080"/>
<polygon points="283.2,266.1 292.2,262.6 282.9,259.1 274.0,262.5" fill="#6a6a6a" stroke="#6a6a6a"/>
<path class="dl d2" d="M278.6 264.3L287.5 260.9"/>
<polygon points="292.8,290.9 284.9,287.7 284.2,272.5 292.3,275.7" fill="#7b7b7b" stroke="#7b7b7b"/>
<polygon points="292.8,290.9 309.3,284.2 309.0,269.1 292.3,275.7" fill="#8b8b8b" stroke="#8b8b8b"/>
<polygon points="292.3,275.7 309.0,269.1 301.0,266.0 284.2,272.5" fill="#6a6a6a" stroke="#6a6a6a"/>
<polygon points="201.8,461.7 194.0,456.7 193.4,450.8 201.2,455.7" fill="#747474" stroke="#747474"/>
<polygon points="201.8,461.7 235.4,443.8 235.0,438.0 201.2,455.7" fill="#808080" stroke="#808080"/>
<polygon points="201.2,455.7 235.0,438.0 227.0,433.4 193.4,450.8" fill="#6a6a6a" stroke="#6a6a6a"/>
<polygon points="423.2,457.9 413.5,453.1 413.7,447.2 423.4,452.0" fill="#747474" stroke="#747474"/>
<polygon points="423.2,457.9 449.8,440.3 450.2,434.5 423.4,452.0" fill="#808080" stroke="#808080"/>
<polygon points="423.4,452.0 450.2,434.5 440.6,430.0 413.7,447.2" fill="#6a6a6a" stroke="#6a6a6a"/>
<polygon points="401.6,474.2 366.3,455.6 366.4,442.2 402.0,460.5" fill="#7e7e7e" stroke="#7e7e7e"/>
<polygon points="401.6,474.2 408.6,469.6 409.1,456.0 402.0,460.5" fill="#8c8c8c" stroke="#8c8c8c"/>
<polygon points="402.0,460.5 409.1,456.0 373.5,437.9 366.4,442.2" fill="#777" stroke="#777"/>
<polygon points="387.0,458.0 358.5,443.2 358.5,437.4 387.1,452.1" fill="#747474" stroke="#747474"/>
<polygon points="387.0,458.0 403.1,447.8 403.3,442.0 387.1,452.1" fill="#808080" stroke="#808080"/>
<polygon points="387.1,452.1 403.3,442.0 374.7,427.8 358.5,437.4" fill="#6a6a6a" stroke="#6a6a6a"/>
<polygon points="475.3,282.7 464.0,278.9 464.4,272.2 475.7,276.0" fill="#747474" stroke="#747474"/>
<polygon points="475.3,282.7 500.7,270.2 501.3,263.6 475.7,276.0" fill="#808080" stroke="#808080"/>
<polygon points="475.7,276.0 501.3,263.6 490.1,260.1 464.4,272.2" fill="#6a6a6a" stroke="#6a6a6a"/>
<path class="dl d2" d="M470.1 274.1L495.7 261.9"/>
<polygon points="292.3,275.7 284.2,272.5 283.9,266.0 292.0,269.1" fill="#7b7b7b" stroke="#7b7b7b"/>
<polygon points="292.3,275.7 309.0,269.1 308.9,262.5 292.0,269.1" fill="#8b8b8b" stroke="#8b8b8b"/>
<polygon points="292.0,269.1 308.9,262.5 300.8,259.5 283.9,266.0" fill="#6a6a6a" stroke="#6a6a6a"/>
<polygon points="184.0,462.0 175.5,456.5 174.8,450.6 183.3,456.0" fill="#747474" stroke="#747474"/>
<polygon points="184.0,462.0 194.0,456.7 193.4,450.8 183.3,456.0" fill="#808080" stroke="#808080"/>
<polygon points="183.3,456.0 193.4,450.8 184.8,445.5 174.8,450.6" fill="#6a6a6a" stroke="#6a6a6a"/>
<path class="dl d1" d="M179.1 453.3L189.1 448.2"/>
<polygon points="483.8,301.5 474.8,298.4 475.9,282.9 485.0,286.0" fill="#7e7e7e" stroke="#7e7e7e"/>
<polygon points="483.8,301.5 509.0,288.4 510.4,273.3 485.0,286.0" fill="#8c8c8c" stroke="#8c8c8c"/>
<polygon points="485.0,286.0 510.4,273.3 501.4,270.4 475.9,282.9" fill="#777" stroke="#777"/>
<polygon points="511.7,266.6 501.9,263.5 512.9,129.7 524.1,132.0" fill="#7b7b7b" stroke="#7b7b7b"/>
<polygon points="511.7,266.6 524.9,260.1 538.6,127.2 524.1,132.0" fill="#8b8b8b" stroke="#8b8b8b"/>
<polygon points="524.1,132.0 538.6,127.2 527.5,125.0 512.9,129.7" fill="#6a6a6a" stroke="#6a6a6a"/>
<polygon points="434.0,463.4 423.2,457.9 423.4,452.0 434.3,457.4" fill="#747474" stroke="#747474"/>
<polygon points="434.0,463.4 460.6,445.4 461.0,439.6 434.3,457.4" fill="#808080" stroke="#808080"/>
<polygon points="434.3,457.4 461.0,439.6 450.2,434.5 423.4,452.0" fill="#6a6a6a" stroke="#6a6a6a"/>
<path class="dl d1" d="M428.8 454.7L455.6 437.0"/>
<polygon points="485.7,286.2 475.3,282.7 475.7,276.0 486.2,279.4" fill="#747474" stroke="#747474"/>
<polygon points="485.7,286.2 511.0,273.5 511.6,266.9 486.2,279.4" fill="#808080" stroke="#808080"/>
<polygon points="486.2,279.4 511.6,266.9 501.3,263.6 475.7,276.0" fill="#6a6a6a" stroke="#6a6a6a"/>
<polygon points="517.0,128.4 475.7,120.0 476.9,102.7 518.6,110.5" fill="#7e7e7e" stroke="#7e7e7e"/>
<polygon points="517.0,128.4 523.4,126.3 525.1,108.5 518.6,110.5" fill="#8c8c8c" stroke="#8c8c8c"/>
<polygon points="518.6,110.5 525.1,108.5 483.5,100.8 476.9,102.7" fill="#777" stroke="#777"/>
<polygon points="183.9,485.3 177.0,480.8 175.3,467.0 182.3,471.5" fill="#7b7b7b" stroke="#7b7b7b"/>
<polygon points="183.9,485.3 201.6,475.7 200.4,461.9 182.3,471.5" fill="#8b8b8b" stroke="#8b8b8b"/>
<polygon points="182.3,471.5 200.4,461.9 193.3,457.5 175.3,467.0" fill="#6a6a6a" stroke="#6a6a6a"/>
<polygon points="405.6,458.2 395.1,452.9 395.3,447.0 405.8,452.3" fill="#747474" stroke="#747474"/>
<polygon points="405.6,458.2 413.5,453.1 413.7,447.2 405.8,452.3" fill="#808080" stroke="#808080"/>
<polygon points="405.8,452.3 413.7,447.2 403.3,442.0 395.3,447.0" fill="#6a6a6a" stroke="#6a6a6a"/>
<path class="dl d1" d="M400.5 449.6L408.5 444.6"/>
<polygon points="302.1,679.9 285.5,667.0 284.7,650.0 301.5,662.7" fill="#adadb1" stroke="#adadb1"/>
<polygon points="302.1,679.9 319.6,665.9 319.2,648.9 301.5,662.7" fill="#c1c1c5" stroke="#c1c1c5"/>
<polygon points="301.5,662.7 319.2,648.9 302.4,636.5 284.7,650.0" fill="#bebec2" stroke="#bebec2"/>
<polygon points="250.9,285.3 241.7,281.5 241.3,274.8 250.5,278.6" fill="#747474" stroke="#747474"/>
<polygon points="250.9,285.3 283.5,272.6 283.2,266.1 250.5,278.6" fill="#808080" stroke="#808080"/>
<polygon points="250.5,278.6 283.2,266.1 274.0,262.5 241.3,274.8" fill="#6a6a6a" stroke="#6a6a6a"/>
<path class="dl d2" d="M245.9 276.7L278.6 264.3"/>
<polygon points="497.3,290.1 485.7,286.2 486.2,279.4 497.9,283.3" fill="#747474" stroke="#747474"/>
<polygon points="497.3,290.1 522.6,277.1 523.2,270.5 497.9,283.3" fill="#808080" stroke="#808080"/>
<polygon points="497.9,283.3 523.2,270.5 511.6,266.9 486.2,279.4" fill="#6a6a6a" stroke="#6a6a6a"/>
<path class="dl d2" d="M492.0 281.3L517.4 268.7"/>
<polygon points="347.2,283.1 319.3,272.6 319.2,266.0 347.2,276.4" fill="#747474" stroke="#747474"/>
<polygon points="347.2,283.1 356.3,279.2 356.4,272.5 347.2,276.4" fill="#808080" stroke="#808080"/>
<polygon points="347.2,276.4 356.4,272.5 328.4,262.4 319.2,266.0" fill="#6a6a6a" stroke="#6a6a6a"/>
<path class="dl d2" d="M351.8 274.4L323.8 264.2"/>
<polygon points="407.0,481.4 398.5,476.9 398.8,463.2 407.5,467.7" fill="#7b7b7b" stroke="#7b7b7b"/>
<polygon points="407.0,481.4 421.1,471.9 421.8,458.2 407.5,467.7" fill="#8b8b8b" stroke="#8b8b8b"/>
<polygon points="407.5,467.7 421.8,458.2 413.2,453.9 398.8,463.2" fill="#6a6a6a" stroke="#6a6a6a"/>
<polygon points="182.3,471.5 175.3,467.0 174.6,461.0 181.7,465.5" fill="#7b7b7b" stroke="#7b7b7b"/>
<polygon points="182.3,471.5 200.4,461.9 199.8,456.0 181.7,465.5" fill="#8b8b8b" stroke="#8b8b8b"/>
<polygon points="181.7,465.5 199.8,456.0 192.7,451.6 174.6,461.0" fill="#6a6a6a" stroke="#6a6a6a"/>
<polygon points="296.6,108.9 286.5,106.6 286.3,98.9 296.3,101.1" fill="#747474" stroke="#747474"/>
<polygon points="296.6,108.9 328.9,101.4 328.8,93.9 296.3,101.1" fill="#808080" stroke="#808080"/>
<polygon points="296.3,101.1 328.8,93.9 318.7,91.8 286.3,98.9" fill="#6a6a6a" stroke="#6a6a6a"/>
<path class="dl d3" d="M291.3 100.0L323.7 92.8"/>
<polygon points="331.4,302.8 297.6,289.2 297.1,274.0 331.2,287.2" fill="#7e7e7e" stroke="#7e7e7e"/>
<polygon points="331.4,302.8 339.1,299.4 338.9,283.9 331.2,287.2" fill="#8c8c8c" stroke="#8c8c8c"/>
<polygon points="331.2,287.2 338.9,283.9 304.8,270.9 297.1,274.0" fill="#777" stroke="#777"/>
<polygon points="310.5,276.1 301.0,272.4 300.8,265.9 310.4,269.5" fill="#747474" stroke="#747474"/>
<polygon points="310.5,276.1 319.3,272.6 319.2,266.0 310.4,269.5" fill="#808080" stroke="#808080"/>
<polygon points="310.4,269.5 319.2,266.0 309.6,262.4 300.8,265.9" fill="#6a6a6a" stroke="#6a6a6a"/>
<path class="dl d2" d="M305.5 267.7L314.4 264.2"/>
<polygon points="301.6,279.7 292.0,276.0 291.8,269.4 301.4,273.0" fill="#747474" stroke="#747474"/>
<polygon points="301.6,279.7 310.5,276.1 310.4,269.5 301.4,273.0" fill="#808080" stroke="#808080"/>
<polygon points="301.4,273.0 310.4,269.5 300.8,265.9 291.8,269.4" fill="#6a6a6a" stroke="#6a6a6a"/>
<path class="dl d2" d="M296.6 271.2L305.5 267.7"/>
<polygon points="259.8,304.3 252.4,301.1 251.5,285.5 258.9,288.6" fill="#7e7e7e" stroke="#7e7e7e"/>
<polygon points="259.8,304.3 292.0,291.0 291.5,275.8 258.9,288.6" fill="#8c8c8c" stroke="#8c8c8c"/>
<polygon points="258.9,288.6 291.5,275.8 284.0,272.9 251.5,285.5" fill="#777" stroke="#777"/>
<polygon points="397.5,463.5 387.0,458.0 387.1,452.1 397.6,457.5" fill="#747474" stroke="#747474"/>
<polygon points="397.5,463.5 405.6,458.2 405.8,452.3 397.6,457.5" fill="#808080" stroke="#808080"/>
<polygon points="397.6,457.5 405.8,452.3 395.3,447.0 387.1,452.1" fill="#6a6a6a" stroke="#6a6a6a"/>
<path class="dl d1" d="M392.4 454.8L400.5 449.6"/>
<polygon points="297.9,528.7 202.4,468.4 202.4,468.3 297.8,528.6" fill="#a1a1a5" fill-opacity="0.72"/>
<polygon points="297.9,528.7 394.2,466.2 394.2,466.1 297.8,528.6" fill="#a1a1a5" fill-opacity="0.72"/>
<polygon points="297.8,528.6 394.2,466.1 299.0,416.3 202.4,468.3" fill="#a1a1a5" fill-opacity="0.72"/>
<polygon points="275.8,431.9 267.0,427.0 266.7,421.3 275.6,426.1" fill="#747474" stroke="#747474"/>
<polygon points="275.8,431.9 305.6,415.8 305.5,410.1 275.6,426.1" fill="#808080" stroke="#808080"/>
<polygon points="275.6,426.1 305.5,410.1 296.6,405.6 266.7,421.3" fill="#6a6a6a" stroke="#6a6a6a"/>
<path class="dl d1" d="M271.1 423.7L301.0 407.8"/>
<polygon points="322.6,434.2 296.8,420.6 296.6,414.9 322.5,428.4" fill="#747474" stroke="#747474"/>
<polygon points="322.6,434.2 331.4,429.2 331.3,423.4 322.5,428.4" fill="#808080" stroke="#808080"/>
<polygon points="322.5,428.4 331.3,423.4 305.5,410.1 296.6,414.9" fill="#6a6a6a" stroke="#6a6a6a"/>
<path class="dl d1" d="M326.9 425.9L301.0 412.5"/>
<polygon points="244.2,449.0 235.4,443.8 235.0,438.0 243.8,443.1" fill="#747474" stroke="#747474"/>
<polygon points="244.2,449.0 275.8,431.9 275.6,426.1 243.8,443.1" fill="#808080" stroke="#808080"/>
<polygon points="243.8,443.1 275.6,426.1 266.7,421.3 235.0,438.0" fill="#6a6a6a" stroke="#6a6a6a"/>
<path class="dl d1" d="M239.4 440.5L271.1 423.7"/>
<polygon points="349.7,448.5 322.6,434.2 322.5,428.4 349.7,442.7" fill="#747474" stroke="#747474"/>
<polygon points="349.7,448.5 358.5,443.2 358.5,437.4 349.7,442.7" fill="#808080" stroke="#808080"/>
<polygon points="349.7,442.7 358.5,437.4 331.3,423.4 322.5,428.4" fill="#6a6a6a" stroke="#6a6a6a"/>
<path class="dl d1" d="M354.1 440.0L326.9 425.9"/>
<polygon points="210.6,467.2 201.8,461.7 201.2,455.7 210.1,461.2" fill="#747474" stroke="#747474"/>
<polygon points="210.6,467.2 244.2,449.0 243.8,443.1 210.1,461.2" fill="#808080" stroke="#808080"/>
<polygon points="210.1,461.2 243.8,443.1 235.0,438.0 201.2,455.7" fill="#6a6a6a" stroke="#6a6a6a"/>
<path class="dl d1" d="M205.6 458.4L239.4 440.5"/>
<polygon points="378.2,463.6 349.7,448.5 349.7,442.7 378.3,457.6" fill="#747474" stroke="#747474"/>
<polygon points="378.2,463.6 387.0,458.0 387.1,452.1 378.3,457.6" fill="#808080" stroke="#808080"/>
<polygon points="378.3,457.6 387.1,452.1 358.5,437.4 349.7,442.7" fill="#6a6a6a" stroke="#6a6a6a"/>
<path class="dl d1" d="M382.7 454.9L354.1 440.0"/>
<polygon points="407.5,467.7 398.8,463.2 399.0,457.2 407.7,461.7" fill="#7b7b7b" stroke="#7b7b7b"/>
<polygon points="407.5,467.7 421.8,458.2 422.1,452.3 407.7,461.7" fill="#8b8b8b" stroke="#8b8b8b"/>
<polygon points="407.7,461.7 422.1,452.3 413.4,448.0 399.0,457.2" fill="#6a6a6a" stroke="#6a6a6a"/>
<polygon points="305.7,128.8 297.6,126.8 297.1,109.0 305.2,110.8" fill="#7e7e7e" stroke="#7e7e7e"/>
<polygon points="305.7,128.8 337.7,120.7 337.5,103.2 305.2,110.8" fill="#8c8c8c" stroke="#8c8c8c"/>
<polygon points="305.2,110.8 337.5,103.2 329.4,101.5 297.1,109.0" fill="#777" stroke="#777"/>
<polygon points="259.5,288.9 250.9,285.3 250.5,278.6 259.1,282.1" fill="#747474" stroke="#747474"/>
<polygon points="259.5,288.9 292.0,276.0 291.8,269.4 259.1,282.1" fill="#808080" stroke="#808080"/>
<polygon points="259.1,282.1 291.8,269.4 283.2,266.1 250.5,278.6" fill="#6a6a6a" stroke="#6a6a6a"/>
<polygon points="524.1,132.0 512.9,129.7 514.4,111.8 525.7,113.9" fill="#7b7b7b" stroke="#7b7b7b"/>
<polygon points="524.1,132.0 538.6,127.2 540.5,109.4 525.7,113.9" fill="#8b8b8b" stroke="#8b8b8b"/>
<polygon points="525.7,113.9 540.5,109.4 529.2,107.3 514.4,111.8" fill="#6a6a6a" stroke="#6a6a6a"/>
<polygon points="426.1,468.7 415.2,463.2 415.5,457.2 426.4,462.7" fill="#747474" stroke="#747474"/>
<polygon points="426.1,468.7 434.0,463.4 434.3,457.4 426.4,462.7" fill="#808080" stroke="#808080"/>
<polygon points="426.4,462.7 434.3,457.4 423.4,452.0 415.5,457.2" fill="#6a6a6a" stroke="#6a6a6a"/>
<path class="dl d1" d="M420.9 459.9L428.8 454.7"/>
<polygon points="305.8,111.0 296.6,108.9 296.3,101.1 305.6,103.2" fill="#747474" stroke="#747474"/>
<polygon points="305.8,111.0 338.1,103.4 338.1,95.8 305.6,103.2" fill="#808080" stroke="#808080"/>
<polygon points="305.6,103.2 338.1,95.8 328.8,93.9 296.3,101.1" fill="#6a6a6a" stroke="#6a6a6a"/>
<polygon points="292.0,269.1 283.9,266.0 277.9,131.5 287.1,133.8" fill="#7b7b7b" stroke="#7b7b7b"/>
<polygon points="292.0,269.1 308.9,262.5 306.2,128.9 287.1,133.8" fill="#8b8b8b" stroke="#8b8b8b"/>
<polygon points="287.1,133.8 306.2,128.9 297.0,126.7 277.9,131.5" fill="#6a6a6a" stroke="#6a6a6a"/>
<polygon points="220.0,503.6 188.9,483.1 187.4,469.3 218.8,489.5" fill="#7e7e7e" stroke="#7e7e7e"/>
<polygon points="220.0,503.6 228.8,498.5 227.6,484.5 218.8,489.5" fill="#8c8c8c" stroke="#8c8c8c"/>
<polygon points="218.8,489.5 227.6,484.5 196.2,464.6 187.4,469.3" fill="#777" stroke="#777"/>
<polygon points="200.6,472.6 191.8,467.0 191.2,461.0 200.0,466.5" fill="#747474" stroke="#747474"/>
<polygon points="200.6,472.6 210.6,467.2 210.1,461.2 200.0,466.5" fill="#808080" stroke="#808080"/>
<polygon points="200.0,466.5 210.1,461.2 201.2,455.7 191.2,461.0" fill="#6a6a6a" stroke="#6a6a6a"/>
<path class="dl d1" d="M195.6 463.7L205.6 458.4"/>
<polygon points="184.6,481.2 171.9,472.9 171.2,466.8 184.0,475.1" fill="#747474" stroke="#747474"/>
<polygon points="184.6,481.2 200.6,472.6 200.0,466.5 184.0,475.1" fill="#808080" stroke="#808080"/>
<polygon points="184.0,475.1 200.0,466.5 187.3,458.5 171.2,466.8" fill="#6a6a6a" stroke="#6a6a6a"/>
<polygon points="418.0,474.1 407.2,468.5 407.4,462.5 418.3,468.1" fill="#747474" stroke="#747474"/>
<polygon points="418.0,474.1 426.1,468.7 426.4,462.7 418.3,468.1" fill="#808080" stroke="#808080"/>
<polygon points="418.3,468.1 426.4,462.7 415.5,457.2 407.4,462.5" fill="#6a6a6a" stroke="#6a6a6a"/>
<path class="dl d1" d="M412.8 465.3L420.9 459.9"/>
<polygon points="236.3,483.2 210.6,467.2 210.1,461.2 235.9,477.1" fill="#747474" stroke="#747474"/>
<polygon points="236.3,483.2 241.9,480.1 241.5,474.0 235.9,477.1" fill="#808080" stroke="#808080"/>
<polygon points="235.9,477.1 241.5,474.0 215.6,458.2 210.1,461.2" fill="#6a6a6a" stroke="#6a6a6a"/>
<path class="dl d1" d="M238.7 475.6L212.9 459.7"/>
<polygon points="448.1,296.0 436.8,292.0 437.1,285.1 448.5,289.1" fill="#747474" stroke="#747474"/>
<polygon points="448.1,296.0 475.3,282.7 475.7,276.0 448.5,289.1" fill="#808080" stroke="#808080"/>
<polygon points="448.5,289.1 475.7,276.0 464.4,272.2 437.1,285.1" fill="#6a6a6a" stroke="#6a6a6a"/>
<path class="dl d2" d="M442.8 287.1L470.1 274.1"/>
<polygon points="286.9,111.1 276.9,108.8 276.6,101.1 286.7,103.3" fill="#747474" stroke="#747474"/>
<polygon points="286.9,111.1 296.6,108.9 296.3,101.1 286.7,103.3" fill="#808080" stroke="#808080"/>
<polygon points="286.7,103.3 296.3,101.1 286.3,98.9 276.6,101.1" fill="#6a6a6a" stroke="#6a6a6a"/>
<path class="dl d3" d="M281.6 102.2L291.3 100.0"/>
<polygon points="368.0,482.6 357.4,476.8 357.4,470.7 368.0,476.5" fill="#747474" stroke="#747474"/>
<polygon points="368.0,482.6 397.5,463.5 397.6,457.5 368.0,476.5" fill="#808080" stroke="#808080"/>
<polygon points="368.0,476.5 397.6,457.5 387.1,452.1 357.4,470.7" fill="#6a6a6a" stroke="#6a6a6a"/>
<path class="dl d1" d="M362.7 473.6L392.4 454.8"/>
<polygon points="376.9,501.7 368.4,497.0 368.6,482.9 377.1,487.6" fill="#7e7e7e" stroke="#7e7e7e"/>
<polygon points="376.9,501.7 406.1,482.0 406.5,468.2 377.1,487.6" fill="#8c8c8c" stroke="#8c8c8c"/>
<polygon points="377.1,487.6 406.5,468.2 398.1,463.8 368.6,482.9" fill="#777" stroke="#777"/>
<polygon points="457.0,315.4 447.9,312.1 448.8,296.2 458.0,299.5" fill="#7e7e7e" stroke="#7e7e7e"/>
<polygon points="457.0,315.4 483.8,301.5 485.0,286.0 458.0,299.5" fill="#8c8c8c" stroke="#8c8c8c"/>
<polygon points="458.0,299.5 485.0,286.0 475.9,282.9 448.8,296.2" fill="#777" stroke="#777"/>
<polygon points="376.6,294.2 347.2,283.1 347.2,276.4 376.7,287.3" fill="#747474" stroke="#747474"/>
<polygon points="376.6,294.2 385.7,290.1 385.9,283.3 376.7,287.3" fill="#808080" stroke="#808080"/>
<polygon points="376.7,287.3 385.9,283.3 356.4,272.5 347.2,276.4" fill="#6a6a6a" stroke="#6a6a6a"/>
<path class="dl d2" d="M381.3 285.3L351.8 274.4"/>
<polygon points="216.2,298.8 207.1,294.7 206.5,287.8 215.7,291.9" fill="#747474" stroke="#747474"/>
<polygon points="216.2,298.8 250.9,285.3 250.5,278.6 215.7,291.9" fill="#808080" stroke="#808080"/>
<polygon points="215.7,291.9 250.5,278.6 241.3,274.8 206.5,287.8" fill="#6a6a6a" stroke="#6a6a6a"/>
<path class="dl d2" d="M211.1 289.9L245.9 276.7"/>
<polygon points="458.6,299.7 448.1,296.0 448.5,289.1 459.1,292.8" fill="#747474" stroke="#747474"/>
<polygon points="458.6,299.7 485.7,286.2 486.2,279.4 459.1,292.8" fill="#808080" stroke="#808080"/>
<polygon points="459.1,292.8 486.2,279.4 475.7,276.0 448.5,289.1" fill="#6a6a6a" stroke="#6a6a6a"/>
<polygon points="422.5,143.2 309.1,116.9 309.1,116.7 422.6,143.0" fill="#a1a1a5" fill-opacity="0.72"/>
<polygon points="422.5,143.2 511.4,116.2 511.5,116.0 422.6,143.0" fill="#a1a1a5" fill-opacity="0.72"/>
<polygon points="422.6,143.0 511.5,116.0 400.5,94.5 309.1,116.7" fill="#a1a1a5" fill-opacity="0.72"/>
<polygon points="437.1,97.1 407.1,91.4 407.3,84.2 437.4,89.7" fill="#747474" stroke="#747474"/>
<polygon points="437.1,97.1 452.4,93.2 452.8,85.9 437.4,89.7" fill="#808080" stroke="#808080"/>
<polygon points="437.4,89.7 452.8,85.9 422.8,80.6 407.3,84.2" fill="#6a6a6a" stroke="#6a6a6a"/>
<polygon points="378.7,98.3 368.4,96.2 368.5,88.8 378.8,90.9" fill="#747474" stroke="#747474"/>
<polygon points="378.7,98.3 407.1,91.4 407.3,84.2 378.8,90.9" fill="#808080" stroke="#808080"/>
<polygon points="378.8,90.9 407.3,84.2 397.0,82.3 368.5,88.8" fill="#6a6a6a" stroke="#6a6a6a"/>
<path class="dl d3" d="M373.6 89.8L402.1 83.3"/>
<polygon points="431.2,98.6 401.2,92.9 401.4,85.6 431.5,91.2" fill="#747474" stroke="#747474"/>
<polygon points="431.2,98.6 437.1,97.1 437.4,89.7 431.5,91.2" fill="#808080" stroke="#808080"/>
<polygon points="431.5,91.2 437.4,89.7 407.3,84.2 401.4,85.6" fill="#6a6a6a" stroke="#6a6a6a"/>
<path class="dl d3" d="M434.5 90.5L404.3 84.9"/>
<polygon points="468.7,103.1 437.1,97.1 437.4,89.7 469.2,95.5" fill="#747474" stroke="#747474"/>
<polygon points="468.7,103.1 483.8,99.0 484.4,91.5 469.2,95.5" fill="#808080" stroke="#808080"/>
<polygon points="469.2,95.5 484.4,91.5 452.8,85.9 437.4,89.7" fill="#6a6a6a" stroke="#6a6a6a"/>
<polygon points="462.9,104.7 431.2,98.6 431.5,91.2 463.3,97.1" fill="#747474" stroke="#747474"/>
<polygon points="462.9,104.7 468.7,103.1 469.2,95.5 463.3,97.1" fill="#808080" stroke="#808080"/>
<polygon points="463.3,97.1 469.2,95.5 437.4,89.7 431.5,91.2" fill="#6a6a6a" stroke="#6a6a6a"/>
<path class="dl d3" d="M466.2 96.3L434.5 90.5"/>
<polygon points="348.5,105.6 338.1,103.4 338.1,95.8 348.5,97.9" fill="#747474" stroke="#747474"/>
<polygon points="348.5,105.6 378.7,98.3 378.8,90.9 348.5,97.9" fill="#808080" stroke="#808080"/>
<polygon points="348.5,97.9 378.8,90.9 368.5,88.8 338.1,95.8" fill="#6a6a6a" stroke="#6a6a6a"/>
<path class="dl d3" d="M343.2 96.8L373.6 89.8"/>
<polygon points="502.0,109.4 468.7,103.1 469.2,95.5 502.7,101.7" fill="#747474" stroke="#747474"/>
<polygon points="502.0,109.4 517.0,105.1 517.6,97.4 502.7,101.7" fill="#808080" stroke="#808080"/>
<polygon points="502.7,101.7 517.6,97.4 484.4,91.5 469.2,95.5" fill="#6a6a6a" stroke="#6a6a6a"/>
<polygon points="527.5,110.6 509.6,107.2 510.2,99.5 528.2,102.8" fill="#747474" stroke="#747474"/>
<polygon points="527.5,110.6 540.2,106.7 541.0,99.0 528.2,102.8" fill="#808080" stroke="#808080"/>
<polygon points="528.2,102.8 541.0,99.0 523.1,95.9 510.2,99.5" fill="#6a6a6a" stroke="#6a6a6a"/>
<polygon points="496.3,111.1 462.9,104.7 463.3,97.1 496.9,103.3" fill="#747474" stroke="#747474"/>
<polygon points="496.3,111.1 502.0,109.4 502.7,101.7 496.9,103.3" fill="#808080" stroke="#808080"/>
<polygon points="496.9,103.3 502.7,101.7 469.2,95.5 463.3,97.1" fill="#6a6a6a" stroke="#6a6a6a"/>
<path class="dl d3" d="M499.8 102.5L466.2 96.3"/>
<polygon points="514.3,111.8 502.0,109.4 502.7,101.7 515.0,103.9" fill="#747474" stroke="#747474"/>
<polygon points="514.3,111.8 521.8,109.5 522.5,101.8 515.0,103.9" fill="#808080" stroke="#808080"/>
<polygon points="515.0,103.9 522.5,101.8 510.2,99.5 502.7,101.7" fill="#6a6a6a" stroke="#6a6a6a"/>
<path class="dl d3" d="M508.8 102.8L516.3 100.6"/>
<polygon points="525.7,113.9 514.4,111.8 515.0,103.9 526.4,106.0" fill="#7b7b7b" stroke="#7b7b7b"/>
<polygon points="525.7,113.9 540.5,109.4 541.3,101.6 526.4,106.0" fill="#8b8b8b" stroke="#8b8b8b"/>
<polygon points="526.4,106.0 541.3,101.6 529.9,99.6 515.0,103.9" fill="#6a6a6a" stroke="#6a6a6a"/>
<polygon points="316.2,113.3 305.8,111.0 305.6,103.2 316.1,105.5" fill="#747474" stroke="#747474"/>
<polygon points="316.2,113.3 348.5,105.6 348.5,97.9 316.1,105.5" fill="#808080" stroke="#808080"/>
<polygon points="316.1,105.5 348.5,97.9 338.1,95.8 305.6,103.2" fill="#6a6a6a" stroke="#6a6a6a"/>
<path class="dl d3" d="M310.8 104.3L343.2 96.8"/>
<polygon points="538.5,116.3 525.7,113.9 526.4,106.0 539.3,108.4" fill="#747474" stroke="#747474"/>
<polygon points="538.5,116.3 545.9,114.0 546.7,106.1 539.3,108.4" fill="#808080" stroke="#808080"/>
<polygon points="539.3,108.4 546.7,106.1 533.9,103.8 526.4,106.0" fill="#6a6a6a" stroke="#6a6a6a"/>
<path class="dl d3" d="M532.8 107.2L540.3 105.0"/>
<polygon points="277.1,113.4 267.1,111.0 266.7,103.2 276.8,105.5" fill="#747474" stroke="#747474"/>
<polygon points="277.1,113.4 286.9,111.1 286.7,103.3 276.8,105.5" fill="#808080" stroke="#808080"/>
<polygon points="276.8,105.5 286.7,103.3 276.6,101.1 266.7,103.2" fill="#6a6a6a" stroke="#6a6a6a"/>
<path class="dl d3" d="M271.7 104.4L281.6 102.2"/>
<polygon points="377.7,488.0 368.0,482.6 368.0,476.5 377.8,481.8" fill="#747474" stroke="#747474"/>
<polygon points="377.7,488.0 407.2,468.5 407.4,462.5 377.8,481.8" fill="#808080" stroke="#808080"/>
<polygon points="377.8,481.8 407.4,462.5 397.6,457.5 368.0,476.5" fill="#6a6a6a" stroke="#6a6a6a"/>
<polygon points="225.4,318.4 218.0,315.0 216.8,299.0 224.2,302.4" fill="#7e7e7e" stroke="#7e7e7e"/>
<polygon points="225.4,318.4 259.8,304.3 258.9,288.6 224.2,302.4" fill="#8c8c8c" stroke="#8c8c8c"/>
<polygon points="224.2,302.4 258.9,288.6 251.5,285.5 216.8,299.0" fill="#777" stroke="#777"/>
<polygon points="287.1,133.8 277.9,131.5 277.1,113.4 286.4,115.6" fill="#7b7b7b" stroke="#7b7b7b"/>
<polygon points="287.1,133.8 306.2,128.9 305.8,111.0 286.4,115.6" fill="#8b8b8b" stroke="#8b8b8b"/>
<polygon points="286.4,115.6 305.8,111.0 296.5,108.9 277.1,113.4" fill="#6a6a6a" stroke="#6a6a6a"/>
<polygon points="367.5,317.2 331.4,302.8 331.2,287.2 367.7,301.2" fill="#7e7e7e" stroke="#7e7e7e"/>
<polygon points="367.5,317.2 375.1,313.6 375.3,297.8 367.7,301.2" fill="#8c8c8c" stroke="#8c8c8c"/>
<polygon points="367.7,301.2 375.3,297.8 338.9,283.9 331.2,287.2" fill="#777" stroke="#777"/>
<polygon points="329.5,290.6 301.6,279.7 301.4,273.0 329.5,283.8" fill="#747474" stroke="#747474"/>
<polygon points="329.5,290.6 347.2,283.1 347.2,276.4 329.5,283.8" fill="#808080" stroke="#808080"/>
<polygon points="329.5,283.8 347.2,276.4 319.2,266.0 301.4,273.0" fill="#6a6a6a" stroke="#6a6a6a"/>
<polygon points="486.9,120.0 474.5,117.5 475.0,109.5 487.5,111.9" fill="#747474" stroke="#747474"/>
<polygon points="486.9,120.0 514.3,111.8 515.0,103.9 487.5,111.9" fill="#808080" stroke="#808080"/>
<polygon points="487.5,111.9 515.0,103.9 502.7,101.7 475.0,109.5" fill="#6a6a6a" stroke="#6a6a6a"/>
<path class="dl d3" d="M481.2 110.7L508.8 102.8"/>
<polygon points="286.4,115.6 277.1,113.4 276.8,105.5 286.1,107.6" fill="#7b7b7b" stroke="#7b7b7b"/>
<polygon points="286.4,115.6 305.8,111.0 305.6,103.2 286.1,107.6" fill="#8b8b8b" stroke="#8b8b8b"/>
<polygon points="286.1,107.6 305.6,103.2 296.3,101.1 276.8,105.5" fill="#6a6a6a" stroke="#6a6a6a"/>
<polygon points="470.4,303.9 458.6,299.7 459.1,292.8 470.9,296.9" fill="#747474" stroke="#747474"/>
<polygon points="470.4,303.9 497.3,290.1 497.9,283.3 470.9,296.9" fill="#808080" stroke="#808080"/>
<polygon points="470.9,296.9 497.9,283.3 486.2,279.4 459.1,292.8" fill="#6a6a6a" stroke="#6a6a6a"/>
<path class="dl d2" d="M465.0 294.9L492.0 281.3"/>
<polygon points="224.8,302.6 216.2,298.8 215.7,291.9 224.2,295.6" fill="#747474" stroke="#747474"/>
<polygon points="224.8,302.6 259.5,288.9 259.1,282.1 224.2,295.6" fill="#808080" stroke="#808080"/>
<polygon points="224.2,295.6 259.1,282.1 250.5,278.6 215.7,291.9" fill="#6a6a6a" stroke="#6a6a6a"/>
<polygon points="388.6,494.0 377.7,488.0 377.8,481.8 388.8,487.8" fill="#747474" stroke="#747474"/>
<polygon points="388.6,494.0 418.0,474.1 418.3,468.1 388.8,487.8" fill="#808080" stroke="#808080"/>
<polygon points="388.8,487.8 418.3,468.1 407.4,462.5 377.8,481.8" fill="#6a6a6a" stroke="#6a6a6a"/>
<path class="dl d1" d="M383.3 484.8L412.8 465.3"/>
<polygon points="181.7,465.5 174.6,461.0 159.7,338.3 167.6,342.4" fill="#7b7b7b" stroke="#7b7b7b"/>
<polygon points="181.7,465.5 199.8,456.0 188.4,333.8 167.6,342.4" fill="#8b8b8b" stroke="#8b8b8b"/>
<polygon points="167.6,342.4 188.4,333.8 180.5,329.9 159.7,338.3" fill="#6a6a6a" stroke="#6a6a6a"/>
<polygon points="359.0,302.1 329.5,290.6 329.5,283.8 359.1,295.2" fill="#747474" stroke="#747474"/>
<polygon points="359.0,302.1 376.6,294.2 376.7,287.3 359.1,295.2" fill="#808080" stroke="#808080"/>
<polygon points="359.1,295.2 376.7,287.3 347.2,276.4 329.5,283.8" fill="#6a6a6a" stroke="#6a6a6a"/>
<polygon points="496.3,140.8 486.3,138.6 487.6,120.1 497.7,122.1" fill="#7e7e7e" stroke="#7e7e7e"/>
<polygon points="496.3,140.8 523.3,131.9 525.0,113.8 497.7,122.1" fill="#8c8c8c" stroke="#8c8c8c"/>
<polygon points="497.7,122.1 525.0,113.8 515.0,111.9 487.6,120.1" fill="#777" stroke="#777"/>
<polygon points="498.4,122.3 486.9,120.0 487.5,111.9 499.1,114.1" fill="#747474" stroke="#747474"/>
<polygon points="498.4,122.3 525.7,113.9 526.4,106.0 499.1,114.1" fill="#808080" stroke="#808080"/>
<polygon points="499.1,114.1 526.4,106.0 515.0,103.9 487.5,111.9" fill="#6a6a6a" stroke="#6a6a6a"/>
<polygon points="263.5,500.2 236.3,483.2 235.9,477.1 263.1,494.0" fill="#747474" stroke="#747474"/>
<polygon points="263.5,500.2 269.1,496.9 268.7,490.7 263.1,494.0" fill="#808080" stroke="#808080"/>
<polygon points="263.1,494.0 268.7,490.7 241.5,474.0 235.9,477.1" fill="#6a6a6a" stroke="#6a6a6a"/>
<path class="dl d1" d="M265.9 492.4L238.7 475.6"/>
<polygon points="407.7,461.7 399.0,457.2 402.1,335.1 412.0,339.1" fill="#7b7b7b" stroke="#7b7b7b"/>
<polygon points="407.7,461.7 422.1,452.3 428.2,330.7 412.0,339.1" fill="#8b8b8b" stroke="#8b8b8b"/>
<polygon points="412.0,339.1 428.2,330.7 418.3,326.8 402.1,335.1" fill="#6a6a6a" stroke="#6a6a6a"/>
<polygon points="253.3,525.5 220.0,503.6 218.8,489.5 252.3,511.1" fill="#7e7e7e" stroke="#7e7e7e"/>
<polygon points="253.3,525.5 262.0,520.0 261.2,505.7 252.3,511.1" fill="#8c8c8c" stroke="#8c8c8c"/>
<polygon points="252.3,511.1 261.2,505.7 227.6,484.5 218.8,489.5" fill="#777" stroke="#777"/>
<polygon points="216.1,494.8 190.4,478.1 189.8,472.0 215.5,488.6" fill="#747474" stroke="#747474"/>
<polygon points="216.1,494.8 236.3,483.2 235.9,477.1 215.5,488.6" fill="#808080" stroke="#808080"/>
<polygon points="215.5,488.6 235.9,477.1 210.1,461.2 189.8,472.0" fill="#6a6a6a" stroke="#6a6a6a"/>
<polygon points="210.3,498.1 184.6,481.2 184.0,475.1 209.7,491.9" fill="#747474" stroke="#747474"/>
<polygon points="210.3,498.1 216.1,494.8 215.5,488.6 209.7,491.9" fill="#808080" stroke="#808080"/>
<polygon points="209.7,491.9 215.5,488.6 189.8,472.0 184.0,475.1" fill="#6a6a6a" stroke="#6a6a6a"/>
<path class="dl d1" d="M212.6 490.2L186.9 473.6"/>
<polygon points="241.2,121.7 231.2,119.2 230.7,111.1 240.7,113.6" fill="#747474" stroke="#747474"/>
<polygon points="241.2,121.7 277.1,113.4 276.8,105.5 240.7,113.6" fill="#808080" stroke="#808080"/>
<polygon points="240.7,113.6 276.8,105.5 266.7,103.2 230.7,111.1" fill="#6a6a6a" stroke="#6a6a6a"/>
<path class="dl d3" d="M235.7 112.4L271.7 104.4"/>
<polygon points="297.8,658.5 290.1,652.7 284.9,552.3 293.5,558.0" fill="#7b7b7b" stroke="#7b7b7b"/>
<polygon points="297.8,658.5 313.6,646.2 311.3,546.0 293.5,558.0" fill="#8b8b8b" stroke="#8b8b8b"/>
<polygon points="293.5,558.0 311.3,546.0 302.7,540.5 284.9,552.3" fill="#6a6a6a" stroke="#6a6a6a"/>
<polygon points="511.4,124.9 498.4,122.3 499.1,114.1 512.0,116.7" fill="#747474" stroke="#747474"/>
<polygon points="511.4,124.9 538.5,116.3 539.3,108.4 512.0,116.7" fill="#808080" stroke="#808080"/>
<polygon points="512.0,116.7 539.3,108.4 526.4,106.0 499.1,114.1" fill="#6a6a6a" stroke="#6a6a6a"/>
<path class="dl d3" d="M505.5 115.4L532.8 107.2"/>
<polygon points="346.7,120.2 316.2,113.3 316.1,105.5 346.7,112.2" fill="#747474" stroke="#747474"/>
<polygon points="346.7,120.2 356.7,117.7 356.7,109.7 346.7,112.2" fill="#808080" stroke="#808080"/>
<polygon points="346.7,112.2 356.7,109.7 326.2,103.1 316.1,105.5" fill="#6a6a6a" stroke="#6a6a6a"/>
<path class="dl d3" d="M351.7 110.9L321.1 104.3"/>
<polygon points="407.7,305.9 376.6,294.2 376.7,287.3 407.9,298.9" fill="#747474" stroke="#747474"/>
<polygon points="407.7,305.9 416.7,301.6 417.0,294.6 407.9,298.9" fill="#808080" stroke="#808080"/>
<polygon points="407.9,298.9 417.0,294.6 385.9,283.3 376.7,287.3" fill="#6a6a6a" stroke="#6a6a6a"/>
<path class="dl d2" d="M412.5 296.7L381.3 285.3"/>
<polygon points="336.5,503.0 325.9,496.8 325.8,490.6 336.4,496.8" fill="#747474" stroke="#747474"/>
<polygon points="336.5,503.0 368.0,482.6 368.0,476.5 336.4,496.8" fill="#808080" stroke="#808080"/>
<polygon points="336.4,496.8 368.0,476.5 357.4,470.7 325.8,490.6" fill="#6a6a6a" stroke="#6a6a6a"/>
<path class="dl d1" d="M331.1 493.7L362.7 473.6"/>
<polygon points="345.7,522.7 337.2,517.7 337.1,503.3 345.6,508.4" fill="#7e7e7e" stroke="#7e7e7e"/>
<polygon points="345.7,522.7 376.9,501.7 377.1,487.6 345.6,508.4" fill="#8c8c8c" stroke="#8c8c8c"/>
<polygon points="345.6,508.4 377.1,487.6 368.6,482.9 337.1,503.3" fill="#777" stroke="#777"/>
<polygon points="179.2,313.2 170.1,308.8 169.3,301.8 178.5,306.1" fill="#747474" stroke="#747474"/>
<polygon points="179.2,313.2 216.2,298.8 215.7,291.9 178.5,306.1" fill="#808080" stroke="#808080"/>
<polygon points="178.5,306.1 215.7,291.9 206.5,287.8 169.3,301.8" fill="#6a6a6a" stroke="#6a6a6a"/>
<path class="dl d2" d="M173.9 304.0L211.1 289.9"/>
<polygon points="329.4,141.6 292.5,132.4 291.9,114.3 329.2,122.9" fill="#7e7e7e" stroke="#7e7e7e"/>
<polygon points="329.4,141.6 337.8,139.3 337.6,120.8 329.2,122.9" fill="#8c8c8c" stroke="#8c8c8c"/>
<polygon points="329.2,122.9 337.6,120.8 300.4,112.2 291.9,114.3" fill="#777" stroke="#777"/>
<polygon points="306.6,115.6 296.2,113.2 296.0,105.4 306.4,107.7" fill="#747474" stroke="#747474"/>
<polygon points="306.6,115.6 316.2,113.3 316.1,105.5 306.4,107.7" fill="#808080" stroke="#808080"/>
<polygon points="306.4,107.7 316.1,105.5 305.6,103.2 296.0,105.4" fill="#6a6a6a" stroke="#6a6a6a"/>
<path class="dl d3" d="M301.2 106.5L310.8 104.3"/>
<polygon points="296.8,118.0 286.4,115.6 286.1,107.6 296.6,110.0" fill="#747474" stroke="#747474"/>
<polygon points="296.8,118.0 306.6,115.6 306.4,107.7 296.6,110.0" fill="#808080" stroke="#808080"/>
<polygon points="296.6,110.0 306.4,107.7 296.0,105.4 286.1,107.6" fill="#6a6a6a" stroke="#6a6a6a"/>
<path class="dl d3" d="M291.3 108.8L301.2 106.5"/>
<polygon points="419.2,310.2 407.7,305.9 407.9,298.9 419.4,303.2" fill="#747474" stroke="#747474"/>
<polygon points="419.2,310.2 448.1,296.0 448.5,289.1 419.4,303.2" fill="#808080" stroke="#808080"/>
<polygon points="419.4,303.2 448.5,289.1 437.1,285.1 407.9,298.9" fill="#6a6a6a" stroke="#6a6a6a"/>
<path class="dl d2" d="M413.7 301.0L442.8 287.1"/>
<polygon points="243.2,512.4 216.1,494.8 215.5,488.6 242.7,506.1" fill="#747474" stroke="#747474"/>
<polygon points="243.2,512.4 263.5,500.2 263.1,494.0 242.7,506.1" fill="#808080" stroke="#808080"/>
<polygon points="242.7,506.1 263.1,494.0 235.9,477.1 215.5,488.6" fill="#6a6a6a" stroke="#6a6a6a"/>
<polygon points="250.9,142.7 242.9,140.5 241.8,121.8 249.9,123.9" fill="#7e7e7e" stroke="#7e7e7e"/>
<polygon points="250.9,142.7 286.5,133.6 285.8,115.4 249.9,123.9" fill="#8c8c8c" stroke="#8c8c8c"/>
<polygon points="249.9,123.9 285.8,115.4 277.7,113.5 241.8,121.8" fill="#777" stroke="#777"/>
<polygon points="188.7,333.4 181.4,329.8 179.7,313.5 187.1,317.0" fill="#7e7e7e" stroke="#7e7e7e"/>
<polygon points="188.7,333.4 225.4,318.4 224.2,302.4 187.1,317.0" fill="#8c8c8c" stroke="#8c8c8c"/>
<polygon points="187.1,317.0 224.2,302.4 216.8,299.0 179.7,313.5" fill="#777" stroke="#777"/>
<polygon points="428.4,330.3 419.2,326.7 419.8,310.5 429.1,313.9" fill="#7e7e7e" stroke="#7e7e7e"/>
<polygon points="428.4,330.3 457.0,315.4 458.0,299.5 429.1,313.9" fill="#8c8c8c" stroke="#8c8c8c"/>
<polygon points="429.1,313.9 458.0,299.5 448.8,296.2 419.8,310.5" fill="#777" stroke="#777"/>
<polygon points="346.3,508.7 336.5,503.0 336.4,496.8 346.2,502.5" fill="#747474" stroke="#747474"/>
<polygon points="346.3,508.7 377.7,488.0 377.8,481.8 346.2,502.5" fill="#808080" stroke="#808080"/>
<polygon points="346.2,502.5 377.8,481.8 368.0,476.5 336.4,496.8" fill="#6a6a6a" stroke="#6a6a6a"/>
<polygon points="250.5,124.0 241.2,121.7 240.7,113.6 250.1,115.9" fill="#747474" stroke="#747474"/>
<polygon points="250.5,124.0 286.4,115.6 286.1,107.6 250.1,115.9" fill="#808080" stroke="#808080"/>
<polygon points="250.1,115.9 286.1,107.6 276.8,105.5 240.7,113.6" fill="#6a6a6a" stroke="#6a6a6a"/>
<polygon points="187.7,317.3 179.2,313.2 178.5,306.1 187.0,310.1" fill="#747474" stroke="#747474"/>
<polygon points="187.7,317.3 224.8,302.6 224.2,295.6 187.0,310.1" fill="#808080" stroke="#808080"/>
<polygon points="187.0,310.1 224.2,295.6 215.7,291.9 178.5,306.1" fill="#6a6a6a" stroke="#6a6a6a"/>
<polygon points="429.8,314.2 419.2,310.2 419.4,303.2 430.1,307.1" fill="#747474" stroke="#747474"/>
<polygon points="429.8,314.2 458.6,299.7 459.1,292.8 430.1,307.1" fill="#808080" stroke="#808080"/>
<polygon points="430.1,307.1 459.1,292.8 448.5,289.1 419.4,303.2" fill="#6a6a6a" stroke="#6a6a6a"/>
<polygon points="237.3,515.9 210.3,498.1 209.7,491.9 236.8,509.6" fill="#747474" stroke="#747474"/>
<polygon points="237.3,515.9 243.2,512.4 242.7,506.1 236.8,509.6" fill="#808080" stroke="#808080"/>
<polygon points="236.8,509.6 242.7,506.1 215.5,488.6 209.7,491.9" fill="#6a6a6a" stroke="#6a6a6a"/>
<path class="dl d1" d="M239.8 507.9L212.6 490.2"/>
<polygon points="406.2,332.7 367.5,317.2 367.7,301.2 406.7,316.3" fill="#7e7e7e" stroke="#7e7e7e"/>
<polygon points="406.2,332.7 413.7,328.9 414.3,312.6 406.7,316.3" fill="#8c8c8c" stroke="#8c8c8c"/>
<polygon points="406.7,316.3 414.3,312.6 375.3,297.8 367.7,301.2" fill="#777" stroke="#777"/>
<polygon points="390.2,314.3 359.0,302.1 359.1,295.2 390.4,307.2" fill="#747474" stroke="#747474"/>
<polygon points="390.2,314.3 407.7,305.9 407.9,298.9 390.4,307.2" fill="#808080" stroke="#808080"/>
<polygon points="390.4,307.2 407.9,298.9 376.7,287.3 359.1,295.2" fill="#6a6a6a" stroke="#6a6a6a"/>
<polygon points="357.2,515.2 346.3,508.7 346.2,502.5 357.3,508.9" fill="#747474" stroke="#747474"/>
<polygon points="357.2,515.2 388.6,494.0 388.8,487.8 357.3,508.9" fill="#808080" stroke="#808080"/>
<polygon points="357.3,508.9 388.8,487.8 377.8,481.8 346.2,502.5" fill="#6a6a6a" stroke="#6a6a6a"/>
<path class="dl d1" d="M351.7 505.7L383.3 484.8"/>
<polygon points="168.1,317.5 159.0,313.1 158.2,306.0 167.4,310.4" fill="#747474" stroke="#747474"/>
<polygon points="168.1,317.5 179.2,313.2 178.5,306.1 167.4,310.4" fill="#808080" stroke="#808080"/>
<polygon points="167.4,310.4 178.5,306.1 169.3,301.8 158.2,306.0" fill="#6a6a6a" stroke="#6a6a6a"/>
<path class="dl d2" d="M162.8 308.2L173.9 304.0"/>
<polygon points="441.7,318.7 429.8,314.2 430.1,307.1 442.0,311.5" fill="#747474" stroke="#747474"/>
<polygon points="441.7,318.7 470.4,303.9 470.9,296.9 442.0,311.5" fill="#808080" stroke="#808080"/>
<polygon points="442.0,311.5 470.9,296.9 459.1,292.8 430.1,307.1" fill="#6a6a6a" stroke="#6a6a6a"/>
<path class="dl d2" d="M436.0 309.3L465.0 294.9"/>
<polygon points="292.2,518.2 263.5,500.2 263.1,494.0 291.9,511.9" fill="#747474" stroke="#747474"/>
<polygon points="292.2,518.2 297.8,514.7 297.5,508.4 291.9,511.9" fill="#808080" stroke="#808080"/>
<polygon points="291.9,511.9 297.5,508.4 268.7,490.7 263.1,494.0" fill="#6a6a6a" stroke="#6a6a6a"/>
<path class="dl d1" d="M294.7 510.1L265.9 492.4"/>
<polygon points="457.5,128.7 445.0,126.1 445.4,117.8 458.0,120.4" fill="#747474" stroke="#747474"/>
<polygon points="457.5,128.7 486.9,120.0 487.5,111.9 458.0,120.4" fill="#808080" stroke="#808080"/>
<polygon points="458.0,120.4 487.5,111.9 475.0,109.5 445.4,117.8" fill="#6a6a6a" stroke="#6a6a6a"/>
<path class="dl d3" d="M451.7 119.1L481.2 110.7"/>
<polygon points="167.6,342.4 159.7,338.3 157.7,321.8 165.7,325.7" fill="#7b7b7b" stroke="#7b7b7b"/>
<polygon points="167.6,342.4 188.4,333.8 186.8,317.4 165.7,325.7" fill="#8b8b8b" stroke="#8b8b8b"/>
<polygon points="165.7,325.7 186.8,317.4 178.8,313.6 157.7,321.8" fill="#6a6a6a" stroke="#6a6a6a"/>
<polygon points="410.5,314.4 399.0,310.0 399.2,303.0 410.8,307.3" fill="#747474" stroke="#747474"/>
<polygon points="410.5,314.4 419.2,310.2 419.4,303.2 410.8,307.3" fill="#808080" stroke="#808080"/>
<polygon points="410.8,307.3 419.4,303.2 407.9,298.9 399.2,303.0" fill="#6a6a6a" stroke="#6a6a6a"/>
<path class="dl d2" d="M405.0 305.2L413.7 301.0"/>
<polygon points="467.2,150.3 457.2,148.0 458.2,128.9 468.4,131.1" fill="#7e7e7e" stroke="#7e7e7e"/>
<polygon points="467.2,150.3 496.3,140.8 497.7,122.1 468.4,131.1" fill="#8c8c8c" stroke="#8c8c8c"/>
<polygon points="468.4,131.1 497.7,122.1 487.6,120.1 458.2,128.9" fill="#777" stroke="#777"/>
<polygon points="379.0,127.6 346.7,120.2 346.7,112.2 379.1,119.3" fill="#747474" stroke="#747474"/>
<polygon points="379.0,127.6 388.9,124.8 389.1,116.7 379.1,119.3" fill="#808080" stroke="#808080"/>
<polygon points="379.1,119.3 389.1,116.7 356.7,109.7 346.7,112.2" fill="#6a6a6a" stroke="#6a6a6a"/>
<path class="dl d3" d="M384.1 118.0L351.7 110.9"/>
<polygon points="302.8,524.8 292.2,518.2 291.9,511.9 302.6,518.5" fill="#747474" stroke="#747474"/>
<polygon points="302.8,524.8 336.5,503.0 336.4,496.8 302.6,518.5" fill="#808080" stroke="#808080"/>
<polygon points="302.6,518.5 336.4,496.8 325.8,490.6 291.9,511.9" fill="#6a6a6a" stroke="#6a6a6a"/>
<path class="dl d1" d="M297.2 515.2L331.1 493.7"/>
<polygon points="312.4,545.2 303.9,539.8 303.4,525.2 312.0,530.6" fill="#7e7e7e" stroke="#7e7e7e"/>
<polygon points="312.4,545.2 345.7,522.7 345.6,508.4 312.0,530.6" fill="#8c8c8c" stroke="#8c8c8c"/>
<polygon points="312.0,530.6 345.6,508.4 337.1,503.3 303.4,525.2" fill="#777" stroke="#777"/>
<polygon points="202.7,130.6 192.8,127.9 192.1,119.6 202.1,122.3" fill="#747474" stroke="#747474"/>
<polygon points="202.7,130.6 241.2,121.7 240.7,113.6 202.1,122.3" fill="#808080" stroke="#808080"/>
<polygon points="202.1,122.3 240.7,113.6 230.7,111.1 192.1,119.6" fill="#6a6a6a" stroke="#6a6a6a"/>
<path class="dl d3" d="M197.1 120.9L235.7 112.4"/>
<polygon points="288.9,548.9 253.3,525.5 252.3,511.1 288.3,534.2" fill="#7e7e7e" stroke="#7e7e7e"/>
<polygon points="288.9,548.9 297.7,543.1 297.2,528.5 288.3,534.2" fill="#8c8c8c" stroke="#8c8c8c"/>
<polygon points="288.3,534.2 297.2,528.5 261.2,505.7 252.3,511.1" fill="#777" stroke="#777"/>
<polygon points="469.2,131.2 457.5,128.7 458.0,120.4 469.7,122.8" fill="#747474" stroke="#747474"/>
<polygon points="469.2,131.2 498.4,122.3 499.1,114.1 469.7,122.8" fill="#808080" stroke="#808080"/>
<polygon points="469.7,122.8 499.1,114.1 487.5,111.9 458.0,120.4" fill="#6a6a6a" stroke="#6a6a6a"/>
<polygon points="271.9,531.1 243.2,512.4 242.7,506.1 271.5,524.7" fill="#747474" stroke="#747474"/>
<polygon points="271.9,531.1 292.2,518.2 291.9,511.9 271.5,524.7" fill="#808080" stroke="#808080"/>
<polygon points="271.5,524.7 291.9,511.9 263.1,494.0 242.7,506.1" fill="#6a6a6a" stroke="#6a6a6a"/>
<polygon points="165.7,325.7 157.7,321.8 156.8,314.6 164.9,318.5" fill="#7b7b7b" stroke="#7b7b7b"/>
<polygon points="165.7,325.7 186.8,317.4 186.2,310.2 164.9,318.5" fill="#8b8b8b" stroke="#8b8b8b"/>
<polygon points="164.9,318.5 186.2,310.2 178.1,306.4 156.8,314.6" fill="#6a6a6a" stroke="#6a6a6a"/>
<polygon points="412.0,339.1 402.1,335.1 402.5,318.6 412.6,322.6" fill="#7b7b7b" stroke="#7b7b7b"/>
<polygon points="412.0,339.1 428.2,330.7 429.0,314.3 412.6,322.6" fill="#8b8b8b" stroke="#8b8b8b"/>
<polygon points="412.6,322.6 429.0,314.3 419.0,310.5 402.5,318.6" fill="#6a6a6a" stroke="#6a6a6a"/>
<polygon points="312.6,531.0 302.8,524.8 302.6,518.5 312.4,524.6" fill="#747474" stroke="#747474"/>
<polygon points="312.6,531.0 346.3,508.7 346.2,502.5 312.4,524.6" fill="#808080" stroke="#808080"/>
<polygon points="312.4,524.6 346.2,502.5 336.4,496.8 302.6,518.5" fill="#6a6a6a" stroke="#6a6a6a"/>
<polygon points="212.9,152.3 204.9,150.0 203.3,130.8 211.4,133.0" fill="#7e7e7e" stroke="#7e7e7e"/>
<polygon points="212.9,152.3 250.9,142.7 249.9,123.9 211.4,133.0" fill="#8c8c8c" stroke="#8c8c8c"/>
<polygon points="211.4,133.0 249.9,123.9 241.8,121.8 203.3,130.8" fill="#777" stroke="#777"/>
<polygon points="401.7,318.8 390.2,314.3 390.4,307.2 401.9,311.6" fill="#747474" stroke="#747474"/>
<polygon points="401.7,318.8 410.5,314.4 410.8,307.3 401.9,311.6" fill="#808080" stroke="#808080"/>
<polygon points="401.9,311.6 410.8,307.3 399.2,303.0 390.4,307.2" fill="#6a6a6a" stroke="#6a6a6a"/>
<path class="dl d2" d="M396.1 309.4L405.0 305.2"/>
<polygon points="482.3,134.0 469.2,131.2 469.7,122.8 482.8,125.6" fill="#747474" stroke="#747474"/>
<polygon points="482.3,134.0 511.4,124.9 512.0,116.7 482.8,125.6" fill="#808080" stroke="#808080"/>
<polygon points="482.8,125.6 512.0,116.7 499.1,114.1 469.7,122.8" fill="#6a6a6a" stroke="#6a6a6a"/>
<path class="dl d3" d="M476.2 124.2L505.5 115.4"/>
<polygon points="212.0,133.1 202.7,130.6 202.1,122.3 211.3,124.7" fill="#747474" stroke="#747474"/>
<polygon points="212.0,133.1 250.5,124.0 250.1,115.9 211.3,124.7" fill="#808080" stroke="#808080"/>
<polygon points="211.3,124.7 250.1,115.9 240.7,113.6 202.1,122.3" fill="#6a6a6a" stroke="#6a6a6a"/>
<polygon points="412.6,322.6 402.5,318.6 402.7,311.5 412.8,315.4" fill="#7b7b7b" stroke="#7b7b7b"/>
<polygon points="412.6,322.6 429.0,314.3 429.4,307.2 412.8,315.4" fill="#8b8b8b" stroke="#8b8b8b"/>
<polygon points="412.8,315.4 429.4,307.2 419.3,303.5 402.7,311.5" fill="#6a6a6a" stroke="#6a6a6a"/>
<polygon points="369.0,151.5 329.4,141.6 329.2,122.9 369.2,132.2" fill="#7e7e7e" stroke="#7e7e7e"/>
<polygon points="369.0,151.5 377.3,149.1 377.6,129.9 369.2,132.2" fill="#8c8c8c" stroke="#8c8c8c"/>
<polygon points="369.2,132.2 377.6,129.9 337.6,120.8 329.2,122.9" fill="#777" stroke="#777"/>
<polygon points="327.3,125.2 296.8,118.0 296.6,110.0 327.2,117.0" fill="#747474" stroke="#747474"/>
<polygon points="327.3,125.2 346.7,120.2 346.7,112.2 327.2,117.0" fill="#808080" stroke="#808080"/>
<polygon points="327.2,117.0 346.7,112.2 316.1,105.5 296.6,110.0" fill="#6a6a6a" stroke="#6a6a6a"/>
<polygon points="266.0,534.8 237.3,515.9 236.8,509.6 265.6,528.4" fill="#747474" stroke="#747474"/>
<polygon points="266.0,534.8 271.9,531.1 271.5,524.7 265.6,528.4" fill="#808080" stroke="#808080"/>
<polygon points="265.6,528.4 271.5,524.7 242.7,506.1 236.8,509.6" fill="#6a6a6a" stroke="#6a6a6a"/>
<path class="dl d1" d="M268.6 526.6L239.8 507.9"/>
<polygon points="292.1,374.8 188.3,324.4 188.3,324.2 292.1,374.7" fill="#a1a1a5" fill-opacity="0.72"/>
<polygon points="292.1,374.8 398.1,322.6 398.1,322.4 292.1,374.7" fill="#a1a1a5" fill-opacity="0.72"/>
<polygon points="292.1,374.7 398.1,322.4 294.5,281.5 188.3,324.2" fill="#a1a1a5" fill-opacity="0.72"/>
<polygon points="269.0,292.8 259.5,288.9 259.1,282.1 268.7,286.0" fill="#747474" stroke="#747474"/>
<polygon points="269.0,292.8 301.6,279.7 301.4,273.0 268.7,286.0" fill="#808080" stroke="#808080"/>
<polygon points="268.7,286.0 301.4,273.0 291.8,269.4 259.1,282.1" fill="#6a6a6a" stroke="#6a6a6a"/>
<path class="dl d2" d="M263.9 284.0L296.6 271.2"/>
<polygon points="319.9,294.7 291.9,283.6 291.7,276.9 319.8,287.9" fill="#747474" stroke="#747474"/>
<polygon points="319.9,294.7 329.5,290.6 329.5,283.8 319.8,287.9" fill="#808080" stroke="#808080"/>
<polygon points="319.8,287.9 329.5,283.8 301.4,273.0 291.7,276.9" fill="#6a6a6a" stroke="#6a6a6a"/>
<path class="dl d2" d="M324.6 285.8L296.6 275.0"/>
<polygon points="234.3,306.8 224.8,302.6 224.2,295.6 233.8,299.8" fill="#747474" stroke="#747474"/>
<polygon points="234.3,306.8 269.0,292.8 268.7,286.0 233.8,299.8" fill="#808080" stroke="#808080"/>
<polygon points="233.8,299.8 268.7,286.0 259.1,282.1 224.2,295.6" fill="#6a6a6a" stroke="#6a6a6a"/>
<path class="dl d2" d="M229.0 297.7L263.9 284.0"/>
<polygon points="349.4,306.5 319.9,294.7 319.8,287.9 349.4,299.5" fill="#747474" stroke="#747474"/>
<polygon points="349.4,306.5 359.0,302.1 359.1,295.2 349.4,299.5" fill="#808080" stroke="#808080"/>
<polygon points="349.4,299.5 359.1,295.2 329.5,283.8 319.8,287.9" fill="#6a6a6a" stroke="#6a6a6a"/>
<path class="dl d2" d="M354.3 297.3L324.6 285.8"/>
<polygon points="197.1,321.8 187.7,317.3 187.0,310.1 196.5,314.6" fill="#747474" stroke="#747474"/>
<polygon points="197.1,321.8 234.3,306.8 233.8,299.8 196.5,314.6" fill="#808080" stroke="#808080"/>
<polygon points="196.5,314.6 233.8,299.8 224.2,295.6 187.0,310.1" fill="#6a6a6a" stroke="#6a6a6a"/>
<path class="dl d2" d="M191.7 312.4L229.0 297.7"/>
<polygon points="380.6,318.9 349.4,306.5 349.4,299.5 380.8,311.7" fill="#747474" stroke="#747474"/>
<polygon points="380.6,318.9 390.2,314.3 390.4,307.2 380.8,311.7" fill="#808080" stroke="#808080"/>
<polygon points="380.8,311.7 390.4,307.2 359.1,295.2 349.4,299.5" fill="#6a6a6a" stroke="#6a6a6a"/>
<path class="dl d2" d="M385.6 309.4L354.3 297.3"/>
<polygon points="433.1,323.1 421.2,318.5 421.4,311.4 433.4,315.9" fill="#747474" stroke="#747474"/>
<polygon points="433.1,323.1 441.7,318.7 442.0,311.5 433.4,315.9" fill="#808080" stroke="#808080"/>
<polygon points="433.4,315.9 442.0,311.5 430.1,307.1 421.4,311.4" fill="#6a6a6a" stroke="#6a6a6a"/>
<path class="dl d2" d="M427.4 313.6L436.0 309.3"/>
<polygon points="359.7,132.8 327.3,125.2 327.2,117.0 359.7,124.4" fill="#747474" stroke="#747474"/>
<polygon points="359.7,132.8 379.0,127.6 379.1,119.3 359.7,124.4" fill="#808080" stroke="#808080"/>
<polygon points="359.7,124.4 379.1,119.3 346.7,112.2 327.2,117.0" fill="#6a6a6a" stroke="#6a6a6a"/>
<polygon points="323.6,537.8 312.6,531.0 312.4,524.6 323.5,531.4" fill="#747474" stroke="#747474"/>
<polygon points="323.6,537.8 357.2,515.2 357.3,508.9 323.5,531.4" fill="#808080" stroke="#808080"/>
<polygon points="323.5,531.4 357.3,508.9 346.2,502.5 312.4,524.6" fill="#6a6a6a" stroke="#6a6a6a"/>
<path class="dl d1" d="M317.9 528.0L351.7 505.7"/>
<polygon points="292.7,531.3 282.1,524.6 281.8,518.2 292.5,525.0" fill="#747474" stroke="#747474"/>
<polygon points="292.7,531.3 302.8,524.8 302.6,518.5 292.5,525.0" fill="#808080" stroke="#808080"/>
<polygon points="292.5,525.0 302.6,518.5 291.9,511.9 281.8,518.2" fill="#6a6a6a" stroke="#6a6a6a"/>
<path class="dl d1" d="M287.1 521.6L297.2 515.2"/>
<polygon points="293.5,558.0 284.9,552.3 284.1,537.6 292.9,543.3" fill="#7b7b7b" stroke="#7b7b7b"/>
<polygon points="293.5,558.0 311.3,546.0 311.0,531.3 292.9,543.3" fill="#8b8b8b" stroke="#8b8b8b"/>
<polygon points="292.9,543.3 311.0,531.3 302.2,525.8 284.1,537.6" fill="#6a6a6a" stroke="#6a6a6a"/>
<polygon points="207.0,357.4 173.5,340.2 171.7,323.6 205.5,340.3" fill="#7e7e7e" stroke="#7e7e7e"/>
<polygon points="207.0,357.4 216.8,353.1 215.4,336.2 205.5,340.3" fill="#8c8c8c" stroke="#8c8c8c"/>
<polygon points="205.5,340.3 215.4,336.2 181.5,319.7 171.7,323.6" fill="#777" stroke="#777"/>
<polygon points="186.1,326.3 176.6,321.6 175.8,314.5 185.3,319.0" fill="#747474" stroke="#747474"/>
<polygon points="186.1,326.3 197.1,321.8 196.5,314.6 185.3,319.0" fill="#808080" stroke="#808080"/>
<polygon points="185.3,319.0 196.5,314.6 187.0,310.1 175.8,314.5" fill="#6a6a6a" stroke="#6a6a6a"/>
<path class="dl d2" d="M180.6 316.7L191.7 312.4"/>
<polygon points="168.3,333.4 154.6,326.5 153.8,319.3 167.5,326.1" fill="#747474" stroke="#747474"/>
<polygon points="168.3,333.4 186.1,326.3 185.3,319.0 167.5,326.1" fill="#808080" stroke="#808080"/>
<polygon points="167.5,326.1 185.3,319.0 171.6,312.4 153.8,319.3" fill="#6a6a6a" stroke="#6a6a6a"/>
<polygon points="424.3,327.6 412.4,322.9 412.6,315.7 424.6,320.3" fill="#747474" stroke="#747474"/>
<polygon points="424.3,327.6 433.1,323.1 433.4,315.9 424.6,320.3" fill="#808080" stroke="#808080"/>
<polygon points="424.6,320.3 433.4,315.9 421.4,311.4 412.6,315.7" fill="#6a6a6a" stroke="#6a6a6a"/>
<path class="dl d2" d="M418.6 318.0L427.4 313.6"/>
<polygon points="225.0,335.1 197.1,321.8 196.5,314.6 224.4,327.8" fill="#747474" stroke="#747474"/>
<polygon points="225.0,335.1 231.1,332.5 230.6,325.2 224.4,327.8" fill="#808080" stroke="#808080"/>
<polygon points="224.4,327.8 230.6,325.2 202.7,312.2 196.5,314.6" fill="#6a6a6a" stroke="#6a6a6a"/>
<path class="dl d2" d="M227.5 326.5L199.6 313.4"/>
<polygon points="413.3,135.3 379.0,127.6 379.1,119.3 413.6,126.8" fill="#747474" stroke="#747474"/>
<polygon points="413.3,135.3 423.1,132.4 423.5,124.0 413.6,126.8" fill="#808080" stroke="#808080"/>
<polygon points="413.6,126.8 423.5,124.0 389.1,116.7 379.1,119.3" fill="#6a6a6a" stroke="#6a6a6a"/>
<path class="dl d3" d="M418.5 125.4L384.1 118.0"/>
<polygon points="281.5,545.0 266.0,534.8 265.6,528.4 281.2,538.5" fill="#747474" stroke="#747474"/>
<polygon points="281.5,545.0 297.6,534.4 297.4,528.1 281.2,538.5" fill="#808080" stroke="#808080"/>
<polygon points="281.2,538.5 297.4,528.1 281.8,518.2 265.6,528.4" fill="#6a6a6a" stroke="#6a6a6a"/>
<polygon points="161.4,140.2 151.5,137.3 150.6,128.7 160.5,131.6" fill="#747474" stroke="#747474"/>
<polygon points="161.4,140.2 202.7,130.6 202.1,122.3 160.5,131.6" fill="#808080" stroke="#808080"/>
<polygon points="160.5,131.6 202.1,122.3 192.1,119.6 150.6,128.7" fill="#6a6a6a" stroke="#6a6a6a"/>
<path class="dl d3" d="M155.5 130.1L197.1 120.9"/>
<polygon points="292.9,543.3 284.1,537.6 283.7,531.2 292.6,536.9" fill="#7b7b7b" stroke="#7b7b7b"/>
<polygon points="292.9,543.3 311.0,531.3 310.9,524.9 292.6,536.9" fill="#8b8b8b" stroke="#8b8b8b"/>
<polygon points="292.6,536.9 310.9,524.9 302.0,519.5 283.7,531.2" fill="#6a6a6a" stroke="#6a6a6a"/>
<polygon points="369.5,334.6 357.9,329.8 357.9,322.5 369.5,327.3" fill="#747474" stroke="#747474"/>
<polygon points="369.5,334.6 401.7,318.8 401.9,311.6 369.5,327.3" fill="#808080" stroke="#808080"/>
<polygon points="369.5,327.3 401.9,311.6 390.4,307.2 357.9,322.5" fill="#6a6a6a" stroke="#6a6a6a"/>
<path class="dl d2" d="M363.7 324.9L396.1 309.4"/>
<polygon points="426.0,138.2 413.3,135.3 413.6,126.8 426.3,129.6" fill="#747474" stroke="#747474"/>
<polygon points="426.0,138.2 457.5,128.7 458.0,120.4 426.3,129.6" fill="#808080" stroke="#808080"/>
<polygon points="426.3,129.6 458.0,120.4 445.4,117.8 413.6,126.8" fill="#6a6a6a" stroke="#6a6a6a"/>
<path class="dl d3" d="M419.9 128.2L451.7 119.1"/>
<polygon points="379.2,355.8 370.0,351.8 370.1,334.9 379.5,338.8" fill="#7e7e7e" stroke="#7e7e7e"/>
<polygon points="379.2,355.8 411.1,339.2 411.7,322.7 379.5,338.8" fill="#8c8c8c" stroke="#8c8c8c"/>
<polygon points="379.5,338.8 411.7,322.7 402.4,319.0 370.1,334.9" fill="#777" stroke="#777"/>
<polygon points="313.6,544.6 302.5,537.6 302.3,531.2 313.4,538.2" fill="#747474" stroke="#747474"/>
<polygon points="313.6,544.6 323.6,537.8 323.5,531.4 313.4,538.2" fill="#808080" stroke="#808080"/>
<polygon points="313.4,538.2 323.5,531.4 312.4,524.6 302.3,531.2" fill="#6a6a6a" stroke="#6a6a6a"/>
<path class="dl d1" d="M307.8 534.7L317.9 528.0"/>
<polygon points="164.9,318.5 156.8,314.6 138.8,166.2 147.8,169.2" fill="#7b7b7b" stroke="#7b7b7b"/>
<polygon points="164.9,318.5 186.2,310.2 172.4,162.9 147.8,169.2" fill="#8b8b8b" stroke="#8b8b8b"/>
<polygon points="147.8,169.2 172.4,162.9 163.4,160.0 138.8,166.2" fill="#6a6a6a" stroke="#6a6a6a"/>
<polygon points="171.9,162.7 164.0,160.2 162.0,140.4 170.0,142.7" fill="#7e7e7e" stroke="#7e7e7e"/>
<polygon points="171.9,162.7 212.9,152.3 211.4,133.0 170.0,142.7" fill="#8c8c8c" stroke="#8c8c8c"/>
<polygon points="170.0,142.7 211.4,133.0 203.3,130.8 162.0,140.4" fill="#777" stroke="#777"/>
<polygon points="436.1,160.5 425.9,158.1 426.7,138.4 437.0,140.7" fill="#7e7e7e" stroke="#7e7e7e"/>
<polygon points="436.1,160.5 467.2,150.3 468.4,131.1 437.0,140.7" fill="#8c8c8c" stroke="#8c8c8c"/>
<polygon points="437.0,140.7 468.4,131.1 458.2,128.9 426.7,138.4" fill="#777" stroke="#777"/>
<polygon points="380.2,339.1 369.5,334.6 369.5,327.3 380.3,331.7" fill="#747474" stroke="#747474"/>
<polygon points="380.2,339.1 412.4,322.9 412.6,315.7 380.3,331.7" fill="#808080" stroke="#808080"/>
<polygon points="380.3,331.7 412.6,315.7 401.9,311.6 369.5,327.3" fill="#6a6a6a" stroke="#6a6a6a"/>
<polygon points="170.5,142.9 161.4,140.2 160.5,131.6 169.7,134.2" fill="#747474" stroke="#747474"/>
<polygon points="170.5,142.9 212.0,133.1 211.3,124.7 169.7,134.2" fill="#808080" stroke="#808080"/>
<polygon points="169.7,134.2 211.3,124.7 202.1,122.3 160.5,131.6" fill="#6a6a6a" stroke="#6a6a6a"/>
<polygon points="437.7,140.9 426.0,138.2 426.3,129.6 438.1,132.2" fill="#747474" stroke="#747474"/>
<polygon points="437.7,140.9 469.2,131.2 469.7,122.8 438.1,132.2" fill="#808080" stroke="#808080"/>
<polygon points="438.1,132.2 469.7,122.8 458.0,120.4 426.3,129.6" fill="#6a6a6a" stroke="#6a6a6a"/>
<polygon points="412.8,315.4 402.7,311.5 406.4,163.9 418.0,166.9" fill="#7b7b7b" stroke="#7b7b7b"/>
<polygon points="412.8,315.4 429.4,307.2 436.7,160.7 418.0,166.9" fill="#8b8b8b" stroke="#8b8b8b"/>
<polygon points="418.0,166.9 436.7,160.7 425.2,157.9 406.4,163.9" fill="#6a6a6a" stroke="#6a6a6a"/>
<polygon points="411.7,162.2 369.0,151.5 369.2,132.2 412.3,142.3" fill="#7e7e7e" stroke="#7e7e7e"/>
<polygon points="411.7,162.2 419.9,159.6 420.7,139.8 412.3,142.3" fill="#8c8c8c" stroke="#8c8c8c"/>
<polygon points="412.3,142.3 420.7,139.8 377.6,129.9 369.2,132.2" fill="#777" stroke="#777"/>
<polygon points="394.1,140.9 359.7,132.8 359.7,124.4 394.3,132.3" fill="#747474" stroke="#747474"/>
<polygon points="394.1,140.9 413.3,135.3 413.6,126.8 394.3,132.3" fill="#808080" stroke="#808080"/>
<polygon points="394.3,132.3 413.6,126.8 379.1,119.3 359.7,124.4" fill="#6a6a6a" stroke="#6a6a6a"/>
<polygon points="149.0,143.1 139.2,140.1 138.2,131.5 148.0,134.4" fill="#747474" stroke="#747474"/>
<polygon points="149.0,143.1 161.4,140.2 160.5,131.6 148.0,134.4" fill="#808080" stroke="#808080"/>
<polygon points="148.0,134.4 160.5,131.6 150.6,128.7 138.2,131.5" fill="#6a6a6a" stroke="#6a6a6a"/>
<path class="dl d3" d="M143.1 132.9L155.5 130.1"/>
<polygon points="392.2,344.1 380.2,339.1 380.3,331.7 392.4,336.6" fill="#747474" stroke="#747474"/>
<polygon points="392.2,344.1 424.3,327.6 424.6,320.3 392.4,336.6" fill="#808080" stroke="#808080"/>
<polygon points="392.4,336.6 424.6,320.3 412.6,315.7 380.3,331.7" fill="#6a6a6a" stroke="#6a6a6a"/>
<path class="dl d2" d="M386.3 334.1L418.6 318.0"/>
<polygon points="450.9,143.9 437.7,140.9 438.1,132.2 451.4,135.1" fill="#747474" stroke="#747474"/>
<polygon points="450.9,143.9 482.3,134.0 482.8,125.6 451.4,135.1" fill="#808080" stroke="#808080"/>
<polygon points="451.4,135.1 482.8,125.6 469.7,122.8 438.1,132.2" fill="#6a6a6a" stroke="#6a6a6a"/>
<path class="dl d3" d="M444.7 133.7L476.2 124.2"/>
<polygon points="416.5,141.0 403.8,138.1 404.0,129.5 416.8,132.4" fill="#747474" stroke="#747474"/>
<polygon points="416.5,141.0 426.0,138.2 426.3,129.6 416.8,132.4" fill="#808080" stroke="#808080"/>
<polygon points="416.8,132.4 426.3,129.6 413.6,126.8 404.0,129.5" fill="#6a6a6a" stroke="#6a6a6a"/>
<path class="dl d3" d="M410.4 130.9L419.9 128.2"/>
<polygon points="254.5,349.3 225.0,335.1 224.4,327.8 254.1,341.8" fill="#747474" stroke="#747474"/>
<polygon points="254.5,349.3 260.7,346.5 260.3,339.0 254.1,341.8" fill="#808080" stroke="#808080"/>
<polygon points="254.1,341.8 260.3,339.0 230.6,325.2 224.4,327.8" fill="#6a6a6a" stroke="#6a6a6a"/>
<path class="dl d2" d="M257.2 340.4L227.5 326.5"/>
<polygon points="147.8,169.2 138.8,166.2 136.4,146.0 145.4,148.8" fill="#7b7b7b" stroke="#7b7b7b"/>
<polygon points="147.8,169.2 172.4,162.9 170.5,142.9 145.4,148.8" fill="#8b8b8b" stroke="#8b8b8b"/>
<polygon points="145.4,148.8 170.5,142.9 161.4,140.2 136.4,146.0" fill="#6a6a6a" stroke="#6a6a6a"/>
<polygon points="243.2,375.8 207.0,357.4 205.5,340.3 242.0,358.3" fill="#7e7e7e" stroke="#7e7e7e"/>
<polygon points="243.2,375.8 252.9,371.2 251.9,353.9 242.0,358.3" fill="#8c8c8c" stroke="#8c8c8c"/>
<polygon points="242.0,358.3 251.9,353.9 215.4,336.2 205.5,340.3" fill="#777" stroke="#777"/>
<polygon points="202.5,344.7 174.7,330.8 174.0,323.5 201.8,337.3" fill="#747474" stroke="#747474"/>
<polygon points="202.5,344.7 225.0,335.1 224.4,327.8 201.8,337.3" fill="#808080" stroke="#808080"/>
<polygon points="201.8,337.3 224.4,327.8 196.5,314.6 174.0,323.5" fill="#6a6a6a" stroke="#6a6a6a"/>
<polygon points="196.0,347.5 168.3,333.4 167.5,326.1 195.2,340.0" fill="#747474" stroke="#747474"/>
<polygon points="196.0,347.5 202.5,344.7 201.8,337.3 195.2,340.0" fill="#808080" stroke="#808080"/>
<polygon points="195.2,340.0 201.8,337.3 174.0,323.5 167.5,326.1" fill="#6a6a6a" stroke="#6a6a6a"/>
<path class="dl d2" d="M198.5 338.6L170.7 324.8"/>
<polygon points="145.4,148.8 136.4,146.0 135.3,137.2 144.4,140.0" fill="#7b7b7b" stroke="#7b7b7b"/>
<polygon points="145.4,148.8 170.5,142.9 169.7,134.2 144.4,140.0" fill="#8b8b8b" stroke="#8b8b8b"/>
<polygon points="144.4,140.0 169.7,134.2 160.5,131.6 135.3,137.2" fill="#6a6a6a" stroke="#6a6a6a"/>
<polygon points="334.8,351.6 323.2,346.4 323.1,338.9 334.8,344.1" fill="#747474" stroke="#747474"/>
<polygon points="334.8,351.6 369.5,334.6 369.5,327.3 334.8,344.1" fill="#808080" stroke="#808080"/>
<polygon points="334.8,344.1 369.5,327.3 357.9,322.5 323.1,338.9" fill="#6a6a6a" stroke="#6a6a6a"/>
<path class="dl d2" d="M328.9 341.5L363.7 324.9"/>
<polygon points="345.0,373.5 335.7,369.2 335.5,351.9 344.9,356.1" fill="#7e7e7e" stroke="#7e7e7e"/>
<polygon points="345.0,373.5 379.2,355.8 379.5,338.8 344.9,356.1" fill="#8c8c8c" stroke="#8c8c8c"/>
<polygon points="344.9,356.1 379.5,338.8 370.1,334.9 335.5,351.9" fill="#777" stroke="#777"/>
<polygon points="406.8,143.9 394.1,140.9 394.3,132.3 407.1,135.2" fill="#747474" stroke="#747474"/>
<polygon points="406.8,143.9 416.5,141.0 416.8,132.4 407.1,135.2" fill="#808080" stroke="#808080"/>
<polygon points="407.1,135.2 416.8,132.4 404.0,129.5 394.3,132.3" fill="#6a6a6a" stroke="#6a6a6a"/>
<path class="dl d3" d="M400.7 133.7L410.4 130.9"/>
<polygon points="418.0,166.9 406.4,163.9 406.9,143.9 418.7,146.7" fill="#7b7b7b" stroke="#7b7b7b"/>
<polygon points="418.0,166.9 436.7,160.7 437.7,140.9 418.7,146.7" fill="#8b8b8b" stroke="#8b8b8b"/>
<polygon points="418.7,146.7 437.7,140.9 425.9,138.2 406.9,143.9" fill="#6a6a6a" stroke="#6a6a6a"/>
<polygon points="231.9,359.5 202.5,344.7 201.8,337.3 231.4,351.8" fill="#747474" stroke="#747474"/>
<polygon points="231.9,359.5 254.5,349.3 254.1,341.8 231.4,351.8" fill="#808080" stroke="#808080"/>
<polygon points="231.4,351.8 254.1,341.8 224.4,327.8 201.8,337.3" fill="#6a6a6a" stroke="#6a6a6a"/>
<polygon points="418.7,146.7 406.9,143.9 407.1,135.2 419.0,137.9" fill="#7b7b7b" stroke="#7b7b7b"/>
<polygon points="418.7,146.7 437.7,140.9 438.1,132.2 419.0,137.9" fill="#8b8b8b" stroke="#8b8b8b"/>
<polygon points="419.0,137.9 438.1,132.2 426.3,129.6 407.1,135.2" fill="#6a6a6a" stroke="#6a6a6a"/>
<polygon points="345.6,356.4 334.8,351.6 334.8,344.1 345.6,348.8" fill="#747474" stroke="#747474"/>
<polygon points="345.6,356.4 380.2,339.1 380.3,331.7 345.6,348.8" fill="#808080" stroke="#808080"/>
<polygon points="345.6,348.8 380.3,331.7 369.5,327.3 334.8,344.1" fill="#6a6a6a" stroke="#6a6a6a"/>
<polygon points="441.6,146.8 428.3,143.7 428.7,135.0 442.0,138.0" fill="#747474" stroke="#747474"/>
<polygon points="441.6,146.8 450.9,143.9 451.4,135.1 442.0,138.0" fill="#808080" stroke="#808080"/>
<polygon points="442.0,138.0 451.4,135.1 438.1,132.2 428.7,135.0" fill="#6a6a6a" stroke="#6a6a6a"/>
<path class="dl d3" d="M435.3 136.5L444.7 133.7"/>
<polygon points="285.1,184.9 171.2,150.3 171.2,150.1 285.0,184.7" fill="#a1a1a5" fill-opacity="0.72"/>
<polygon points="285.1,184.9 402.9,149.1 402.9,148.9 285.0,184.7" fill="#a1a1a5" fill-opacity="0.72"/>
<polygon points="285.0,184.7 402.9,148.9 289.1,121.6 171.2,150.1" fill="#a1a1a5" fill-opacity="0.72"/>
<polygon points="260.9,126.7 250.5,124.0 250.1,115.9 260.5,118.4" fill="#747474" stroke="#747474"/>
<polygon points="260.9,126.7 296.8,118.0 296.6,110.0 260.5,118.4" fill="#808080" stroke="#808080"/>
<polygon points="260.5,118.4 296.6,110.0 286.1,107.6 250.1,115.9" fill="#6a6a6a" stroke="#6a6a6a"/>
<path class="dl d3" d="M255.2 117.1L291.3 108.8"/>
<polygon points="316.7,127.9 286.2,120.6 285.9,112.5 316.5,119.6" fill="#747474" stroke="#747474"/>
<polygon points="316.7,127.9 327.3,125.2 327.2,117.0 316.5,119.6" fill="#808080" stroke="#808080"/>
<polygon points="316.5,119.6 327.2,117.0 296.6,110.0 285.9,112.5" fill="#6a6a6a" stroke="#6a6a6a"/>
<path class="dl d3" d="M321.9 118.3L291.3 111.3"/>
<polygon points="222.3,135.9 212.0,133.1 211.3,124.7 221.8,127.4" fill="#747474" stroke="#747474"/>
<polygon points="222.3,135.9 260.9,126.7 260.5,118.4 221.8,127.4" fill="#808080" stroke="#808080"/>
<polygon points="221.8,127.4 260.5,118.4 250.1,115.9 211.3,124.7" fill="#6a6a6a" stroke="#6a6a6a"/>
<path class="dl d3" d="M216.5 126.1L255.2 117.1"/>
<polygon points="349.1,135.7 316.7,127.9 316.5,119.6 349.1,127.2" fill="#747474" stroke="#747474"/>
<polygon points="349.1,135.7 359.7,132.8 359.7,124.4 349.1,127.2" fill="#808080" stroke="#808080"/>
<polygon points="349.1,127.2 359.7,124.4 327.2,117.0 316.5,119.6" fill="#6a6a6a" stroke="#6a6a6a"/>
<path class="dl d3" d="M354.4 125.8L321.9 118.3"/>
<polygon points="180.8,145.9 170.5,142.9 169.7,134.2 180.0,137.2" fill="#747474" stroke="#747474"/>
<polygon points="180.8,145.9 222.3,135.9 221.8,127.4 180.0,137.2" fill="#808080" stroke="#808080"/>
<polygon points="180.0,137.2 221.8,127.4 211.3,124.7 169.7,134.2" fill="#6a6a6a" stroke="#6a6a6a"/>
<path class="dl d3" d="M174.8 135.7L216.5 126.1"/>
<polygon points="383.6,144.0 349.1,135.7 349.1,127.2 383.7,135.2" fill="#747474" stroke="#747474"/>
<polygon points="383.6,144.0 394.1,140.9 394.3,132.3 383.7,135.2" fill="#808080" stroke="#808080"/>
<polygon points="383.7,135.2 394.3,132.3 359.7,124.4 349.1,127.2" fill="#6a6a6a" stroke="#6a6a6a"/>
<path class="dl d3" d="M389.0 133.7L354.4 125.8"/>
<polygon points="292.6,536.9 283.7,531.2 276.8,398.9 286.9,404.1" fill="#7b7b7b" stroke="#7b7b7b"/>
<polygon points="292.6,536.9 310.9,524.9 307.9,393.2 286.9,404.1" fill="#8b8b8b" stroke="#8b8b8b"/>
<polygon points="286.9,404.1 307.9,393.2 297.8,388.2 276.8,398.9" fill="#6a6a6a" stroke="#6a6a6a"/>
<polygon points="225.4,362.4 196.0,347.5 195.2,340.0 224.8,354.8" fill="#747474" stroke="#747474"/>
<polygon points="225.4,362.4 231.9,359.5 231.4,351.8 224.8,354.8" fill="#808080" stroke="#808080"/>
<polygon points="224.8,354.8 231.4,351.8 201.8,337.3 195.2,340.0" fill="#6a6a6a" stroke="#6a6a6a"/>
<path class="dl d2" d="M228.1 353.3L198.5 338.6"/>
<polygon points="357.7,361.8 345.6,356.4 345.6,348.8 357.7,354.1" fill="#747474" stroke="#747474"/>
<polygon points="357.7,361.8 392.2,344.1 392.4,336.6 357.7,354.1" fill="#808080" stroke="#808080"/>
<polygon points="357.7,354.1 392.4,336.6 380.3,331.7 345.6,348.8" fill="#6a6a6a" stroke="#6a6a6a"/>
<path class="dl d2" d="M351.6 351.4L386.3 334.1"/>
<polygon points="432.0,149.8 418.7,146.7 419.0,137.9 432.3,140.9" fill="#747474" stroke="#747474"/>
<polygon points="432.0,149.8 441.6,146.8 442.0,138.0 432.3,140.9" fill="#808080" stroke="#808080"/>
<polygon points="432.3,140.9 442.0,138.0 428.7,135.0 419.0,137.9" fill="#6a6a6a" stroke="#6a6a6a"/>
<path class="dl d3" d="M425.6 139.4L435.3 136.5"/>
<polygon points="191.2,179.4 154.8,167.4 152.6,147.1 189.4,158.4" fill="#7e7e7e" stroke="#7e7e7e"/>
<polygon points="191.2,179.4 202.2,176.4 200.5,155.6 189.4,158.4" fill="#8c8c8c" stroke="#8c8c8c"/>
<polygon points="189.4,158.4 200.5,155.6 163.6,144.5 152.6,147.1" fill="#777" stroke="#777"/>
<polygon points="168.4,148.9 158.1,145.8 157.2,137.0 167.5,140.1" fill="#747474" stroke="#747474"/>
<polygon points="168.4,148.9 180.8,145.9 180.0,137.2 167.5,140.1" fill="#808080" stroke="#808080"/>
<polygon points="167.5,140.1 180.0,137.2 169.7,134.2 157.2,137.0" fill="#6a6a6a" stroke="#6a6a6a"/>
<path class="dl d3" d="M162.3 138.6L174.8 135.7"/>
<polygon points="148.4,153.8 133.6,149.1 132.5,140.2 147.4,144.8" fill="#747474" stroke="#747474"/>
<polygon points="148.4,153.8 168.4,148.9 167.5,140.1 147.4,144.8" fill="#808080" stroke="#808080"/>
<polygon points="147.4,144.8 167.5,140.1 152.6,135.7 132.5,140.2" fill="#6a6a6a" stroke="#6a6a6a"/>
<polygon points="211.1,154.9 180.8,145.9 180.0,137.2 210.4,145.9" fill="#747474" stroke="#747474"/>
<polygon points="211.1,154.9 218.1,153.1 217.4,144.1 210.4,145.9" fill="#808080" stroke="#808080"/>
<polygon points="210.4,145.9 217.4,144.1 186.9,135.5 180.0,137.2" fill="#6a6a6a" stroke="#6a6a6a"/>
<path class="dl d3" d="M213.9 145.0L183.5 136.3"/>
<polygon points="285.9,364.3 254.5,349.3 254.1,341.8 285.6,356.6" fill="#747474" stroke="#747474"/>
<polygon points="285.9,364.3 292.1,361.4 291.8,353.7 285.6,356.6" fill="#808080" stroke="#808080"/>
<polygon points="285.6,356.6 291.8,353.7 260.3,339.0 254.1,341.8" fill="#6a6a6a" stroke="#6a6a6a"/>
<path class="dl d2" d="M288.7 355.2L257.2 340.4"/>
<polygon points="371.3,154.5 358.5,151.3 358.5,142.4 371.4,145.5" fill="#747474" stroke="#747474"/>
<polygon points="371.3,154.5 406.8,143.9 407.1,135.2 371.4,145.5" fill="#808080" stroke="#808080"/>
<polygon points="371.4,145.5 407.1,135.2 394.3,132.3 358.5,142.4" fill="#6a6a6a" stroke="#6a6a6a"/>
<path class="dl d3" d="M364.9 143.9L400.7 133.7"/>
<polygon points="297.6,369.9 285.9,364.3 285.6,356.6 297.3,362.2" fill="#747474" stroke="#747474"/>
<polygon points="297.6,369.9 334.8,351.6 334.8,344.1 297.3,362.2" fill="#808080" stroke="#808080"/>
<polygon points="297.3,362.2 334.8,344.1 323.1,338.9 285.6,356.6" fill="#6a6a6a" stroke="#6a6a6a"/>
<path class="dl d2" d="M291.4 359.4L328.9 341.5"/>
<polygon points="382.1,178.2 371.8,175.5 372.0,154.7 382.5,157.4" fill="#7e7e7e" stroke="#7e7e7e"/>
<polygon points="382.1,178.2 417.2,166.7 417.9,146.5 382.5,157.4" fill="#8c8c8c" stroke="#8c8c8c"/>
<polygon points="382.5,157.4 417.9,146.5 407.6,144.1 372.0,154.7" fill="#777" stroke="#777"/>
<polygon points="308.2,392.6 298.8,388.0 298.2,370.2 307.7,374.7" fill="#7e7e7e" stroke="#7e7e7e"/>
<polygon points="308.2,392.6 345.0,373.5 344.9,356.1 307.7,374.7" fill="#8c8c8c" stroke="#8c8c8c"/>
<polygon points="307.7,374.7 344.9,356.1 335.5,351.9 298.2,370.2" fill="#777" stroke="#777"/>
<polygon points="282.2,395.8 243.2,375.8 242.0,358.3 281.4,377.8" fill="#7e7e7e" stroke="#7e7e7e"/>
<polygon points="282.2,395.8 292.0,390.8 291.3,373.0 281.4,377.8" fill="#8c8c8c" stroke="#8c8c8c"/>
<polygon points="281.4,377.8 291.3,373.0 251.9,353.9 242.0,358.3" fill="#777" stroke="#777"/>
<polygon points="263.3,375.2 231.9,359.5 231.4,351.8 262.9,367.4" fill="#747474" stroke="#747474"/>
<polygon points="263.3,375.2 285.9,364.3 285.6,356.6 262.9,367.4" fill="#808080" stroke="#808080"/>
<polygon points="262.9,367.4 285.6,356.6 254.1,341.8 231.4,351.8" fill="#6a6a6a" stroke="#6a6a6a"/>
<polygon points="383.2,157.5 371.3,154.5 371.4,145.5 383.4,148.4" fill="#747474" stroke="#747474"/>
<polygon points="383.2,157.5 418.7,146.7 419.0,137.9 383.4,148.4" fill="#808080" stroke="#808080"/>
<polygon points="383.4,148.4 419.0,137.9 407.1,135.2 371.4,145.5" fill="#6a6a6a" stroke="#6a6a6a"/>
<polygon points="308.4,375.1 297.6,369.9 297.3,362.2 308.1,367.3" fill="#747474" stroke="#747474"/>
<polygon points="308.4,375.1 345.6,356.4 345.6,348.8 308.1,367.3" fill="#808080" stroke="#808080"/>
<polygon points="308.1,367.3 345.6,348.8 334.8,344.1 297.3,362.2" fill="#6a6a6a" stroke="#6a6a6a"/>
<polygon points="256.8,378.3 225.4,362.4 224.8,354.8 256.3,370.5" fill="#747474" stroke="#747474"/>
<polygon points="256.8,378.3 263.3,375.2 262.9,367.4 256.3,370.5" fill="#808080" stroke="#808080"/>
<polygon points="256.3,370.5 262.9,367.4 231.4,351.8 224.8,354.8" fill="#6a6a6a" stroke="#6a6a6a"/>
<path class="dl d2" d="M259.6 368.9L228.1 353.3"/>
<polygon points="396.6,160.9 383.2,157.5 383.4,148.4 396.9,151.7" fill="#747474" stroke="#747474"/>
<polygon points="396.6,160.9 432.0,149.8 432.3,140.9 396.9,151.7" fill="#808080" stroke="#808080"/>
<polygon points="396.9,151.7 432.3,140.9 419.0,137.9 383.4,148.4" fill="#6a6a6a" stroke="#6a6a6a"/>
<path class="dl d3" d="M390.1 150.1L425.6 139.4"/>
<polygon points="320.5,380.9 308.4,375.1 308.1,367.3 320.3,373.0" fill="#747474" stroke="#747474"/>
<polygon points="320.5,380.9 357.7,361.8 357.7,354.1 320.3,373.0" fill="#808080" stroke="#808080"/>
<polygon points="320.3,373.0 357.7,354.1 345.6,348.8 308.1,367.3" fill="#6a6a6a" stroke="#6a6a6a"/>
<path class="dl d2" d="M314.2 370.1L351.6 351.4"/>
<polygon points="286.4,375.4 274.7,369.7 274.4,361.9 286.0,367.6" fill="#747474" stroke="#747474"/>
<polygon points="286.4,375.4 297.6,369.9 297.3,362.2 286.0,367.6" fill="#808080" stroke="#808080"/>
<polygon points="286.0,367.6 297.3,362.2 285.6,356.6 274.4,361.9" fill="#6a6a6a" stroke="#6a6a6a"/>
<path class="dl d2" d="M280.2 364.7L291.4 359.4"/>
<polygon points="243.5,164.5 211.1,154.9 210.4,145.9 243.0,155.2" fill="#747474" stroke="#747474"/>
<polygon points="243.5,164.5 250.5,162.6 249.9,153.3 243.0,155.2" fill="#808080" stroke="#808080"/>
<polygon points="243.0,155.2 249.9,153.3 217.4,144.1 210.4,145.9" fill="#6a6a6a" stroke="#6a6a6a"/>
<path class="dl d3" d="M246.5 154.3L213.9 145.0"/>
<polygon points="286.9,404.1 276.8,398.9 275.8,380.8 286.1,385.9" fill="#7b7b7b" stroke="#7b7b7b"/>
<polygon points="286.9,404.1 307.9,393.2 307.5,375.2 286.1,385.9" fill="#8b8b8b" stroke="#8b8b8b"/>
<polygon points="286.1,385.9 307.5,375.2 297.2,370.3 275.8,380.8" fill="#6a6a6a" stroke="#6a6a6a"/>
<polygon points="332.8,166.0 320.0,162.5 319.8,153.3 332.7,156.7" fill="#747474" stroke="#747474"/>
<polygon points="332.8,166.0 371.3,154.5 371.4,145.5 332.7,156.7" fill="#808080" stroke="#808080"/>
<polygon points="332.7,156.7 371.4,145.5 358.5,142.4 319.8,153.3" fill="#6a6a6a" stroke="#6a6a6a"/>
<path class="dl d3" d="M326.2 155.0L364.9 143.9"/>
<polygon points="273.8,386.9 256.8,378.3 256.3,370.5 273.4,379.0" fill="#747474" stroke="#747474"/>
<polygon points="273.8,386.9 291.7,378.0 291.4,370.2 273.4,379.0" fill="#808080" stroke="#808080"/>
<polygon points="273.4,379.0 291.4,370.2 274.4,361.9 256.3,370.5" fill="#6a6a6a" stroke="#6a6a6a"/>
<polygon points="286.1,385.9 275.8,380.8 275.4,373.0 285.7,378.0" fill="#7b7b7b" stroke="#7b7b7b"/>
<polygon points="286.1,385.9 307.5,375.2 307.3,367.4 285.7,378.0" fill="#8b8b8b" stroke="#8b8b8b"/>
<polygon points="285.7,378.0 307.3,367.4 297.0,362.6 275.4,373.0" fill="#6a6a6a" stroke="#6a6a6a"/>
<polygon points="230.8,192.3 191.2,179.4 189.4,158.4 229.3,170.6" fill="#7e7e7e" stroke="#7e7e7e"/>
<polygon points="230.8,192.3 241.8,189.1 240.5,167.6 229.3,170.6" fill="#8c8c8c" stroke="#8c8c8c"/>
<polygon points="229.3,170.6 240.5,167.6 200.5,155.6 189.4,158.4" fill="#777" stroke="#777"/>
<polygon points="185.8,161.4 155.7,152.0 154.7,143.1 185.0,152.2" fill="#747474" stroke="#747474"/>
<polygon points="185.8,161.4 211.1,154.9 210.4,145.9 185.0,152.2" fill="#808080" stroke="#808080"/>
<polygon points="185.0,152.2 210.4,145.9 180.0,137.2 154.7,143.1" fill="#6a6a6a" stroke="#6a6a6a"/>
<polygon points="178.5,163.3 148.4,153.8 147.4,144.8 177.6,154.0" fill="#747474" stroke="#747474"/>
<polygon points="178.5,163.3 185.8,161.4 185.0,152.2 177.6,154.0" fill="#808080" stroke="#808080"/>
<polygon points="177.6,154.0 185.0,152.2 154.7,143.1 147.4,144.8" fill="#6a6a6a" stroke="#6a6a6a"/>
<path class="dl d3" d="M181.3 153.1L151.1 143.9"/>
<polygon points="218.1,171.4 185.8,161.4 185.0,152.2 217.4,161.9" fill="#747474" stroke="#747474"/>
<polygon points="218.1,171.4 243.5,164.5 243.0,155.2 217.4,161.9" fill="#808080" stroke="#808080"/>
<polygon points="217.4,161.9 243.0,155.2 210.4,145.9 185.0,152.2" fill="#6a6a6a" stroke="#6a6a6a"/>
<polygon points="344.2,190.7 333.8,187.7 333.6,166.2 344.1,169.1" fill="#7e7e7e" stroke="#7e7e7e"/>
<polygon points="344.2,190.7 382.1,178.2 382.5,157.4 344.1,169.1" fill="#8c8c8c" stroke="#8c8c8c"/>
<polygon points="344.1,169.1 382.5,157.4 372.0,154.7 333.6,166.2" fill="#777" stroke="#777"/>
<polygon points="309.3,386.6 297.2,380.7 296.9,372.8 309.1,378.7" fill="#747474" stroke="#747474"/>
<polygon points="309.3,386.6 320.5,380.9 320.3,373.0 309.1,378.7" fill="#808080" stroke="#808080"/>
<polygon points="309.1,378.7 320.3,373.0 308.1,367.3 296.9,372.8" fill="#6a6a6a" stroke="#6a6a6a"/>
<path class="dl d2" d="M303.0 375.7L314.2 370.1"/>
<polygon points="344.8,169.3 332.8,166.0 332.7,156.7 344.8,159.9" fill="#747474" stroke="#747474"/>
<polygon points="344.8,169.3 383.2,157.5 383.4,148.4 344.8,159.9" fill="#808080" stroke="#808080"/>
<polygon points="344.8,159.9 383.4,148.4 371.4,145.5 332.7,156.7" fill="#6a6a6a" stroke="#6a6a6a"/>
<polygon points="210.7,173.4 178.5,163.3 177.6,154.0 210.0,163.9" fill="#747474" stroke="#747474"/>
<polygon points="210.7,173.4 218.1,171.4 217.4,161.9 210.0,163.9" fill="#808080" stroke="#808080"/>
<polygon points="210.0,163.9 217.4,161.9 185.0,152.2 177.6,154.0" fill="#6a6a6a" stroke="#6a6a6a"/>
<path class="dl d3" d="M213.7 162.9L181.3 153.1"/>
<polygon points="358.3,173.0 344.8,169.3 344.8,159.9 358.4,163.5" fill="#747474" stroke="#747474"/>
<polygon points="358.3,173.0 396.6,160.9 396.9,151.7 358.4,163.5" fill="#808080" stroke="#808080"/>
<polygon points="358.4,163.5 396.9,151.7 383.4,148.4 344.8,159.9" fill="#6a6a6a" stroke="#6a6a6a"/>
<path class="dl d3" d="M351.5 161.7L390.1 150.1"/>
<polygon points="278.2,174.7 243.5,164.5 243.0,155.2 277.8,165.1" fill="#747474" stroke="#747474"/>
<polygon points="278.2,174.7 285.1,172.7 284.8,163.2 277.8,165.1" fill="#808080" stroke="#808080"/>
<polygon points="277.8,165.1 284.8,163.2 249.9,153.3 243.0,155.2" fill="#6a6a6a" stroke="#6a6a6a"/>
<path class="dl d3" d="M281.3 164.2L246.5 154.3"/>
<polygon points="291.1,178.5 278.2,174.7 277.8,165.1 290.8,168.9" fill="#747474" stroke="#747474"/>
<polygon points="291.1,178.5 332.8,166.0 332.7,156.7 290.8,168.9" fill="#808080" stroke="#808080"/>
<polygon points="290.8,168.9 332.7,156.7 319.8,153.3 277.8,165.1" fill="#6a6a6a" stroke="#6a6a6a"/>
<path class="dl d3" d="M284.2 167.0L326.2 155.0"/>
<polygon points="285.7,378.0 275.4,373.0 266.8,208.8 278.6,212.7" fill="#7b7b7b" stroke="#7b7b7b"/>
<polygon points="285.7,378.0 307.3,367.4 303.6,204.5 278.6,212.7" fill="#8b8b8b" stroke="#8b8b8b"/>
<polygon points="278.6,212.7 303.6,204.5 291.8,200.8 266.8,208.8" fill="#6a6a6a" stroke="#6a6a6a"/>
<polygon points="303.0,204.2 292.6,200.9 291.8,178.8 302.3,181.9" fill="#7e7e7e" stroke="#7e7e7e"/>
<polygon points="303.0,204.2 344.2,190.7 344.1,169.1 302.3,181.9" fill="#8c8c8c" stroke="#8c8c8c"/>
<polygon points="302.3,181.9 344.1,169.1 333.6,166.2 291.8,178.8" fill="#777" stroke="#777"/>
<polygon points="273.9,206.5 230.8,192.3 229.3,170.6 272.9,184.0" fill="#7e7e7e" stroke="#7e7e7e"/>
<polygon points="273.9,206.5 284.9,202.9 284.0,180.6 272.9,184.0" fill="#8c8c8c" stroke="#8c8c8c"/>
<polygon points="272.9,184.0 284.0,180.6 240.5,167.6 229.3,170.6" fill="#777" stroke="#777"/>
<polygon points="252.7,182.2 218.1,171.4 217.4,161.9 252.1,172.4" fill="#747474" stroke="#747474"/>
<polygon points="252.7,182.2 278.2,174.7 277.8,165.1 252.1,172.4" fill="#808080" stroke="#808080"/>
<polygon points="252.1,172.4 277.8,165.1 243.0,155.2 217.4,161.9" fill="#6a6a6a" stroke="#6a6a6a"/>
<polygon points="303.1,182.1 291.1,178.5 290.8,168.9 302.8,172.3" fill="#747474" stroke="#747474"/>
<polygon points="303.1,182.1 344.8,169.3 344.8,159.9 302.8,172.3" fill="#808080" stroke="#808080"/>
<polygon points="302.8,172.3 344.8,159.9 332.7,156.7 290.8,168.9" fill="#6a6a6a" stroke="#6a6a6a"/>
<polygon points="245.3,184.3 210.7,173.4 210.0,163.9 244.7,174.5" fill="#747474" stroke="#747474"/>
<polygon points="245.3,184.3 252.7,182.2 252.1,172.4 244.7,174.5" fill="#808080" stroke="#808080"/>
<polygon points="244.7,174.5 252.1,172.4 217.4,161.9 210.0,163.9" fill="#6a6a6a" stroke="#6a6a6a"/>
<path class="dl d3" d="M248.4 173.4L213.7 162.9"/>
<polygon points="316.6,186.1 303.1,182.1 302.8,172.3 316.5,176.2" fill="#747474" stroke="#747474"/>
<polygon points="316.6,186.1 358.3,173.0 358.4,163.5 316.5,176.2" fill="#808080" stroke="#808080"/>
<polygon points="316.5,176.2 358.4,163.5 344.8,159.9 302.8,172.3" fill="#6a6a6a" stroke="#6a6a6a"/>
<path class="dl d3" d="M309.6 174.3L351.5 161.7"/>
<polygon points="278.5,182.3 265.6,178.4 265.1,168.7 278.1,172.5" fill="#747474" stroke="#747474"/>
<polygon points="278.5,182.3 291.1,178.5 290.8,168.9 278.1,172.5" fill="#808080" stroke="#808080"/>
<polygon points="278.1,172.5 290.8,168.9 277.8,165.1 265.1,168.7" fill="#6a6a6a" stroke="#6a6a6a"/>
<path class="dl d3" d="M271.6 170.6L284.2 167.0"/>
<polygon points="278.6,212.7 266.8,208.8 265.6,186.2 277.6,189.9" fill="#7b7b7b" stroke="#7b7b7b"/>
<polygon points="278.6,212.7 303.6,204.5 303.1,182.1 277.6,189.9" fill="#8b8b8b" stroke="#8b8b8b"/>
<polygon points="277.6,189.9 303.1,182.1 291.1,178.5 265.6,186.2" fill="#6a6a6a" stroke="#6a6a6a"/>
<polygon points="264.1,190.3 245.3,184.3 244.7,174.5 263.7,180.3" fill="#747474" stroke="#747474"/>
<polygon points="264.1,190.3 284.5,184.1 284.1,174.3 263.7,180.3" fill="#808080" stroke="#808080"/>
<polygon points="263.7,180.3 284.1,174.3 265.1,168.7 244.7,174.5" fill="#6a6a6a" stroke="#6a6a6a"/>
<polygon points="277.6,189.9 265.6,186.2 265.1,176.3 277.2,179.9" fill="#7b7b7b" stroke="#7b7b7b"/>
<polygon points="277.6,189.9 303.1,182.1 302.8,172.3 277.2,179.9" fill="#8b8b8b" stroke="#8b8b8b"/>
<polygon points="277.2,179.9 302.8,172.3 290.8,168.9 265.1,176.3" fill="#6a6a6a" stroke="#6a6a6a"/>
<polygon points="304.1,190.0 290.5,185.9 290.2,176.1 303.8,180.1" fill="#747474" stroke="#747474"/>
<polygon points="304.1,190.0 316.6,186.1 316.5,176.2 303.8,180.1" fill="#808080" stroke="#808080"/>
<polygon points="303.8,180.1 316.5,176.2 302.8,172.3 290.2,176.1" fill="#6a6a6a" stroke="#6a6a6a"/>
<path class="dl d3" d="M296.9 178.1L309.6 174.3"/>
</svg>
<svg class="abs" style="left:1070px;top:940px" width="150" height="80" viewBox="1070 940 150 80">
  <path d="M1133.7 1008.7L1172 977.5" stroke="#ff2020" stroke-width="1.3" fill="none"/>
  <path d="M1133.7 1008.7L1096 978.5" stroke="#108010" stroke-width="1.3" fill="none"/>
  <path d="M1133.7 1008.7L1133.7 972" stroke="#0000ff" stroke-width="1.4" fill="none"/>
  <polygon points="1188.5,965.5 1178,981.5 1172.5,983 1169,978.5 1171,972.5" fill="#ff0000"/>
  <polygon points="1081.5,967 1090,967.5 1099.5,974.5 1100,981 1094,985.5 1088,979" fill="#008000"/>
  <polygon points="1133.7,949.5 1135.2,958 1139.5,967 1137.5,971.5 1133.7,973 1129.5,971.5 1127.5,967 1132.2,958" fill="#0000ff"/>
  <text x="1136" y="962.5" font-family="DejaVu Sans, Liberation Sans, sans-serif" font-weight="bold" font-size="14" fill="#1a1af0">z</text>
  <text x="1194.5" y="977" font-family="DejaVu Sans, Liberation Sans, sans-serif" font-weight="bold" font-size="14" fill="#f01010">x</text>
  <text x="1084" y="973" font-family="DejaVu Sans, Liberation Sans, sans-serif" font-weight="bold" font-size="10" fill="#006000">y</text>
</svg>
<div class="abs" id="ydot" style="left:1114px;top:534px;width:2px;height:2px;background:#e8e060"></div>
<!-- side toolbar icons -->
<svg class="abs" style="left:1545px;top:345px" width="84" height="270" viewBox="1545 345 84 270">
<use href="#conecube" transform="translate(1563.400 356.200)"/>
<!-- checklist -->
<rect x="1569.400" y="422.300" width="33.300" height="40.600" rx="3.500" fill="#f0f0f4" stroke="#2890e8" stroke-width="3"/>
<rect x="1579" y="430" width="10" height="9" fill="#fff" stroke="#b0b0b0" stroke-width="0.800"/>
<rect x="1579" y="446" width="10" height="9" fill="#fff" stroke="#b0b0b0" stroke-width="0.800"/>
<path d="M1579.500 431.500L1584.500 437.500L1594 426.500M1579.500 447.500L1584.500 453.500L1594 442.500" stroke="#e02020" stroke-width="2.600" fill="none"/>
<!-- node icon -->
<g stroke="#808080" stroke-width="0.600">
<polygon points="1583.500,488.800 1592.200,488.800 1592.200,532.800 1583.500,532.800" fill="#c8c8c8"/>
<polygon points="1564.900,516 1605,500.500 1607.200,508 1567,524" fill="#d4d4d4"/>
<polygon points="1574.800,501.700 1580,497 1608,520 1607,528.500 1602,529" fill="#bcbcbc"/>
</g>
<path d="M1592.500 524L1606.500 529.500" stroke="#30a030" stroke-width="1.200"/>
<circle cx="1587.300" cy="511.600" r="7.600" fill="url(#gGlobe)"/>
<!-- beam icon -->
<defs><linearGradient id="gGold" x1="0" y1="0" x2="0" y2="1"><stop offset="0" stop-color="#ffe040"/><stop offset="1" stop-color="#c89010"/></linearGradient></defs>
<path d="M1563.600 558.900H1608.400M1563.600 592.500H1608.400M1568.800 552.700V597.500M1602.800 552.700V597.500" stroke="#2848a8" stroke-width="2.200" fill="none"/>
<rect x="1568.600" y="567.600" width="34.800" height="14.200" fill="url(#gGold)"/>
</svg>
<!-- status bar -->
<div class="abs" style="left:0;top:1095px;width:1642px;height:30px;background:#f0f0f0"></div>
<div class="abs ssep" style="left:927px"></div>
<div class="abs ssep" style="left:1055px"></div>
<div class="abs ssep" style="left:1160px"></div>
<div class="abs ssep" style="left:1295px"></div>
<div class="abs ssep" style="left:1416px"></div>
<style>.ssep{top:1098px;width:1px;height:27px;background:#d7d7d7}.st{letter-spacing:-0.1px}</style>
<svg class="abs" style="left:1627px;top:1110.5px" width="14" height="14"><g fill="#bcbcbc"><rect x="10" y="1" width="2" height="2"/><rect x="6" y="5" width="2" height="2"/><rect x="10" y="5" width="2" height="2"/><rect x="2" y="9" width="2" height="2"/><rect x="6" y="9" width="2" height="2"/><rect x="10" y="9" width="2" height="2"/></g></svg>
<span class="t" style="left:40.0px;top:13.57px;font-size:18px;color:#000;letter-spacing:-0.368px">SeismoStruct</span>
<span class="t" style="left:159.0px;top:13.57px;font-size:18px;color:#000;letter-spacing:-0.005px">[Senza titolo.spf]</span>
<span class="t" style="left:9.0px;top:50.97px;font-size:18px;color:#000;letter-spacing:-1.005px">File</span>
<span class="t" style="left:57.0px;top:50.97px;font-size:18px;color:#000;letter-spacing:0.338px">Modifica</span>
<span class="t" style="left:148.3px;top:50.97px;font-size:18px;color:#000;letter-spacing:-0.647px">Visualizza</span>
<span class="t" style="left:244.7px;top:50.97px;font-size:18px;color:#000;letter-spacing:-0.016px">Definisci</span>
<span class="t" style="left:333.6px;top:50.97px;font-size:18px;color:#000;letter-spacing:-0.204px">Risultati</span>
<span class="t" style="left:417.5px;top:50.97px;font-size:18px;color:#000;letter-spacing:0.109px">Strumenti</span>
<span class="t" style="left:516.9px;top:50.97px;font-size:18px;color:#000;letter-spacing:-0.729px">Esegui</span>
<span class="t" style="left:590.3px;top:50.97px;font-size:18px;color:#000;letter-spacing:0.217px">Aiuto</span>
<span class="t" style="left:26.1px;top:166.76px;font-size:16px;color:#838383;letter-spacing:-0.073px">Analisi dinamica time-history</span>
<span class="t" style="left:492.7px;top:166.06px;font-size:16px;color:#000;letter-spacing:-0.204px">Pre-Processore</span>
<span class="t" style="left:686.0px;top:166.06px;font-size:16px;color:#000;letter-spacing:-0.125px">Processore</span>
<span class="t" style="left:880.0px;top:166.06px;font-size:16px;color:#a0a0a0;letter-spacing:-0.040px">Post-Processore</span>
<span class="t" style="left:23.0px;top:217.16px;font-size:16px;color:#000">1</span>
<span class="t" style="left:507.9px;top:217.16px;font-size:16px;color:#000;letter-spacing:0.107px">Amplificatore della deformazione: 5,0</span>
<span class="t" style="left:839.0px;top:217.16px;font-size:16px;color:#6d6d6d;letter-spacing:-0.212px">Modello 3D animato</span>
<span class="t" style="left:8.9px;top:258.26px;font-size:16px;color:#000;letter-spacing:-0.089px">Registri Analisi</span>
<span class="t" style="left:130.8px;top:258.26px;font-size:16px;color:#000;letter-spacing:-0.043px">Passi di Output</span>
<span class="t" style="left:257.2px;top:255.56px;font-size:16px;color:#000;letter-spacing:-0.017px">Visualizzatore della Deformata</span>
<span class="t" style="left:491.9px;top:258.26px;font-size:16px;color:#000;letter-spacing:-0.205px">Diagrammi delle sollecitazioni</span>
<span class="t" style="left:714.1px;top:258.26px;font-size:16px;color:#000;letter-spacing:-0.126px">Parametri Risposta Globale</span>
<span class="t" style="left:926.1px;top:258.26px;font-size:16px;color:#000;letter-spacing:-0.215px">Sollecitazioni negli Elementi</span>
<span class="t" style="left:1136.9px;top:258.26px;font-size:16px;color:#000;letter-spacing:0.047px">Output Sforzi e Deformazioni</span>
<span class="t" style="left:28.1px;top:307.96px;font-size:16px;color:#1e3556;font-family:'DejaVu Sans','Liberation Sans',sans-serif;font-weight:bold;transform-origin:0 0;transform:scaleX(1.0735)">Valori di Spostamenti</span>
<span class="t" style="left:28.1px;top:350.16px;font-size:16px;color:#1e3556;font-family:'DejaVu Sans','Liberation Sans',sans-serif;font-weight:bold;transform-origin:0 0;transform:scaleX(1.0874)">Verifiche secondo Normativa</span>
<span class="t" style="left:28.1px;top:392.36px;font-size:16px;color:#1e3556;font-family:'DejaVu Sans','Liberation Sans',sans-serif;font-weight:bold;transform-origin:0 0;transform:scaleX(1.0847)">Criteri Prestazionali</span>
<span class="t" style="left:383.9px;top:335.26px;font-size:16px;color:#fff;letter-spacing:0.325px">Output No.</span>
<span class="t" style="left:485.5px;top:335.26px;font-size:16px;color:#fff;letter-spacing:-1.044px">1,</span>
<span class="t" style="left:516.2px;top:335.26px;font-size:16px;color:#fff;letter-spacing:0.362px">Tempo: 0,0000</span>
<span class="t" style="left:383.9px;top:354.81px;font-size:16px;color:#000080;letter-spacing:0.325px">Output No.</span>
<span class="t" style="left:484.3px;top:354.81px;font-size:16px;color:#000080;letter-spacing:0.156px">2,</span>
<span class="t" style="left:516.2px;top:354.81px;font-size:16px;color:#000080;letter-spacing:0.362px">Tempo: 0,0100</span>
<span class="t" style="left:383.9px;top:374.36px;font-size:16px;color:#000080;letter-spacing:0.325px">Output No.</span>
<span class="t" style="left:484.3px;top:374.36px;font-size:16px;color:#000080;letter-spacing:0.156px">3,</span>
<span class="t" style="left:516.2px;top:374.36px;font-size:16px;color:#000080;letter-spacing:0.362px">Tempo: 0,0200</span>
<span class="t" style="left:383.9px;top:393.91px;font-size:16px;color:#000080;letter-spacing:0.325px">Output No.</span>
<span class="t" style="left:484.3px;top:393.91px;font-size:16px;color:#000080;letter-spacing:0.156px">4,</span>
<span class="t" style="left:516.2px;top:393.91px;font-size:16px;color:#000080;letter-spacing:0.362px">Tempo: 0,0300</span>
<span class="t" style="left:383.9px;top:413.46px;font-size:16px;color:#000080;letter-spacing:0.325px">Output No.</span>
<span class="t" style="left:484.3px;top:413.46px;font-size:16px;color:#000080;letter-spacing:0.156px">5,</span>
<span class="t" style="left:516.2px;top:413.46px;font-size:16px;color:#000080;letter-spacing:0.362px">Tempo: 0,0400</span>
<span class="t" style="left:383.9px;top:433.01px;font-size:16px;color:#000080;letter-spacing:0.325px">Output No.</span>
<span class="t" style="left:484.3px;top:433.01px;font-size:16px;color:#000080;letter-spacing:0.156px">6,</span>
<span class="t" style="left:516.2px;top:433.01px;font-size:16px;color:#000080;letter-spacing:0.362px">Tempo: 0,0500</span>
<span class="t" style="left:383.9px;top:452.56px;font-size:16px;color:#000080;letter-spacing:0.325px">Output No.</span>
<span class="t" style="left:484.3px;top:452.56px;font-size:16px;color:#000080;letter-spacing:0.156px">7,</span>
<span class="t" style="left:516.2px;top:452.56px;font-size:16px;color:#000080;letter-spacing:0.362px">Tempo: 0,0600</span>
<span class="t" style="left:383.9px;top:472.11px;font-size:16px;color:#000080;letter-spacing:0.325px">Output No.</span>
<span class="t" style="left:484.3px;top:472.11px;font-size:16px;color:#000080;letter-spacing:0.156px">8,</span>
<span class="t" style="left:516.2px;top:472.11px;font-size:16px;color:#000080;letter-spacing:0.362px">Tempo: 0,0700</span>
<span class="t" style="left:383.9px;top:491.66px;font-size:16px;color:#000080;letter-spacing:0.325px">Output No.</span>
<span class="t" style="left:484.3px;top:491.66px;font-size:16px;color:#000080;letter-spacing:0.156px">9,</span>
<span class="t" style="left:516.2px;top:491.66px;font-size:16px;color:#000080;letter-spacing:0.362px">Tempo: 0,0800</span>
<span class="t" style="left:383.9px;top:511.20px;font-size:16px;color:#000080;letter-spacing:0.325px">Output No.</span>
<span class="t" style="left:480.5px;top:511.20px;font-size:16px;color:#000080;letter-spacing:-0.275px">10,</span>
<span class="t" style="left:521.2px;top:511.20px;font-size:16px;color:#000080;letter-spacing:0.262px">Tempo: 0,0900</span>
<span class="t" style="left:383.9px;top:530.75px;font-size:16px;color:#000080;letter-spacing:0.325px">Output No.</span>
<span class="t" style="left:480.5px;top:530.75px;font-size:16px;color:#000080;letter-spacing:0.319px">11,</span>
<span class="t" style="left:521.2px;top:530.75px;font-size:16px;color:#000080;letter-spacing:0.262px">Tempo: 0,1000</span>
<span class="t" style="left:383.9px;top:550.30px;font-size:16px;color:#000080;letter-spacing:0.325px">Output No.</span>
<span class="t" style="left:480.5px;top:550.30px;font-size:16px;color:#000080;letter-spacing:-0.275px">12,</span>
<span class="t" style="left:521.2px;top:550.30px;font-size:16px;color:#000080;letter-spacing:0.361px">Tempo: 0,1100</span>
<span class="t" style="left:383.9px;top:569.85px;font-size:16px;color:#000080;letter-spacing:0.325px">Output No.</span>
<span class="t" style="left:480.5px;top:569.85px;font-size:16px;color:#000080;letter-spacing:-0.275px">13,</span>
<span class="t" style="left:521.2px;top:569.85px;font-size:16px;color:#000080;letter-spacing:0.262px">Tempo: 0,1200</span>
<span class="t" style="left:383.9px;top:589.40px;font-size:16px;color:#000080;letter-spacing:0.325px">Output No.</span>
<span class="t" style="left:480.5px;top:589.40px;font-size:16px;color:#000080;letter-spacing:-0.275px">14,</span>
<span class="t" style="left:521.2px;top:589.40px;font-size:16px;color:#000080;letter-spacing:0.262px">Tempo: 0,1300</span>
<span class="t" style="left:383.9px;top:608.95px;font-size:16px;color:#000080;letter-spacing:0.325px">Output No.</span>
<span class="t" style="left:480.5px;top:608.95px;font-size:16px;color:#000080;letter-spacing:-0.275px">15,</span>
<span class="t" style="left:521.2px;top:608.95px;font-size:16px;color:#000080;letter-spacing:0.262px">Tempo: 0,1400</span>
<span class="t" style="left:383.9px;top:628.50px;font-size:16px;color:#000080;letter-spacing:0.325px">Output No.</span>
<span class="t" style="left:480.5px;top:628.50px;font-size:16px;color:#000080;letter-spacing:-0.275px">16,</span>
<span class="t" style="left:521.2px;top:628.50px;font-size:16px;color:#000080;letter-spacing:0.262px">Tempo: 0,1500</span>
<span class="t" style="left:383.9px;top:648.05px;font-size:16px;color:#000080;letter-spacing:0.325px">Output No.</span>
<span class="t" style="left:480.5px;top:648.05px;font-size:16px;color:#000080;letter-spacing:-0.275px">17,</span>
<span class="t" style="left:521.2px;top:648.05px;font-size:16px;color:#000080;letter-spacing:0.262px">Tempo: 0,1600</span>
<span class="t" style="left:383.9px;top:667.60px;font-size:16px;color:#000080;letter-spacing:0.325px">Output No.</span>
<span class="t" style="left:480.5px;top:667.60px;font-size:16px;color:#000080;letter-spacing:-0.275px">18,</span>
<span class="t" style="left:521.2px;top:667.60px;font-size:16px;color:#000080;letter-spacing:0.262px">Tempo: 0,1700</span>
<span class="t" style="left:383.9px;top:687.15px;font-size:16px;color:#000080;letter-spacing:0.325px">Output No.</span>
<span class="t" style="left:480.5px;top:687.15px;font-size:16px;color:#000080;letter-spacing:-0.275px">19,</span>
<span class="t" style="left:521.2px;top:687.15px;font-size:16px;color:#000080;letter-spacing:0.262px">Tempo: 0,1800</span>
<span class="t" style="left:383.9px;top:706.70px;font-size:16px;color:#000080;letter-spacing:0.325px">Output No.</span>
<span class="t" style="left:480.5px;top:706.70px;font-size:16px;color:#000080;letter-spacing:-0.275px">20,</span>
<span class="t" style="left:521.2px;top:706.70px;font-size:16px;color:#000080;letter-spacing:0.262px">Tempo: 0,1900</span>
<span class="t" style="left:383.9px;top:726.24px;font-size:16px;color:#000080;letter-spacing:0.325px">Output No.</span>
<span class="t" style="left:480.5px;top:726.24px;font-size:16px;color:#000080;letter-spacing:-0.275px">21,</span>
<span class="t" style="left:521.2px;top:726.24px;font-size:16px;color:#000080;letter-spacing:0.262px">Tempo: 0,2000</span>
<span class="t" style="left:383.9px;top:745.79px;font-size:16px;color:#000080;letter-spacing:0.325px">Output No.</span>
<span class="t" style="left:480.5px;top:745.79px;font-size:16px;color:#000080;letter-spacing:-0.275px">22,</span>
<span class="t" style="left:521.2px;top:745.79px;font-size:16px;color:#000080;letter-spacing:0.262px">Tempo: 0,2100</span>
<span class="t" style="left:383.9px;top:765.34px;font-size:16px;color:#000080;letter-spacing:0.325px">Output No.</span>
<span class="t" style="left:480.5px;top:765.34px;font-size:16px;color:#000080;letter-spacing:-0.275px">23,</span>
<span class="t" style="left:521.2px;top:765.34px;font-size:16px;color:#000080;letter-spacing:0.262px">Tempo: 0,2200</span>
<span class="t" style="left:383.9px;top:784.89px;font-size:16px;color:#000080;letter-spacing:0.325px">Output No.</span>
<span class="t" style="left:480.5px;top:784.89px;font-size:16px;color:#000080;letter-spacing:-0.275px">24,</span>
<span class="t" style="left:521.2px;top:784.89px;font-size:16px;color:#000080;letter-spacing:0.262px">Tempo: 0,2300</span>
<span class="t" style="left:383.9px;top:804.44px;font-size:16px;color:#000080;letter-spacing:0.325px">Output No.</span>
<span class="t" style="left:480.5px;top:804.44px;font-size:16px;color:#000080;letter-spacing:-0.275px">25,</span>
<span class="t" style="left:521.2px;top:804.44px;font-size:16px;color:#000080;letter-spacing:0.262px">Tempo: 0,2400</span>
<span class="t" style="left:383.9px;top:823.99px;font-size:16px;color:#000080;letter-spacing:0.325px">Output No.</span>
<span class="t" style="left:480.5px;top:823.99px;font-size:16px;color:#000080;letter-spacing:-0.275px">26,</span>
<span class="t" style="left:521.2px;top:823.99px;font-size:16px;color:#000080;letter-spacing:0.262px">Tempo: 0,2500</span>
<span class="t" style="left:383.9px;top:843.54px;font-size:16px;color:#000080;letter-spacing:0.325px">Output No.</span>
<span class="t" style="left:480.5px;top:843.54px;font-size:16px;color:#000080;letter-spacing:-0.275px">27,</span>
<span class="t" style="left:521.2px;top:843.54px;font-size:16px;color:#000080;letter-spacing:0.262px">Tempo: 0,2600</span>
<span class="t" style="left:383.9px;top:863.09px;font-size:16px;color:#000080;letter-spacing:0.325px">Output No.</span>
<span class="t" style="left:480.5px;top:863.09px;font-size:16px;color:#000080;letter-spacing:-0.275px">28,</span>
<span class="t" style="left:521.2px;top:863.09px;font-size:16px;color:#000080;letter-spacing:0.262px">Tempo: 0,2700</span>
<span class="t" style="left:383.9px;top:882.64px;font-size:16px;color:#000080;letter-spacing:0.325px">Output No.</span>
<span class="t" style="left:480.5px;top:882.64px;font-size:16px;color:#000080;letter-spacing:-0.275px">29,</span>
<span class="t" style="left:521.2px;top:882.64px;font-size:16px;color:#000080;letter-spacing:0.262px">Tempo: 0,2800</span>
<span class="t" style="left:383.9px;top:902.18px;font-size:16px;color:#000080;letter-spacing:0.325px">Output No.</span>
<span class="t" style="left:480.5px;top:902.18px;font-size:16px;color:#000080;letter-spacing:-0.275px">30,</span>
<span class="t" style="left:521.2px;top:902.18px;font-size:16px;color:#000080;letter-spacing:0.262px">Tempo: 0,2900</span>
<span class="t" style="left:383.9px;top:921.73px;font-size:16px;color:#000080;letter-spacing:0.325px">Output No.</span>
<span class="t" style="left:480.5px;top:921.73px;font-size:16px;color:#000080;letter-spacing:-0.275px">31,</span>
<span class="t" style="left:521.2px;top:921.73px;font-size:16px;color:#000080;letter-spacing:0.262px">Tempo: 0,3000</span>
<span class="t" style="left:383.9px;top:941.28px;font-size:16px;color:#000080;letter-spacing:0.325px">Output No.</span>
<span class="t" style="left:480.5px;top:941.28px;font-size:16px;color:#000080;letter-spacing:-0.275px">32,</span>
<span class="t" style="left:521.2px;top:941.28px;font-size:16px;color:#000080;letter-spacing:0.262px">Tempo: 0,3100</span>
<span class="t" style="left:383.9px;top:960.83px;font-size:16px;color:#000080;letter-spacing:0.325px">Output No.</span>
<span class="t" style="left:480.5px;top:960.83px;font-size:16px;color:#000080;letter-spacing:-0.275px">33,</span>
<span class="t" style="left:521.2px;top:960.83px;font-size:16px;color:#000080;letter-spacing:0.262px">Tempo: 0,3200</span>
<span class="t" style="left:383.9px;top:980.38px;font-size:16px;color:#000080;letter-spacing:0.325px">Output No.</span>
<span class="t" style="left:480.5px;top:980.38px;font-size:16px;color:#000080;letter-spacing:-0.275px">34,</span>
<span class="t" style="left:521.2px;top:980.38px;font-size:16px;color:#000080;letter-spacing:0.262px">Tempo: 0,3300</span>
<span class="t" style="left:383.9px;top:999.93px;font-size:16px;color:#000080;letter-spacing:0.325px">Output No.</span>
<span class="t" style="left:480.5px;top:999.93px;font-size:16px;color:#000080;letter-spacing:-0.275px">35,</span>
<span class="t" style="left:521.2px;top:999.93px;font-size:16px;color:#000080;letter-spacing:0.262px">Tempo: 0,3400</span>
<span class="t" style="left:383.9px;top:1019.48px;font-size:16px;color:#000080;letter-spacing:0.325px">Output No.</span>
<span class="t" style="left:480.5px;top:1019.48px;font-size:16px;color:#000080;letter-spacing:-0.275px">36,</span>
<span class="t" style="left:521.2px;top:1019.48px;font-size:16px;color:#000080;letter-spacing:0.262px">Tempo: 0,3500</span>
<span class="t" style="left:383.9px;top:1039.03px;font-size:16px;color:#000080;letter-spacing:0.325px">Output No.</span>
<span class="t" style="left:480.5px;top:1039.03px;font-size:16px;color:#000080;letter-spacing:-0.275px">37,</span>
<span class="t" style="left:521.2px;top:1039.03px;font-size:16px;color:#000080;letter-spacing:0.262px">Tempo: 0,3600</span>
<span class="t" style="left:383.9px;top:1058.58px;font-size:16px;color:#000080;letter-spacing:0.325px">Output No.</span>
<span class="t" style="left:480.5px;top:1058.58px;font-size:16px;color:#000080;letter-spacing:-0.275px">38,</span>
<span class="t" style="left:521.2px;top:1058.58px;font-size:16px;color:#000080;letter-spacing:0.262px">Tempo: 0,3700</span>
<span class="t" style="left:934.1px;top:1103.39px;font-size:17.5px;color:#000;letter-spacing:-0.022px">Lunghezza: m</span>
<span class="t" style="left:1062.3px;top:1103.39px;font-size:17.5px;color:#000;letter-spacing:-0.282px">Forza: kN</span>
<span class="t" style="left:1167.9px;top:1103.39px;font-size:17.5px;color:#000;letter-spacing:0.003px">Massa: tonne</span>
<span class="t" style="left:1302.1px;top:1103.39px;font-size:17.5px;color:#000;letter-spacing:-0.287px">Sforzo: kPa</span>
<span class="t" style="left:1423.2px;top:1103.39px;font-size:17.5px;color:#000;letter-spacing:0.082px">Accelerazione: m/sec2</span>
<span class="t" style="left:853.6px;top:376.91px;font-size:34.5px;color:#ff0000;letter-spacing:0.992px">Moduli</span>
<span class="t" style="left:971.2px;top:376.91px;font-size:34.5px;color:#ff0000;letter-spacing:-0.994px">Post-Processore</span>
</body>
</html>
